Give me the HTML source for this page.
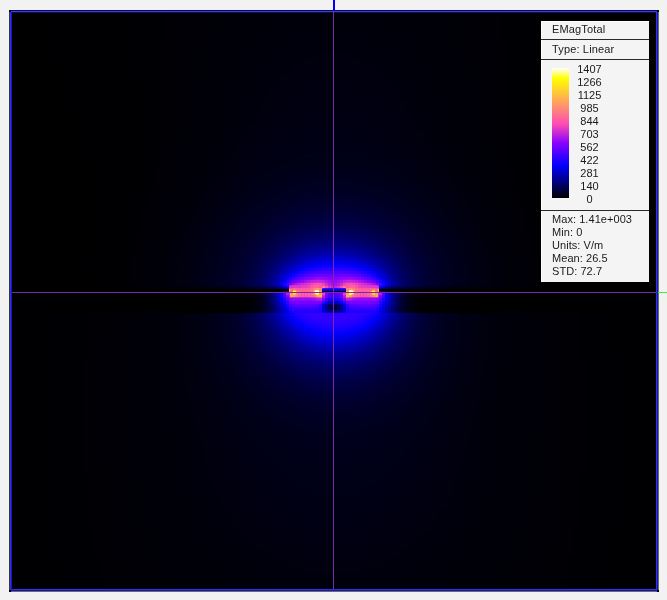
<!DOCTYPE html>
<html lang="en"><head><meta charset="utf-8"><title>EMagTotal field plot</title>
<style>
html,body{margin:0;padding:0}
body{width:667px;height:600px;background:#f2f2f2;position:relative;overflow:hidden;font-family:"Liberation Sans",sans-serif;font-size:11px;color:#1a1a1a}
.frame{position:absolute;left:9px;top:10px;width:650px;height:582px;background:#000}
.field{position:absolute;left:0;top:0}
.e{position:absolute}
.legend .t,.lb,.st{filter:grayscale(1)}
.vline{position:absolute;left:333px;top:12px;width:1px;height:577px;background:#7a28a6}
.hline{position:absolute;left:12px;top:292px;width:644px;height:1px;background:#7a28a6}
.vstub{position:absolute;left:333px;top:0;width:2px;height:10px;background:#0000ff}
.hstub{position:absolute;left:658px;top:292px;width:9px;height:1px;background:#40f040}
.legend{position:absolute;left:541px;top:21px;width:108px;height:261px;background:#f4f4f4;box-shadow:inset 1px 1px 0 #fdfdfd}
.legend .ln{position:absolute;left:0;width:108px;height:1px;background:#2a2a2a}
.legend .t{position:absolute;left:11px;white-space:nowrap;line-height:13px;letter-spacing:0.15px}
.bar{position:absolute;left:11px;top:47px;width:17px;height:130px;background:linear-gradient(to top,#000 0%,#0000ff 25%,#8700ff 42%,#ff4cb2 57%,#ffff00 92%,#ffffff 100%)}
.lb{position:absolute;left:18.5px;width:60px;text-align:center;line-height:13px;white-space:nowrap}
.st{position:absolute;left:11px;line-height:13px;white-space:nowrap;letter-spacing:0.06px}
</style></head><body>
<div class="frame"></div>
<svg class="field" width="667" height="600" viewBox="0 0 667 600">
<defs>
<clipPath id="fc"><rect x="9" y="10" width="650" height="582"/></clipPath>
<filter id="soft" color-interpolation-filters="sRGB" x="-5%" y="-5%" width="110%" height="110%"><feGaussianBlur stdDeviation="0.7"/></filter>
<filter id="soft3" color-interpolation-filters="sRGB" x="-5%" y="-5%" width="110%" height="110%"><feGaussianBlur stdDeviation="2.2"/></filter>
<filter id="soft2" color-interpolation-filters="sRGB" x="-10%" y="-30%" width="120%" height="160%"><feGaussianBlur stdDeviation="0.55"/></filter>
</defs>
<g clip-path="url(#fc)">
<g filter="url(#soft3)" stroke-width="6.5" fill="none">
<path stroke="#000001" d="M4 13h36M628 13h36M4 19h42M622 19h42M4 25h42M622 25h42M4 31h42M622 31h42M4 37h42M622 37h42M4 43h42M622 43h42M4 49h48M616 49h48M4 55h48M616 55h48M4 61h48M616 61h48M4 67h54M610 67h54M4 73h54M610 73h54M4 79h54M610 79h54M4 85h54M610 85h54M4 91h60M604 91h60M4 97h60M604 97h60M4 103h60M604 103h60M4 109h66M598 109h66M4 115h66M598 115h66M4 121h72M592 121h72M4 127h72M592 127h72M4 133h72M592 133h72M4 139h78M586 139h78M4 145h78M586 145h78M4 151h78M586 151h78M4 157h84M580 157h84M4 163h84M580 163h84M4 169h90M574 169h90M4 175h90M574 175h90M4 181h90M574 181h90M4 187h96M568 187h96M4 193h96M568 193h96M4 199h96M568 199h96M4 205h96M568 205h96M4 211h96M568 211h96M4 217h90M574 217h90M4 223h90M574 223h90M4 229h90M574 229h90M4 235h90M574 235h90M4 241h90M574 241h90M4 247h90M574 247h90M4 253h90M574 253h90M4 259h84M580 259h84M4 265h84M580 265h84M4 271h84M580 271h84M4 277h84M580 277h84M4 283h84M580 283h84M22 289h84M562 289h84"/>
<path stroke="#000002" d="M40 13h60M568 13h60M46 19h54M568 19h54M46 25h54M568 25h54M46 31h54M568 31h54M46 37h54M568 37h54M46 43h54M568 43h54M52 49h54M562 49h54M52 55h54M562 55h54M52 61h54M562 61h54M58 67h48M562 67h48M58 73h48M562 73h48M58 79h48M562 79h48M58 85h54M556 85h54M64 91h48M556 91h48M64 97h48M556 97h48M64 103h48M556 103h48M70 109h48M550 109h48M70 115h48M550 115h48M76 121h42M550 121h42M76 127h42M550 127h42M76 133h48M544 133h48M82 139h42M544 139h42M82 145h42M544 145h42M82 151h48M538 151h48M88 157h42M538 157h42M88 163h42M538 163h42M94 169h36M538 169h36M94 175h36M538 175h36M94 181h30M544 181h30M100 187h24M544 187h24M100 193h24M544 193h24M100 199h24M544 199h24M100 205h24M544 205h24M100 211h18M550 211h18M94 217h24M550 217h24M94 223h24M550 223h24M94 229h24M550 229h24M94 235h24M550 235h24M94 241h18M556 241h18M94 247h18M556 247h18M94 253h18M556 253h18M88 259h24M556 259h24M88 265h24M556 265h24M88 271h24M556 271h24M88 277h24M556 277h24M88 283h18M562 283h18M106 289h24M538 289h24M4 313h6M658 313h6M4 319h6M658 319h6M4 325h6M658 325h6M4 331h6M658 331h6M4 337h6M658 337h6M4 343h6M658 343h6M4 349h6M658 349h6M4 355h6M658 355h6M4 583h6M658 583h6M4 589h6M658 589h6"/>
<path stroke="#000003" d="M100 13h36M532 13h36M100 19h36M532 19h36M100 25h36M532 25h36M100 31h36M532 31h36M100 37h36M532 37h36M100 43h36M532 43h36M106 49h30M532 49h30M106 55h30M532 55h30M106 61h30M532 61h30M106 67h30M532 67h30M106 73h30M532 73h30M106 79h30M532 79h30M112 85h30M526 85h30M112 91h30M526 91h30M112 97h30M526 97h30M112 103h30M526 103h30M118 109h24M526 109h24M118 115h24M526 115h24M118 121h24M526 121h24M118 127h30M520 127h30M124 133h24M520 133h24M124 139h24M520 139h24M124 145h24M520 145h24M130 151h18M520 151h18M130 157h18M520 157h18M130 163h18M520 163h18M130 169h12M526 169h12M130 175h12M526 175h12M124 181h18M526 181h18M124 187h18M526 187h18M124 193h12M532 193h12M124 199h12M532 199h12M124 205h12M532 205h12M118 211h18M532 211h18M118 217h12M538 217h12M118 223h12M538 223h12M118 229h12M538 229h12M118 235h12M538 235h12M112 241h12M544 241h12M112 247h12M544 247h12M112 253h12M544 253h12M112 259h12M544 259h12M112 265h12M544 265h12M112 271h12M544 271h12M112 277h12M544 277h12M106 283h18M544 283h18M130 289h12M526 289h12M10 313h48M610 313h48M10 319h48M610 319h48M10 325h48M610 325h48M10 331h48M610 331h48M10 337h48M610 337h48M10 343h48M610 343h48M10 349h48M610 349h48M10 355h42M616 355h42M4 361h48M616 361h48M4 367h48M616 367h48M4 373h48M616 373h48M4 379h48M616 379h48M4 385h48M616 385h48M4 391h48M616 391h48M4 397h48M616 397h48M4 403h48M616 403h48M4 409h48M616 409h48M4 415h48M616 415h48M4 421h48M616 421h48M4 427h48M616 427h48M4 433h48M616 433h48M4 439h48M616 439h48M4 445h48M616 445h48M4 451h48M616 451h48M4 457h48M616 457h48M4 463h48M616 463h48M4 469h48M616 469h48M4 475h48M616 475h48M4 481h48M616 481h48M4 487h48M616 487h48M4 493h48M616 493h48M4 499h48M616 499h48M4 505h48M616 505h48M4 511h48M616 511h48M4 517h48M616 517h48M4 523h54M610 523h54M4 529h54M610 529h54M4 535h54M610 535h54M4 541h54M610 541h54M4 547h54M610 547h54M4 553h54M610 553h54M4 559h54M610 559h54M4 565h54M610 565h54M4 571h60M604 571h60M4 577h60M604 577h60M10 583h54M604 583h54M10 589h54M604 589h54"/>
<path stroke="#000004" d="M136 13h30M502 13h30M136 19h30M502 19h30M136 25h30M502 25h30M136 31h30M502 31h30M136 37h30M502 37h30M136 43h24M508 43h24M136 49h24M508 49h24M136 55h24M508 55h24M136 61h24M508 61h24M136 67h24M508 67h24M136 73h24M508 73h24M136 79h24M508 79h24M142 85h18M508 85h18M142 91h18M508 91h18M142 97h18M508 97h18M142 103h18M508 103h18M142 109h18M508 109h18M142 115h18M508 115h18M142 121h18M508 121h18M148 127h12M508 127h12M148 133h12M508 133h12M148 139h12M508 139h12M148 145h12M508 145h12M148 151h12M508 151h12M148 157h12M508 157h12M148 163h12M508 163h12M142 169h12M514 169h12M142 175h12M514 175h12M142 181h12M514 181h12M142 187h12M514 187h12M136 193h12M520 193h12M136 199h12M520 199h12M136 205h12M520 205h12M136 211h6M526 211h6M130 217h12M526 217h12M130 223h12M526 223h12M130 229h12M526 229h12M130 235h6M532 235h6M124 241h12M532 241h12M124 247h12M532 247h12M124 253h12M532 253h12M124 259h6M538 259h6M124 265h6M538 265h6M124 271h6M538 271h6M124 277h6M538 277h6M124 283h6M538 283h6M142 289h6M520 289h6M58 313h30M580 313h30M58 319h30M580 319h30M58 325h30M580 325h30M58 331h30M580 331h30M58 337h30M580 337h30M58 343h30M580 343h30M58 349h30M580 349h30M52 355h36M580 355h36M52 361h30M586 361h30M52 367h30M586 367h30M52 373h30M586 373h30M52 379h30M586 379h30M52 385h30M586 385h30M52 391h30M586 391h30M52 397h30M586 397h30M52 403h30M586 403h30M52 409h30M586 409h30M52 415h30M586 415h30M52 421h30M586 421h30M52 427h30M586 427h30M52 433h30M586 433h30M52 439h30M586 439h30M52 445h30M586 445h30M52 451h30M586 451h30M52 457h30M586 457h30M52 463h30M586 463h30M52 469h30M586 469h30M52 475h36M580 475h36M52 481h36M580 481h36M52 487h36M580 487h36M52 493h36M580 493h36M52 499h36M580 499h36M52 505h36M580 505h36M52 511h36M580 511h36M52 517h36M580 517h36M58 523h30M580 523h30M58 529h36M574 529h36M58 535h36M574 535h36M58 541h36M574 541h36M58 547h36M574 547h36M58 553h36M574 553h36M58 559h42M568 559h42M58 565h42M568 565h42M64 571h36M568 571h36M64 577h36M568 577h36M64 583h42M562 583h42M64 589h42M562 589h42"/>
<path stroke="#000005" d="M166 13h24M478 13h24M166 19h24M478 19h24M166 25h24M478 25h24M166 31h18M484 31h18M166 37h18M484 37h18M160 43h24M484 43h24M160 49h24M484 49h24M160 55h18M490 55h18M160 61h18M490 61h18M160 67h18M490 67h18M160 73h18M490 73h18M160 79h18M490 79h18M160 85h18M490 85h18M160 91h18M490 91h18M160 97h18M490 97h18M160 103h18M490 103h18M160 109h18M490 109h18M160 115h18M490 115h18M160 121h18M490 121h18M160 127h12M496 127h12M160 133h12M496 133h12M160 139h12M496 139h12M160 145h12M496 145h12M160 151h12M496 151h12M160 157h12M496 157h12M160 163h6M502 163h6M154 169h12M502 169h12M154 175h12M502 175h12M154 181h6M508 181h6M154 187h6M508 187h6M148 193h12M508 193h12M148 199h6M514 199h6M148 205h6M514 205h6M142 211h12M514 211h12M142 217h6M520 217h6M142 223h6M520 223h6M142 229h6M520 229h6M136 235h12M520 235h12M136 241h6M526 241h6M136 247h6M526 247h6M136 253h6M526 253h6M130 259h12M526 259h12M130 265h12M526 265h12M130 271h6M532 271h6M130 277h6M532 277h6M130 283h6M532 283h6M148 289h12M508 289h12M88 313h24M556 313h24M88 319h24M556 319h24M88 325h24M556 325h24M88 331h24M556 331h24M88 337h18M562 337h18M88 343h18M562 343h18M88 349h18M562 349h18M88 355h18M562 355h18M82 361h24M562 361h24M82 367h24M562 367h24M82 373h24M562 373h24M82 379h24M562 379h24M82 385h24M562 385h24M82 391h24M562 391h24M82 397h24M562 397h24M82 403h24M562 403h24M82 409h24M562 409h24M82 415h24M562 415h24M82 421h24M562 421h24M82 427h24M562 427h24M82 433h24M562 433h24M82 439h24M562 439h24M82 445h24M562 445h24M82 451h24M562 451h24M82 457h24M562 457h24M82 463h24M562 463h24M82 469h30M556 469h30M88 475h24M556 475h24M88 481h24M556 481h24M88 487h24M556 487h24M88 493h24M556 493h24M88 499h24M556 499h24M88 505h24M556 505h24M88 511h30M550 511h30M88 517h30M550 517h30M88 523h30M550 523h30M94 529h24M550 529h24M94 535h24M550 535h24M94 541h30M544 541h30M94 547h30M544 547h30M94 553h30M544 553h30M100 559h24M544 559h24M100 565h30M538 565h30M100 571h30M538 571h30M100 577h36M532 577h36M106 583h30M532 583h30M106 589h30M532 589h30"/>
<path stroke="#000006" d="M190 13h24M454 13h24M190 19h24M454 19h24M190 25h18M460 25h18M184 31h24M460 31h24M184 37h18M466 37h18M184 43h18M466 43h18M184 49h18M466 49h18M178 55h18M472 55h18M178 61h18M472 61h18M178 67h18M472 67h18M178 73h18M472 73h18M178 79h12M478 79h12M178 85h12M478 85h12M178 91h12M478 91h12M178 97h12M478 97h12M178 103h12M478 103h12M178 109h12M478 109h12M178 115h12M478 115h12M178 121h12M478 121h12M172 127h12M484 127h12M172 133h12M484 133h12M166 163h6M496 163h6M166 169h6M496 169h6M166 175h6M496 175h6M160 181h12M496 181h12M160 187h12M496 187h12M160 193h6M502 193h6M154 199h12M502 199h12M154 205h6M508 205h6M154 211h6M508 211h6M148 217h12M508 217h12M148 223h6M514 223h6M148 229h6M514 229h6M148 235h6M514 235h6M142 241h12M514 241h12M142 247h6M520 247h6M142 253h6M520 253h6M142 259h6M520 259h6M142 265h6M520 265h6M136 271h12M520 271h12M136 277h6M526 277h6M136 283h6M526 283h6M160 289h6M502 289h6M112 313h18M538 313h18M112 319h12M544 319h12M112 325h12M544 325h12M112 331h12M544 331h12M106 337h18M544 337h18M106 343h18M544 343h18M106 349h18M544 349h18M106 355h18M544 355h18M106 361h18M544 361h18M106 367h18M544 367h18M106 373h18M544 373h18M106 379h18M544 379h18M106 385h18M544 385h18M106 391h18M544 391h18M106 397h18M544 397h18M106 403h18M544 403h18M106 409h18M544 409h18M106 415h18M544 415h18M106 421h18M544 421h18M106 427h18M544 427h18M106 433h18M544 433h18M106 439h18M544 439h18M106 445h18M544 445h18M106 451h18M544 451h18M106 457h18M544 457h18M106 463h24M538 463h24M112 469h18M538 469h18M112 475h18M538 475h18M112 481h18M538 481h18M112 487h18M538 487h18M112 493h18M538 493h18M112 499h24M532 499h24M112 505h24M532 505h24M118 511h18M532 511h18M118 517h18M532 517h18M118 523h18M532 523h18M118 529h24M526 529h24M118 535h24M526 535h24M124 541h18M526 541h18M124 547h24M520 547h24M124 553h24M520 553h24M124 559h24M520 559h24M130 565h24M514 565h24M130 571h24M514 571h24M136 577h24M508 577h24M136 583h24M508 583h24M136 589h30M502 589h30"/>
<path stroke="#000007" d="M214 13h24M430 13h24M214 19h18M436 19h18M208 25h18M442 25h18M208 31h18M442 31h18M202 37h18M448 37h18M202 43h18M448 43h18M202 49h12M454 49h12M196 55h18M454 55h18M196 61h12M460 61h12M196 67h12M460 67h12M196 73h12M460 73h12M190 79h18M460 79h18M190 85h12M466 85h12M190 91h12M466 91h12M190 97h12M466 97h12M190 103h12M466 103h12M190 109h12M466 109h12M190 115h6M472 115h6M190 121h6M472 121h6M184 127h12M472 127h12M184 133h12M472 133h12M166 193h6M496 193h6M166 199h6M496 199h6M160 205h12M496 205h12M160 211h6M502 211h6M160 217h6M502 217h6M154 223h6M508 223h6M154 229h6M508 229h6M154 235h6M508 235h6M154 241h6M508 241h6M148 247h6M514 247h6M148 253h6M514 253h6M148 259h6M514 259h6M148 265h6M514 265h6M148 271h6M514 271h6M142 277h6M520 277h6M142 283h6M520 283h6M166 289h6M496 289h6M130 313h12M526 313h12M124 319h18M526 319h18M124 325h12M532 325h12M124 331h12M532 331h12M124 337h12M532 337h12M124 343h12M532 343h12M124 349h12M532 349h12M124 355h12M532 355h12M124 361h12M532 361h12M124 367h12M532 367h12M124 373h12M532 373h12M124 379h12M532 379h12M124 385h12M532 385h12M124 391h12M532 391h12M124 397h12M532 397h12M124 403h12M532 403h12M124 409h12M532 409h12M124 415h12M532 415h12M124 421h12M532 421h12M124 427h12M532 427h12M124 433h18M526 433h18M124 439h18M526 439h18M124 445h18M526 445h18M124 451h18M526 451h18M124 457h18M526 457h18M130 463h12M526 463h12M130 469h12M526 469h12M130 475h12M526 475h12M130 481h18M520 481h18M130 487h18M520 487h18M130 493h18M520 493h18M136 499h12M520 499h12M136 505h18M514 505h18M136 511h18M514 511h18M136 517h18M514 517h18M136 523h18M514 523h18M142 529h18M508 529h18M142 535h18M508 535h18M142 541h24M502 541h24M148 547h18M502 547h18M148 553h18M502 553h18M148 559h24M496 559h24M154 565h18M496 565h18M154 571h24M490 571h24M160 577h24M484 577h24M160 583h24M484 583h24M166 589h24M478 589h24"/>
<path stroke="#000008" d="M238 13h24M406 13h24M232 19h24M412 19h24M226 25h24M418 25h24M226 31h18M424 31h18M220 37h18M430 37h18M220 43h12M436 43h12M214 49h18M436 49h18M214 55h12M442 55h12M208 61h18M442 61h18M208 67h12M448 67h12M208 73h12M448 73h12M208 79h12M448 79h12M202 85h12M454 85h12M202 91h12M454 91h12M202 97h12M454 97h12M202 103h12M454 103h12M202 109h6M460 109h6M196 115h12M460 115h12M196 121h12M460 121h12M196 127h12M460 127h12M196 133h6M466 133h6M166 211h6M496 211h6M166 217h6M496 217h6M160 223h6M502 223h6M160 229h6M502 229h6M160 235h6M502 235h6M154 247h6M508 247h6M154 253h6M508 253h6M154 259h6M508 259h6M154 265h6M508 265h6M148 277h6M514 277h6M148 283h6M514 283h6M142 313h6M520 313h6M142 319h6M520 319h6M136 325h12M520 325h12M136 331h12M520 331h12M136 337h12M520 337h12M136 343h12M520 343h12M136 349h12M520 349h12M136 355h12M520 355h12M136 361h12M520 361h12M136 367h12M520 367h12M136 373h12M520 373h12M136 379h12M520 379h12M136 385h12M520 385h12M136 391h12M520 391h12M136 397h12M520 397h12M136 403h12M520 403h12M136 409h12M520 409h12M136 415h12M520 415h12M136 421h18M514 421h18M136 427h18M514 427h18M142 433h12M514 433h12M142 439h12M514 439h12M142 445h12M514 445h12M142 451h12M514 451h12M142 457h12M514 457h12M142 463h12M514 463h12M142 469h12M514 469h12M142 475h18M508 475h18M148 481h12M508 481h12M148 487h12M508 487h12M148 493h12M508 493h12M148 499h18M502 499h18M154 505h12M502 505h12M154 511h12M502 511h12M154 517h18M496 517h18M154 523h18M496 523h18M160 529h12M496 529h12M160 535h18M490 535h18M166 541h12M490 541h12M166 547h18M484 547h18M166 553h18M484 553h18M172 559h18M478 559h18M172 565h24M472 565h24M178 571h18M472 571h18M184 577h18M466 577h18M184 583h24M460 583h24M190 589h24M454 589h24"/>
<path stroke="#000009" d="M262 13h24M382 13h24M256 19h18M394 19h18M250 25h18M400 25h18M244 31h18M406 31h18M238 37h18M412 37h18M232 43h18M418 43h18M232 49h12M424 49h12M226 55h12M430 55h12M226 61h12M430 61h12M220 67h12M436 67h12M220 73h12M436 73h12M220 79h12M436 79h12M214 85h12M442 85h12M214 91h12M442 91h12M214 97h12M442 97h12M214 103h6M448 103h6M208 109h12M448 109h12M208 115h12M448 115h12M208 121h6M454 121h6M208 127h6M454 127h6M202 133h12M454 133h12M166 223h6M496 223h6M166 229h6M496 229h6M166 235h6M496 235h6M160 241h6M502 241h6M160 247h6M502 247h6M160 253h6M502 253h6M160 259h6M502 259h6M154 271h6M508 271h6M154 277h6M508 277h6M154 283h6M508 283h6M148 313h12M508 313h12M148 319h12M508 319h12M148 325h12M508 325h12M148 331h6M514 331h6M148 337h6M514 337h6M148 343h6M514 343h6M148 349h6M514 349h6M148 355h6M514 355h6M148 361h6M514 361h6M148 367h6M514 367h6M148 373h12M508 373h12M148 379h12M508 379h12M148 385h12M508 385h12M148 391h12M508 391h12M148 397h12M508 397h12M148 403h12M508 403h12M148 409h12M508 409h12M148 415h12M508 415h12M154 421h6M508 421h6M154 427h6M508 427h6M154 433h12M502 433h12M154 439h12M502 439h12M154 445h12M502 445h12M154 451h12M502 451h12M154 457h12M502 457h12M154 463h12M502 463h12M154 469h12M502 469h12M160 475h12M496 475h12M160 481h12M496 481h12M160 487h12M496 487h12M160 493h12M496 493h12M166 499h12M490 499h12M166 505h12M490 505h12M166 511h18M484 511h18M172 517h12M484 517h12M172 523h12M484 523h12M172 529h18M478 529h18M178 535h12M478 535h12M178 541h18M472 541h18M184 547h18M466 547h18M184 553h18M466 553h18M190 559h18M460 559h18M196 565h18M454 565h18M196 571h18M454 571h18M202 577h18M448 577h18M208 583h18M442 583h18M214 589h18M436 589h18"/>
<path stroke="#00000a" d="M286 13h96M274 19h36M358 19h36M268 25h24M376 25h24M262 31h18M388 31h18M256 37h18M394 37h18M250 43h18M400 43h18M244 49h18M406 49h18M238 55h18M412 55h18M238 61h12M418 61h12M232 67h12M424 67h12M232 73h12M424 73h12M232 79h6M430 79h6M226 85h12M430 85h12M226 91h12M430 91h12M226 97h6M436 97h6M220 103h12M436 103h12M220 109h12M436 109h12M220 115h6M442 115h6M214 121h12M442 121h12M214 127h12M442 127h12M214 133h6M448 133h6M166 241h6M496 241h6M166 247h6M496 247h6M160 265h6M502 265h6M160 271h6M502 271h6M160 277h6M502 277h6M160 283h6M502 283h6M160 313h6M502 313h6M160 319h6M502 319h6M160 325h6M502 325h6M154 331h12M502 331h12M154 337h12M502 337h12M154 343h12M502 343h12M154 349h12M502 349h12M154 355h12M502 355h12M154 361h12M502 361h12M154 367h12M502 367h12M160 373h6M502 373h6M160 379h6M502 379h6M160 385h6M502 385h6M160 391h6M502 391h6M160 397h6M502 397h6M160 403h6M502 403h6M160 409h12M496 409h12M160 415h12M496 415h12M160 421h12M496 421h12M160 427h12M496 427h12M166 433h6M496 433h6M166 439h6M496 439h6M166 445h6M496 445h6M166 451h6M496 451h6M166 457h6M496 457h6M166 463h12M490 463h12M166 469h12M490 469h12M172 475h12M484 475h12M172 481h12M484 481h12M172 487h12M484 487h12M172 493h12M484 493h12M178 499h12M478 499h12M178 505h12M478 505h12M184 511h12M472 511h12M184 517h12M472 517h12M184 523h18M466 523h18M190 529h12M466 529h12M190 535h18M460 535h18M196 541h12M460 541h12M202 547h12M454 547h12M202 553h18M448 553h18M208 559h18M442 559h18M214 565h18M436 565h18M214 571h24M430 571h24M220 577h24M424 577h24M226 583h24M418 583h24M232 589h24M412 589h24"/>
<path stroke="#00000b" d="M310 19h48M292 25h84M280 31h30M358 31h30M274 37h18M376 37h18M268 43h18M382 43h18M262 49h12M394 49h12M256 55h12M400 55h12M250 61h12M406 61h12M244 67h18M406 67h18M244 73h12M412 73h12M238 79h12M418 79h12M238 85h12M418 85h12M238 91h6M424 91h6M232 97h12M424 97h12M232 103h12M424 103h12M232 109h6M430 109h6M226 115h12M430 115h12M226 121h6M436 121h6M226 127h6M436 127h6M220 133h12M436 133h12M166 253h6M496 253h6M166 259h6M496 259h6M166 265h6M496 265h6M166 271h6M496 271h6M166 277h6M496 277h6M166 313h6M496 313h6M166 319h6M496 319h6M166 325h6M496 325h6M166 331h6M496 331h6M166 337h6M496 337h6M166 343h6M496 343h6M166 349h6M496 349h6M166 355h6M496 355h6M166 361h6M496 361h6M166 367h6M496 367h6M166 373h6M496 373h6M166 379h6M496 379h6M166 385h6M496 385h6M166 391h6M496 391h6M166 397h6M496 397h6M166 403h6M496 403h6M178 463h12M478 463h12M178 469h12M478 469h12M184 475h6M478 475h6M184 481h6M478 481h6M184 487h12M472 487h12M184 493h12M472 493h12M190 499h6M472 499h6M190 505h12M466 505h12M196 511h6M466 511h6M196 517h12M460 517h12M202 523h6M460 523h6M202 529h12M454 529h12M208 535h12M448 535h12M208 541h18M442 541h18M214 547h12M442 547h12M220 553h12M436 553h12M226 559h12M430 559h12M232 565h12M424 565h12M238 571h18M412 571h18M244 577h18M406 577h18M250 583h24M394 583h24M256 589h30M382 589h30"/>
<path stroke="#00000c" d="M310 31h48M292 37h84M286 43h24M358 43h24M274 49h24M370 49h24M268 55h18M382 55h18M262 61h18M388 61h18M262 67h12M394 67h12M256 73h12M400 73h12M250 79h18M400 79h18M250 85h12M406 85h12M244 91h12M412 91h12M244 97h12M412 97h12M244 103h6M418 103h6M238 109h12M418 109h12M238 115h6M424 115h6M232 121h12M424 121h12M232 127h6M430 127h6M232 133h6M430 133h6M166 283h6M496 283h6M190 463h6M472 463h6M190 469h12M466 469h12M190 475h12M466 475h12M190 481h12M466 481h12M196 487h6M466 487h6M196 493h12M460 493h12M196 499h12M460 499h12M202 505h12M454 505h12M202 511h12M454 511h12M208 517h12M448 517h12M208 523h12M448 523h12M214 529h12M442 529h12M220 535h12M436 535h12M226 541h12M430 541h12M226 547h18M424 547h18M232 553h18M418 553h18M238 559h18M412 559h18M244 565h24M400 565h24M256 571h18M394 571h18M262 577h30M376 577h30M274 583h36M358 583h36M286 589h96"/>
<path stroke="#00000d" d="M310 43h48M298 49h72M286 55h30M352 55h30M280 61h24M364 61h24M274 67h18M376 67h18M268 73h18M382 73h18M268 79h12M388 79h12M262 85h12M394 85h12M256 91h12M400 91h12M256 97h12M400 97h12M250 103h12M406 103h12M250 109h12M406 109h12M244 115h12M412 115h12M244 121h12M412 121h12M238 127h12M418 127h12M238 133h6M424 133h6M196 463h12M460 463h12M202 469h6M460 469h6M202 475h6M460 475h6M202 481h12M454 481h12M202 487h12M454 487h12M208 493h6M454 493h6M208 499h12M448 499h12M214 505h6M448 505h6M214 511h12M442 511h12M220 517h12M436 517h12M220 523h12M436 523h12M226 529h12M430 529h12M232 535h12M424 535h12M238 541h12M418 541h12M244 547h12M412 547h12M250 553h18M400 553h18M256 559h18M394 559h18M268 565h18M382 565h18M274 571h30M364 571h30M292 577h84M310 583h48"/>
<path stroke="#00000e" d="M316 55h36M304 61h60M292 67h30M346 67h30M286 73h18M364 73h18M280 79h18M370 79h18M274 85h18M376 85h18M268 91h18M382 91h18M268 97h12M388 97h12M262 103h12M394 103h12M262 109h12M394 109h12M256 115h12M400 115h12M256 121h6M406 121h6M250 127h12M406 127h12M244 133h12M412 133h12M208 463h6M454 463h6M208 469h6M454 469h6M208 475h12M448 475h12M214 481h6M448 481h6M214 487h12M442 487h12M214 493h12M442 493h12M220 499h12M436 499h12M220 505h12M436 505h12M226 511h12M430 511h12M232 517h6M430 517h6M232 523h12M424 523h12M238 529h12M418 529h12M244 535h12M412 535h12M250 541h12M406 541h12M256 547h18M394 547h18M268 553h18M382 553h18M274 559h24M370 559h24M286 565h96M304 571h60"/>
<path stroke="#00000f" d="M322 67h24M304 73h60M298 79h72M292 85h24M352 85h24M286 91h18M364 91h18M280 97h18M370 97h18M274 103h18M376 103h18M274 109h12M382 109h12M268 115h12M388 115h12M262 121h12M394 121h12M262 127h6M400 127h6M256 133h6M406 133h6M214 463h12M442 463h12M214 469h12M442 469h12M220 475h6M442 475h6M220 481h12M436 481h12M226 487h6M436 487h6M226 493h12M430 493h12M232 499h6M430 499h6M232 505h12M424 505h12M238 511h6M424 511h6M238 517h12M418 517h12M244 523h12M412 523h12M250 529h12M406 529h12M256 535h12M400 535h12M262 541h18M388 541h18M274 547h18M376 547h18M286 553h24M358 553h24M298 559h72"/>
<path stroke="#000010" d="M316 85h36M304 91h60M298 97h30M340 97h30M292 103h18M358 103h18M286 109h18M364 109h18M280 115h12M376 115h12M274 121h12M382 121h12M268 127h12M388 127h12M262 133h12M394 133h12M226 463h6M436 463h6M226 469h6M436 469h6M226 475h12M430 475h12M232 481h6M430 481h6M232 487h12M424 487h12M238 493h6M424 493h6M238 499h12M418 499h12M244 505h12M412 505h12M244 511h12M412 511h12M250 517h12M406 517h12M256 523h12M400 523h12M262 529h18M388 529h18M268 535h18M382 535h18M280 541h18M370 541h18M292 547h84M310 553h48"/>
<path stroke="#000011" d="M328 97h12M310 103h48M304 109h60M292 115h24M352 115h24M286 121h18M364 121h18M280 127h18M370 127h18M274 133h12M382 133h12M232 463h6M430 463h6M232 469h12M424 469h12M238 475h6M424 475h6M238 481h12M418 481h12M244 487h6M418 487h6M244 493h12M412 493h12M250 499h12M406 499h12M256 505h6M406 505h6M256 511h12M400 511h12M262 517h12M394 517h12M268 523h18M382 523h18M280 529h12M376 529h12M286 535h24M358 535h24M298 541h72"/>
<path stroke="#000012" d="M316 115h36M304 121h60M298 127h24M346 127h24M286 133h18M364 133h18M238 463h12M418 463h12M244 469h6M418 469h6M244 475h12M412 475h12M250 481h6M412 481h6M250 487h12M406 487h12M256 493h12M400 493h12M262 499h6M400 499h6M262 505h12M394 505h12M268 511h18M382 511h18M274 517h18M376 517h18M286 523h18M364 523h18M292 529h84M310 535h48"/>
<path stroke="#000013" d="M322 127h24M304 133h60M250 463h6M412 463h6M250 469h6M412 469h6M256 475h6M406 475h6M256 481h12M400 481h12M262 487h12M394 487h12M268 493h12M388 493h12M268 499h18M382 499h18M274 505h18M376 505h18M286 511h12M370 511h12M292 517h24M352 517h24M304 523h60"/>
<path stroke="#000014" d="M256 463h6M406 463h6M256 469h12M400 469h12M262 475h12M394 475h12M268 481h12M388 481h12M274 487h12M382 487h12M280 493h12M376 493h12M286 499h12M370 499h12M292 505h18M358 505h18M298 511h72M316 517h36"/>
<path stroke="#000015" d="M262 463h12M394 463h12M268 469h12M388 469h12M274 475h12M382 475h12M280 481h12M376 481h12M286 487h12M370 487h12M292 493h18M358 493h18M298 499h72M310 505h48"/>
<path stroke="#000016" d="M274 463h6M388 463h6M280 469h6M382 469h6M286 475h12M370 475h12M292 481h12M364 481h12M298 487h24M346 487h24M310 493h48"/>
<path stroke="#000017" d="M280 463h12M376 463h12M286 469h18M364 469h18M298 475h18M352 475h18M304 481h60M322 487h24"/>
<path stroke="#000018" d="M292 463h18M358 463h18M304 469h24M340 469h24M316 475h36"/>
<path stroke="#000019" d="M310 463h48M328 469h12"/>
</g>
<g filter="url(#soft)" stroke-width="3.4" fill="none">
<path stroke="#000005" d="M166 131.5h9M493 131.5h9M166 134.5h9M493 134.5h9M166 137.5h9M493 137.5h9M166 140.5h6M496 140.5h6M166 143.5h6M496 143.5h6M166 146.5h6M496 146.5h6M166 149.5h6M496 149.5h6M166 152.5h6M496 152.5h6M166 155.5h3M499 155.5h3M166 158.5h3M499 158.5h3M166 161.5h3M499 161.5h3M166 164.5h3M499 164.5h3"/>
<path stroke="#000006" d="M175 131.5h9M484 131.5h9M175 134.5h9M484 134.5h9M175 137.5h9M484 137.5h9M172 140.5h12M484 140.5h12M172 143.5h12M484 143.5h12M172 146.5h9M487 146.5h9M172 149.5h9M487 149.5h9M172 152.5h9M487 152.5h9M169 155.5h12M487 155.5h12M169 158.5h9M490 158.5h9M169 161.5h9M490 161.5h9M169 164.5h9M490 164.5h9M166 167.5h9M493 167.5h9M166 170.5h9M493 170.5h9M166 173.5h9M493 173.5h9M166 176.5h6M496 176.5h6M166 179.5h6M496 179.5h6M166 182.5h6M496 182.5h6M166 185.5h3M499 185.5h3M166 188.5h3M499 188.5h3M250 302.5h3M415 302.5h3M250 305.5h3M415 305.5h3M250 308.5h3M415 308.5h3M250 311.5h3M415 311.5h3"/>
<path stroke="#000007" d="M184 131.5h12M472 131.5h12M184 134.5h12M472 134.5h12M184 137.5h9M475 137.5h9M184 140.5h9M475 140.5h9M184 143.5h9M475 143.5h9M181 146.5h9M478 146.5h9M181 149.5h9M478 149.5h9M181 152.5h9M478 152.5h9M181 155.5h6M481 155.5h6M178 158.5h9M481 158.5h9M178 161.5h9M481 161.5h9M178 164.5h6M484 164.5h6M175 167.5h9M484 167.5h9M175 170.5h9M484 170.5h9M175 173.5h6M487 173.5h6M172 176.5h9M487 176.5h9M172 179.5h6M490 179.5h6M172 182.5h6M490 182.5h6M169 185.5h9M490 185.5h9M169 188.5h6M493 188.5h6M166 191.5h9M493 191.5h9M166 194.5h6M496 194.5h6M166 197.5h6M496 197.5h6M166 200.5h6M496 200.5h6M166 203.5h3M499 203.5h3M166 206.5h3M499 206.5h3M166 287.5h6M496 287.5h6M250 293.5h3M415 293.5h3M250 296.5h3M415 296.5h3M250 299.5h3M415 299.5h3"/>
<path stroke="#000008" d="M196 131.5h9M463 131.5h9M196 134.5h9M463 134.5h9M193 137.5h9M466 137.5h9M193 140.5h9M466 140.5h9M193 143.5h9M466 143.5h9M190 146.5h9M469 146.5h9M190 149.5h9M469 149.5h9M190 152.5h9M469 152.5h9M187 155.5h9M472 155.5h9M187 158.5h9M472 158.5h9M187 161.5h6M475 161.5h6M184 164.5h9M475 164.5h9M184 167.5h9M475 167.5h9M184 170.5h6M478 170.5h6M181 173.5h9M478 173.5h9M181 176.5h6M481 176.5h6M178 179.5h9M481 179.5h9M178 182.5h6M484 182.5h6M178 185.5h6M484 185.5h6M175 188.5h6M487 188.5h6M175 191.5h6M487 191.5h6M172 194.5h9M487 194.5h9M172 197.5h6M490 197.5h6M172 200.5h6M490 200.5h6M169 203.5h6M493 203.5h6M169 206.5h6M493 206.5h6M166 209.5h6M496 209.5h6M166 212.5h6M496 212.5h6M166 215.5h6M496 215.5h6M166 218.5h3M499 218.5h3M166 221.5h3M499 221.5h3M166 224.5h3M499 224.5h3M172 287.5h6M490 287.5h6"/>
<path stroke="#000009" d="M205 131.5h9M454 131.5h9M205 134.5h6M457 134.5h6M202 137.5h9M457 137.5h9M202 140.5h9M457 140.5h9M202 143.5h6M460 143.5h6M199 146.5h9M460 146.5h9M199 149.5h6M463 149.5h6M199 152.5h6M463 152.5h6M196 155.5h9M463 155.5h9M196 158.5h6M466 158.5h6M193 161.5h9M466 161.5h9M193 164.5h6M469 164.5h6M193 167.5h6M469 167.5h6M190 170.5h6M472 170.5h6M190 173.5h6M472 173.5h6M187 176.5h6M475 176.5h6M187 179.5h6M475 179.5h6M184 182.5h6M478 182.5h6M184 185.5h6M478 185.5h6M181 188.5h6M481 188.5h6M181 191.5h6M481 191.5h6M181 194.5h6M481 194.5h6M178 197.5h6M484 197.5h6M178 200.5h6M484 200.5h6M175 203.5h6M487 203.5h6M175 206.5h6M487 206.5h6M172 209.5h6M490 209.5h6M172 212.5h6M490 212.5h6M172 215.5h3M493 215.5h3M169 218.5h6M493 218.5h6M169 221.5h6M493 221.5h6M169 224.5h3M496 224.5h3M166 227.5h6M496 227.5h6M166 230.5h6M496 230.5h6M166 233.5h3M499 233.5h3M166 236.5h3M499 236.5h3M166 239.5h3M499 239.5h3M178 287.5h6M484 287.5h6M166 464.5h3M499 464.5h3"/>
<path stroke="#00000a" d="M214 131.5h9M445 131.5h9M211 134.5h9M448 134.5h9M211 137.5h9M448 137.5h9M211 140.5h6M451 140.5h6M208 143.5h9M451 143.5h9M208 146.5h6M454 146.5h6M205 149.5h9M454 149.5h9M205 152.5h9M454 152.5h9M205 155.5h6M457 155.5h6M202 158.5h9M457 158.5h9M202 161.5h6M460 161.5h6M199 164.5h9M460 164.5h9M199 167.5h6M463 167.5h6M196 170.5h9M463 170.5h9M196 173.5h6M466 173.5h6M193 176.5h6M469 176.5h6M193 179.5h6M469 179.5h6M190 182.5h6M472 182.5h6M190 185.5h6M472 185.5h6M187 188.5h6M475 188.5h6M187 191.5h6M475 191.5h6M187 194.5h3M478 194.5h3M184 197.5h6M478 197.5h6M184 200.5h3M481 200.5h3M181 203.5h6M481 203.5h6M181 206.5h3M484 206.5h3M178 209.5h6M484 209.5h6M178 212.5h6M484 212.5h6M175 215.5h6M487 215.5h6M175 218.5h6M487 218.5h6M175 221.5h3M490 221.5h3M172 224.5h6M490 224.5h6M172 227.5h6M490 227.5h6M172 230.5h3M493 230.5h3M169 233.5h6M493 233.5h6M169 236.5h3M496 236.5h3M169 239.5h3M496 239.5h3M166 242.5h6M496 242.5h6M166 245.5h6M496 245.5h6M166 248.5h3M499 248.5h3M166 251.5h3M499 251.5h3M166 254.5h3M499 254.5h3M166 257.5h3M499 257.5h3M184 287.5h3M481 287.5h3M253 305.5h3M412 305.5h3M253 308.5h3M412 308.5h3M253 311.5h3M412 311.5h3M166 392.5h3M499 392.5h3M166 395.5h3M499 395.5h3M166 398.5h3M499 398.5h3M166 401.5h3M499 401.5h3M166 404.5h3M499 404.5h3M166 407.5h3M499 407.5h3M166 410.5h3M499 410.5h3M166 413.5h3M499 413.5h3M166 416.5h6M496 416.5h6M166 419.5h6M496 419.5h6M166 422.5h6M496 422.5h6M166 425.5h6M496 425.5h6M166 428.5h6M496 428.5h6M166 431.5h6M496 431.5h6M166 434.5h9M493 434.5h9M166 437.5h9M493 437.5h9M166 440.5h9M493 440.5h9M166 443.5h9M493 443.5h9M166 446.5h9M493 446.5h9M166 449.5h9M493 449.5h9M166 452.5h12M490 452.5h12M166 455.5h12M490 455.5h12M166 458.5h12M490 458.5h12M166 461.5h12M490 461.5h12M169 464.5h9M490 464.5h9"/>
<path stroke="#00000b" d="M223 131.5h6M439 131.5h6M220 134.5h9M439 134.5h9M220 137.5h6M442 137.5h6M217 140.5h9M442 140.5h9M217 143.5h6M445 143.5h6M214 146.5h9M445 146.5h9M214 149.5h6M448 149.5h6M214 152.5h6M448 152.5h6M211 155.5h6M451 155.5h6M211 158.5h6M451 158.5h6M208 161.5h6M454 161.5h6M208 164.5h6M454 164.5h6M205 167.5h6M457 167.5h6M205 170.5h6M457 170.5h6M202 173.5h6M460 173.5h6M199 176.5h6M463 176.5h6M199 179.5h6M463 179.5h6M196 182.5h6M466 182.5h6M196 185.5h6M466 185.5h6M193 188.5h6M469 188.5h6M193 191.5h6M469 191.5h6M190 194.5h6M472 194.5h6M190 197.5h6M472 197.5h6M187 200.5h6M475 200.5h6M187 203.5h6M475 203.5h6M184 206.5h6M478 206.5h6M184 209.5h6M478 209.5h6M184 212.5h3M481 212.5h3M181 215.5h6M481 215.5h6M181 218.5h3M484 218.5h3M178 221.5h6M484 221.5h6M178 224.5h3M487 224.5h3M178 227.5h3M487 227.5h3M175 230.5h6M487 230.5h6M175 233.5h3M490 233.5h3M172 236.5h6M490 236.5h6M172 239.5h6M490 239.5h6M172 242.5h3M493 242.5h3M172 245.5h3M493 245.5h3M169 248.5h6M493 248.5h6M169 251.5h3M496 251.5h3M169 254.5h3M496 254.5h3M169 257.5h3M496 257.5h3M166 260.5h6M496 260.5h6M166 263.5h6M496 263.5h6M166 266.5h3M499 266.5h3M166 269.5h3M499 269.5h3M166 272.5h3M499 272.5h3M166 275.5h3M499 275.5h3M166 278.5h3M499 278.5h3M166 281.5h3M499 281.5h3M166 284.5h3M499 284.5h3M187 287.5h6M475 287.5h6M253 293.5h3M412 293.5h3M253 296.5h3M412 296.5h3M253 299.5h3M412 299.5h3M253 302.5h3M412 302.5h3M166 314.5h6M496 314.5h6M166 317.5h6M496 317.5h6M166 320.5h6M496 320.5h6M166 323.5h6M496 323.5h6M166 326.5h6M496 326.5h6M166 329.5h6M496 329.5h6M166 332.5h6M496 332.5h6M166 335.5h3M499 335.5h3M166 338.5h3M499 338.5h3M166 341.5h3M499 341.5h3M166 344.5h3M499 344.5h3M166 347.5h3M499 347.5h3M166 350.5h6M496 350.5h6M166 353.5h6M496 353.5h6M166 356.5h6M496 356.5h6M166 359.5h6M496 359.5h6M166 362.5h6M496 362.5h6M166 365.5h6M496 365.5h6M166 368.5h6M496 368.5h6M166 371.5h6M496 371.5h6M166 374.5h6M496 374.5h6M166 377.5h6M496 377.5h6M166 380.5h6M496 380.5h6M166 383.5h9M493 383.5h9M166 386.5h9M493 386.5h9M166 389.5h9M493 389.5h9M169 392.5h6M493 392.5h6M169 395.5h6M493 395.5h6M169 398.5h6M493 398.5h6M169 401.5h9M490 401.5h9M169 404.5h9M490 404.5h9M169 407.5h9M490 407.5h9M169 410.5h9M490 410.5h9M169 413.5h9M490 413.5h9M172 416.5h6M490 416.5h6M172 419.5h9M487 419.5h9M172 422.5h9M487 422.5h9M172 425.5h9M487 425.5h9M172 428.5h9M487 428.5h9M172 431.5h9M487 431.5h9M175 434.5h9M484 434.5h9M175 437.5h9M484 437.5h9M175 440.5h9M484 440.5h9M175 443.5h9M484 443.5h9M175 446.5h9M484 446.5h9M175 449.5h12M481 449.5h12M178 452.5h9M481 452.5h9M178 455.5h9M481 455.5h9M178 458.5h9M481 458.5h9M178 461.5h9M481 461.5h9M178 464.5h12M478 464.5h12"/>
<path stroke="#00000c" d="M229 131.5h9M430 131.5h9M229 134.5h9M430 134.5h9M226 137.5h9M433 137.5h9M226 140.5h9M433 140.5h9M223 143.5h9M436 143.5h9M223 146.5h6M439 146.5h6M220 149.5h9M439 149.5h9M220 152.5h6M442 152.5h6M217 155.5h9M442 155.5h9M217 158.5h6M445 158.5h6M214 161.5h6M448 161.5h6M214 164.5h6M448 164.5h6M211 167.5h6M451 167.5h6M211 170.5h6M451 170.5h6M208 173.5h6M454 173.5h6M205 176.5h6M457 176.5h6M205 179.5h6M457 179.5h6M202 182.5h6M460 182.5h6M202 185.5h6M460 185.5h6M199 188.5h6M463 188.5h6M199 191.5h3M466 191.5h3M196 194.5h6M466 194.5h6M196 197.5h3M469 197.5h3M193 200.5h6M469 200.5h6M193 203.5h3M472 203.5h3M190 206.5h6M472 206.5h6M190 209.5h3M475 209.5h3M187 212.5h6M475 212.5h6M187 215.5h3M478 215.5h3M184 218.5h6M478 218.5h6M184 221.5h3M481 221.5h3M181 224.5h6M481 224.5h6M181 227.5h3M484 227.5h3M181 230.5h3M484 230.5h3M178 233.5h6M484 233.5h6M178 236.5h3M487 236.5h3M178 239.5h3M487 239.5h3M175 242.5h6M487 242.5h6M175 245.5h3M490 245.5h3M175 248.5h3M490 248.5h3M172 251.5h6M490 251.5h6M172 254.5h6M490 254.5h6M172 257.5h3M493 257.5h3M172 260.5h3M493 260.5h3M172 263.5h3M493 263.5h3M169 266.5h6M493 266.5h6M169 269.5h6M493 269.5h6M169 272.5h3M496 272.5h3M169 275.5h3M496 275.5h3M169 278.5h3M496 278.5h3M169 281.5h3M496 281.5h3M169 284.5h3M496 284.5h3M193 287.5h3M472 287.5h3M172 314.5h6M490 314.5h6M172 317.5h6M490 317.5h6M172 320.5h6M490 320.5h6M172 323.5h3M493 323.5h3M172 326.5h3M493 326.5h3M172 329.5h3M493 329.5h3M172 332.5h3M493 332.5h3M169 335.5h6M493 335.5h6M169 338.5h6M493 338.5h6M169 341.5h6M493 341.5h6M169 344.5h6M493 344.5h6M169 347.5h6M493 347.5h6M172 350.5h3M493 350.5h3M172 353.5h6M490 353.5h6M172 356.5h6M490 356.5h6M172 359.5h6M490 359.5h6M172 362.5h6M490 362.5h6M172 365.5h6M490 365.5h6M172 368.5h6M490 368.5h6M172 371.5h6M490 371.5h6M172 374.5h6M490 374.5h6M172 377.5h6M490 377.5h6M172 380.5h9M487 380.5h9M175 383.5h6M487 383.5h6M175 386.5h6M487 386.5h6M175 389.5h6M487 389.5h6M175 392.5h6M487 392.5h6M175 395.5h9M484 395.5h9M175 398.5h9M484 398.5h9M178 401.5h6M484 401.5h6M178 404.5h6M484 404.5h6M178 407.5h6M484 407.5h6M178 410.5h9M481 410.5h9M178 413.5h9M481 413.5h9M178 416.5h9M481 416.5h9M181 419.5h6M481 419.5h6M181 422.5h9M478 422.5h9M181 425.5h9M478 425.5h9M181 428.5h9M478 428.5h9M181 431.5h9M478 431.5h9M184 434.5h6M478 434.5h6M184 437.5h9M475 437.5h9M184 440.5h9M475 440.5h9M184 443.5h9M475 443.5h9M184 446.5h9M475 446.5h9M187 449.5h9M472 449.5h9M187 452.5h9M472 452.5h9M187 455.5h9M472 455.5h9M187 458.5h9M472 458.5h9M187 461.5h9M472 461.5h9M190 464.5h9M469 464.5h9"/>
<path stroke="#00000d" d="M238 131.5h9M421 131.5h9M238 134.5h6M424 134.5h6M235 137.5h9M424 137.5h9M235 140.5h6M427 140.5h6M232 143.5h9M427 143.5h9M229 146.5h9M430 146.5h9M229 149.5h6M433 149.5h6M226 152.5h9M433 152.5h9M226 155.5h6M436 155.5h6M223 158.5h6M439 158.5h6M220 161.5h9M439 161.5h9M220 164.5h6M442 164.5h6M217 167.5h6M445 167.5h6M217 170.5h6M445 170.5h6M214 173.5h6M448 173.5h6M211 176.5h6M451 176.5h6M211 179.5h6M451 179.5h6M208 182.5h6M454 182.5h6M208 185.5h3M457 185.5h3M205 188.5h6M457 188.5h6M202 191.5h6M460 191.5h6M202 194.5h3M463 194.5h3M199 197.5h6M463 197.5h6M199 200.5h3M466 200.5h3M196 203.5h6M466 203.5h6M196 206.5h3M469 206.5h3M193 209.5h6M469 209.5h6M193 212.5h3M472 212.5h3M190 215.5h6M472 215.5h6M190 218.5h3M475 218.5h3M187 221.5h6M475 221.5h6M187 224.5h3M478 224.5h3M184 227.5h6M478 227.5h6M184 230.5h3M481 230.5h3M184 233.5h3M481 233.5h3M181 236.5h6M481 236.5h6M181 239.5h3M484 239.5h3M181 242.5h3M484 242.5h3M178 245.5h6M484 245.5h6M178 248.5h3M487 248.5h3M178 251.5h3M487 251.5h3M178 254.5h3M487 254.5h3M175 257.5h6M487 257.5h6M175 260.5h3M490 260.5h3M175 263.5h3M490 263.5h3M175 266.5h3M490 266.5h3M175 269.5h3M490 269.5h3M172 272.5h6M490 272.5h6M172 275.5h6M490 275.5h6M172 278.5h3M493 278.5h3M172 281.5h3M493 281.5h3M172 284.5h3M493 284.5h3M196 287.5h3M469 287.5h3M178 314.5h3M487 314.5h3M178 317.5h3M487 317.5h3M178 320.5h3M487 320.5h3M175 323.5h6M487 323.5h6M175 326.5h6M487 326.5h6M175 329.5h6M487 329.5h6M175 332.5h6M487 332.5h6M175 335.5h6M487 335.5h6M175 338.5h6M487 338.5h6M175 341.5h6M487 341.5h6M175 344.5h6M487 344.5h6M175 347.5h6M487 347.5h6M175 350.5h6M487 350.5h6M178 353.5h3M487 353.5h3M178 356.5h3M487 356.5h3M178 359.5h6M484 359.5h6M178 362.5h6M484 362.5h6M178 365.5h6M484 365.5h6M178 368.5h6M484 368.5h6M178 371.5h6M484 371.5h6M178 374.5h6M484 374.5h6M178 377.5h6M484 377.5h6M181 380.5h6M481 380.5h6M181 383.5h6M481 383.5h6M181 386.5h6M481 386.5h6M181 389.5h6M481 389.5h6M181 392.5h6M481 392.5h6M184 395.5h6M478 395.5h6M184 398.5h6M478 398.5h6M184 401.5h6M478 401.5h6M184 404.5h6M478 404.5h6M184 407.5h9M475 407.5h9M187 410.5h6M475 410.5h6M187 413.5h6M475 413.5h6M187 416.5h6M475 416.5h6M187 419.5h9M472 419.5h9M190 422.5h6M472 422.5h6M190 425.5h6M472 425.5h6M190 428.5h6M472 428.5h6M190 431.5h9M469 431.5h9M190 434.5h9M469 434.5h9M193 437.5h6M469 437.5h6M193 440.5h9M466 440.5h9M193 443.5h9M466 443.5h9M193 446.5h9M466 446.5h9M196 449.5h6M466 449.5h6M196 452.5h9M463 452.5h9M196 455.5h9M463 455.5h9M196 458.5h9M463 458.5h9M196 461.5h9M463 461.5h9M199 464.5h9M460 464.5h9"/>
<path stroke="#00000e" d="M247 131.5h9M412 131.5h9M244 134.5h9M415 134.5h9M244 137.5h9M415 137.5h9M241 140.5h9M418 140.5h9M241 143.5h6M421 143.5h6M238 146.5h9M421 146.5h9M235 149.5h9M424 149.5h9M235 152.5h6M427 152.5h6M232 155.5h6M430 155.5h6M229 158.5h9M430 158.5h9M229 161.5h6M433 161.5h6M226 164.5h6M436 164.5h6M223 167.5h6M439 167.5h6M223 170.5h6M439 170.5h6M220 173.5h6M442 173.5h6M217 176.5h6M445 176.5h6M217 179.5h3M448 179.5h3M214 182.5h6M448 182.5h6M211 185.5h6M451 185.5h6M211 188.5h3M454 188.5h3M208 191.5h6M454 191.5h6M205 194.5h6M457 194.5h6M205 197.5h3M460 197.5h3M202 200.5h6M460 200.5h6M202 203.5h3M463 203.5h3M199 206.5h3M466 206.5h3M199 209.5h3M466 209.5h3M196 212.5h3M469 212.5h3M196 215.5h3M469 215.5h3M193 218.5h3M472 218.5h3M193 221.5h3M472 221.5h3M190 224.5h3M475 224.5h3M190 227.5h3M475 227.5h3M187 230.5h6M475 230.5h6M187 233.5h3M478 233.5h3M187 236.5h3M478 236.5h3M184 239.5h3M481 239.5h3M184 242.5h3M481 242.5h3M184 245.5h3M481 245.5h3M181 248.5h3M484 248.5h3M181 251.5h3M484 251.5h3M181 254.5h3M484 254.5h3M181 257.5h3M484 257.5h3M178 260.5h3M487 260.5h3M178 263.5h3M487 263.5h3M178 266.5h3M487 266.5h3M178 269.5h3M487 269.5h3M178 272.5h3M487 272.5h3M178 275.5h3M487 275.5h3M175 278.5h6M487 278.5h6M175 281.5h3M490 281.5h3M175 284.5h3M490 284.5h3M199 287.5h6M463 287.5h6M181 314.5h6M481 314.5h6M181 317.5h6M481 317.5h6M181 320.5h6M481 320.5h6M181 323.5h6M481 323.5h6M181 326.5h3M484 326.5h3M181 329.5h3M484 329.5h3M181 332.5h3M484 332.5h3M181 335.5h3M484 335.5h3M181 338.5h3M484 338.5h3M181 341.5h6M481 341.5h6M181 344.5h6M481 344.5h6M181 347.5h6M481 347.5h6M181 350.5h6M481 350.5h6M181 353.5h6M481 353.5h6M181 356.5h6M481 356.5h6M184 359.5h3M481 359.5h3M184 362.5h3M481 362.5h3M184 365.5h3M481 365.5h3M184 368.5h6M478 368.5h6M184 371.5h6M478 371.5h6M184 374.5h6M478 374.5h6M184 377.5h6M478 377.5h6M187 380.5h3M478 380.5h3M187 383.5h6M475 383.5h6M187 386.5h6M475 386.5h6M187 389.5h6M475 389.5h6M187 392.5h6M475 392.5h6M190 395.5h6M472 395.5h6M190 398.5h6M472 398.5h6M190 401.5h6M472 401.5h6M190 404.5h6M472 404.5h6M193 407.5h6M469 407.5h6M193 410.5h6M469 410.5h6M193 413.5h6M469 413.5h6M193 416.5h9M466 416.5h9M196 419.5h6M466 419.5h6M196 422.5h6M466 422.5h6M196 425.5h9M463 425.5h9M196 428.5h9M463 428.5h9M199 431.5h6M463 431.5h6M199 434.5h6M463 434.5h6M199 437.5h9M460 437.5h9M202 440.5h6M460 440.5h6M202 443.5h6M460 443.5h6M202 446.5h9M457 446.5h9M202 449.5h9M457 449.5h9M205 452.5h6M457 452.5h6M205 455.5h9M454 455.5h9M205 458.5h9M454 458.5h9M205 461.5h9M454 461.5h9M208 464.5h6M454 464.5h6"/>
<path stroke="#00000f" d="M256 131.5h9M403 131.5h9M253 134.5h9M406 134.5h9M253 137.5h9M406 137.5h9M250 140.5h9M409 140.5h9M247 143.5h9M412 143.5h9M247 146.5h6M415 146.5h6M244 149.5h6M418 149.5h6M241 152.5h6M421 152.5h6M238 155.5h9M421 155.5h9M238 158.5h6M424 158.5h6M235 161.5h6M427 161.5h6M232 164.5h6M430 164.5h6M229 167.5h6M433 167.5h6M229 170.5h3M436 170.5h3M226 173.5h6M436 173.5h6M223 176.5h6M439 176.5h6M220 179.5h6M442 179.5h6M220 182.5h3M445 182.5h3M217 185.5h6M445 185.5h6M214 188.5h6M448 188.5h6M214 191.5h3M451 191.5h3M211 194.5h3M454 194.5h3M208 197.5h6M454 197.5h6M208 200.5h3M457 200.5h3M205 203.5h3M460 203.5h3M202 206.5h6M460 206.5h6M202 209.5h3M463 209.5h3M199 212.5h6M463 212.5h6M199 215.5h3M466 215.5h3M196 218.5h6M466 218.5h6M196 221.5h3M469 221.5h3M193 224.5h6M469 224.5h6M193 227.5h3M472 227.5h3M193 230.5h3M472 230.5h3M190 233.5h3M475 233.5h3M190 236.5h3M475 236.5h3M187 239.5h3M478 239.5h3M187 242.5h3M478 242.5h3M187 245.5h3M478 245.5h3M184 248.5h6M478 248.5h6M184 251.5h3M481 251.5h3M184 254.5h3M481 254.5h3M184 257.5h3M481 257.5h3M181 260.5h3M484 260.5h3M181 263.5h3M484 263.5h3M181 266.5h3M484 266.5h3M181 269.5h3M484 269.5h3M181 272.5h3M484 272.5h3M181 275.5h3M484 275.5h3M181 278.5h3M484 278.5h3M178 281.5h3M487 281.5h3M178 284.5h3M487 284.5h3M205 287.5h3M460 287.5h3M187 314.5h3M478 314.5h3M187 317.5h3M478 317.5h3M187 320.5h3M478 320.5h3M187 323.5h3M478 323.5h3M184 326.5h6M478 326.5h6M184 329.5h6M478 329.5h6M184 332.5h6M478 332.5h6M184 335.5h6M478 335.5h6M184 338.5h6M478 338.5h6M187 341.5h3M478 341.5h3M187 344.5h3M478 344.5h3M187 347.5h3M478 347.5h3M187 350.5h3M478 350.5h3M187 353.5h3M478 353.5h3M187 356.5h3M478 356.5h3M187 359.5h6M475 359.5h6M187 362.5h6M475 362.5h6M187 365.5h6M475 365.5h6M190 368.5h3M475 368.5h3M190 371.5h3M475 371.5h3M190 374.5h6M472 374.5h6M190 377.5h6M472 377.5h6M190 380.5h6M472 380.5h6M193 383.5h3M472 383.5h3M193 386.5h6M469 386.5h6M193 389.5h6M469 389.5h6M193 392.5h6M469 392.5h6M196 395.5h3M469 395.5h3M196 398.5h6M466 398.5h6M196 401.5h6M466 401.5h6M196 404.5h6M466 404.5h6M199 407.5h6M463 407.5h6M199 410.5h6M463 410.5h6M199 413.5h6M463 413.5h6M202 416.5h6M460 416.5h6M202 419.5h6M460 419.5h6M202 422.5h6M460 422.5h6M205 425.5h6M457 425.5h6M205 428.5h6M457 428.5h6M205 431.5h6M457 431.5h6M205 434.5h9M454 434.5h9M208 437.5h6M454 437.5h6M208 440.5h6M454 440.5h6M208 443.5h9M451 443.5h9M211 446.5h6M451 446.5h6M211 449.5h6M451 449.5h6M211 452.5h9M448 452.5h9M214 455.5h6M448 455.5h6M214 458.5h9M445 458.5h9M214 461.5h9M445 461.5h9M214 464.5h9M445 464.5h9"/>
<path stroke="#000010" d="M265 131.5h12M391 131.5h12M262 134.5h12M394 134.5h12M262 137.5h9M397 137.5h9M259 140.5h9M400 140.5h9M256 143.5h9M403 143.5h9M253 146.5h9M406 146.5h9M250 149.5h9M409 149.5h9M247 152.5h9M412 152.5h9M247 155.5h6M415 155.5h6M244 158.5h6M418 158.5h6M241 161.5h6M421 161.5h6M238 164.5h6M424 164.5h6M235 167.5h6M427 167.5h6M232 170.5h6M430 170.5h6M232 173.5h3M433 173.5h3M229 176.5h6M433 176.5h6M226 179.5h6M436 179.5h6M223 182.5h6M439 182.5h6M223 185.5h3M442 185.5h3M220 188.5h3M445 188.5h3M217 191.5h6M445 191.5h6M214 194.5h6M448 194.5h6M214 197.5h3M451 197.5h3M211 200.5h3M454 200.5h3M208 203.5h6M454 203.5h6M208 206.5h3M457 206.5h3M205 209.5h3M460 209.5h3M205 212.5h3M460 212.5h3M202 215.5h3M463 215.5h3M202 218.5h3M463 218.5h3M199 221.5h3M466 221.5h3M199 224.5h3M466 224.5h3M196 227.5h3M469 227.5h3M196 230.5h3M469 230.5h3M193 233.5h3M472 233.5h3M193 236.5h3M472 236.5h3M190 239.5h6M472 239.5h6M190 242.5h3M475 242.5h3M190 245.5h3M475 245.5h3M190 248.5h3M475 248.5h3M187 251.5h3M478 251.5h3M187 254.5h3M478 254.5h3M187 257.5h3M478 257.5h3M184 260.5h3M481 260.5h3M184 263.5h3M481 263.5h3M184 266.5h3M481 266.5h3M184 269.5h3M481 269.5h3M184 272.5h3M481 272.5h3M184 275.5h3M481 275.5h3M184 278.5h3M481 278.5h3M181 281.5h3M484 281.5h3M181 284.5h3M484 284.5h3M208 287.5h3M457 287.5h3M256 305.5h3M409 305.5h3M256 308.5h3M409 308.5h3M256 311.5h3M409 311.5h3M190 314.5h3M475 314.5h3M190 317.5h3M475 317.5h3M190 320.5h3M475 320.5h3M190 323.5h3M475 323.5h3M190 326.5h3M475 326.5h3M190 329.5h3M475 329.5h3M190 332.5h3M475 332.5h3M190 335.5h3M475 335.5h3M190 338.5h3M475 338.5h3M190 341.5h3M475 341.5h3M190 344.5h3M475 344.5h3M190 347.5h3M475 347.5h3M190 350.5h3M475 350.5h3M190 353.5h6M472 353.5h6M190 356.5h6M472 356.5h6M193 359.5h3M472 359.5h3M193 362.5h3M472 362.5h3M193 365.5h3M472 365.5h3M193 368.5h6M469 368.5h6M193 371.5h6M469 371.5h6M196 374.5h3M469 374.5h3M196 377.5h3M469 377.5h3M196 380.5h6M466 380.5h6M196 383.5h6M466 383.5h6M199 386.5h3M466 386.5h3M199 389.5h3M466 389.5h3M199 392.5h6M463 392.5h6M199 395.5h6M463 395.5h6M202 398.5h3M463 398.5h3M202 401.5h6M460 401.5h6M202 404.5h6M460 404.5h6M205 407.5h6M457 407.5h6M205 410.5h6M457 410.5h6M205 413.5h6M457 413.5h6M208 416.5h6M454 416.5h6M208 419.5h6M454 419.5h6M208 422.5h6M454 422.5h6M211 425.5h6M451 425.5h6M211 428.5h6M451 428.5h6M211 431.5h9M448 431.5h9M214 434.5h6M448 434.5h6M214 437.5h6M448 437.5h6M214 440.5h9M445 440.5h9M217 443.5h6M445 443.5h6M217 446.5h9M442 446.5h9M217 449.5h9M442 449.5h9M220 452.5h6M442 452.5h6M220 455.5h9M439 455.5h9M223 458.5h6M439 458.5h6M223 461.5h9M436 461.5h9M223 464.5h9M436 464.5h9"/>
<path stroke="#000011" d="M277 131.5h12M379 131.5h12M274 134.5h12M382 134.5h12M271 137.5h12M385 137.5h12M268 140.5h9M391 140.5h9M265 143.5h9M394 143.5h9M262 146.5h9M397 146.5h9M259 149.5h9M400 149.5h9M256 152.5h9M403 152.5h9M253 155.5h9M406 155.5h9M250 158.5h6M412 158.5h6M247 161.5h6M415 161.5h6M244 164.5h6M418 164.5h6M241 167.5h6M421 167.5h6M238 170.5h6M424 170.5h6M235 173.5h6M427 173.5h6M235 176.5h3M430 176.5h3M232 179.5h3M433 179.5h3M229 182.5h6M433 182.5h6M226 185.5h6M436 185.5h6M223 188.5h6M439 188.5h6M223 191.5h3M442 191.5h3M220 194.5h3M445 194.5h3M217 197.5h3M448 197.5h3M214 200.5h6M448 200.5h6M214 203.5h3M451 203.5h3M211 206.5h3M454 206.5h3M208 209.5h6M454 209.5h6M208 212.5h3M457 212.5h3M205 215.5h3M460 215.5h3M205 218.5h3M460 218.5h3M202 221.5h3M463 221.5h3M202 224.5h3M463 224.5h3M199 227.5h3M466 227.5h3M199 230.5h3M466 230.5h3M196 233.5h3M469 233.5h3M196 236.5h3M469 236.5h3M196 239.5h3M469 239.5h3M193 242.5h3M472 242.5h3M193 245.5h3M472 245.5h3M193 248.5h3M472 248.5h3M190 251.5h3M475 251.5h3M190 254.5h3M475 254.5h3M190 257.5h3M475 257.5h3M187 260.5h3M478 260.5h3M187 263.5h3M478 263.5h3M187 266.5h3M478 266.5h3M187 269.5h3M478 269.5h3M187 272.5h3M478 272.5h3M187 275.5h3M478 275.5h3M184 281.5h3M481 281.5h3M184 284.5h3M481 284.5h3M211 287.5h3M454 287.5h3M256 296.5h3M409 296.5h3M256 299.5h3M409 299.5h3M256 302.5h3M409 302.5h3M193 314.5h3M472 314.5h3M193 317.5h3M472 317.5h3M193 320.5h3M472 320.5h3M193 323.5h3M472 323.5h3M193 326.5h3M472 326.5h3M193 329.5h3M472 329.5h3M193 332.5h3M472 332.5h3M193 335.5h3M472 335.5h3M193 338.5h3M472 338.5h3M193 341.5h3M472 341.5h3M193 344.5h3M472 344.5h3M193 347.5h3M472 347.5h3M193 350.5h6M469 350.5h6M196 353.5h3M469 353.5h3M196 356.5h3M469 356.5h3M196 359.5h3M469 359.5h3M196 362.5h3M469 362.5h3M196 365.5h6M466 365.5h6M199 368.5h3M466 368.5h3M199 371.5h3M466 371.5h3M199 374.5h3M466 374.5h3M199 377.5h6M463 377.5h6M202 380.5h3M463 380.5h3M202 383.5h3M463 383.5h3M202 386.5h6M460 386.5h6M202 389.5h6M460 389.5h6M205 392.5h3M460 392.5h3M205 395.5h6M457 395.5h6M205 398.5h6M457 398.5h6M208 401.5h3M457 401.5h3M208 404.5h6M454 404.5h6M211 407.5h3M454 407.5h3M211 410.5h6M451 410.5h6M211 413.5h6M451 413.5h6M214 416.5h3M451 416.5h3M214 419.5h6M448 419.5h6M214 422.5h6M448 422.5h6M217 425.5h6M445 425.5h6M217 428.5h6M445 428.5h6M220 431.5h6M442 431.5h6M220 434.5h6M442 434.5h6M220 437.5h9M439 437.5h9M223 440.5h6M439 440.5h6M223 443.5h6M439 443.5h6M226 446.5h6M436 446.5h6M226 449.5h6M436 449.5h6M226 452.5h9M433 452.5h9M229 455.5h6M433 455.5h6M229 458.5h9M430 458.5h9M232 461.5h6M430 461.5h6M232 464.5h9M427 464.5h9"/>
<path stroke="#000012" d="M289 131.5h18M361 131.5h18M286 134.5h15M367 134.5h15M283 137.5h12M373 137.5h12M277 140.5h15M376 140.5h15M274 143.5h12M382 143.5h12M271 146.5h12M385 146.5h12M268 149.5h9M391 149.5h9M265 152.5h9M394 152.5h9M262 155.5h6M400 155.5h6M256 158.5h9M403 158.5h9M253 161.5h9M406 161.5h9M250 164.5h9M409 164.5h9M247 167.5h6M415 167.5h6M244 170.5h6M418 170.5h6M241 173.5h6M421 173.5h6M238 176.5h6M424 176.5h6M235 179.5h6M427 179.5h6M235 182.5h3M430 182.5h3M232 185.5h3M433 185.5h3M229 188.5h3M436 188.5h3M226 191.5h3M439 191.5h3M223 194.5h6M439 194.5h6M220 197.5h6M442 197.5h6M220 200.5h3M445 200.5h3M217 203.5h3M448 203.5h3M214 206.5h6M448 206.5h6M214 209.5h3M451 209.5h3M211 212.5h3M454 212.5h3M208 215.5h6M454 215.5h6M208 218.5h3M457 218.5h3M205 221.5h3M460 221.5h3M205 224.5h3M460 224.5h3M202 227.5h3M463 227.5h3M202 230.5h3M463 230.5h3M199 233.5h3M466 233.5h3M199 236.5h3M466 236.5h3M199 239.5h3M466 239.5h3M196 242.5h3M469 242.5h3M196 245.5h3M469 245.5h3M193 251.5h3M472 251.5h3M193 254.5h3M472 254.5h3M193 257.5h3M472 257.5h3M190 260.5h3M475 260.5h3M190 263.5h3M475 263.5h3M190 266.5h3M475 266.5h3M190 269.5h3M475 269.5h3M190 272.5h3M475 272.5h3M187 278.5h3M478 278.5h3M187 281.5h3M478 281.5h3M187 284.5h3M478 284.5h3M214 287.5h3M451 287.5h3M256 293.5h3M409 293.5h3M196 314.5h3M469 314.5h3M196 317.5h3M469 317.5h3M196 320.5h3M469 320.5h3M196 323.5h3M469 323.5h3M196 326.5h3M469 326.5h3M196 329.5h3M469 329.5h3M196 332.5h3M469 332.5h3M196 335.5h3M469 335.5h3M196 338.5h3M469 338.5h3M196 341.5h3M469 341.5h3M196 344.5h3M469 344.5h3M196 347.5h6M466 347.5h6M199 350.5h3M466 350.5h3M199 353.5h3M466 353.5h3M199 356.5h3M466 356.5h3M199 359.5h3M466 359.5h3M199 362.5h6M463 362.5h6M202 365.5h3M463 365.5h3M202 368.5h3M463 368.5h3M202 371.5h3M463 371.5h3M202 374.5h6M460 374.5h6M205 377.5h3M460 377.5h3M205 380.5h3M460 380.5h3M205 383.5h6M457 383.5h6M208 386.5h3M457 386.5h3M208 389.5h3M457 389.5h3M208 392.5h6M454 392.5h6M211 395.5h3M454 395.5h3M211 398.5h6M451 398.5h6M211 401.5h6M451 401.5h6M214 404.5h3M451 404.5h3M214 407.5h6M448 407.5h6M217 410.5h3M448 410.5h3M217 413.5h6M445 413.5h6M217 416.5h6M445 416.5h6M220 419.5h6M442 419.5h6M220 422.5h6M442 422.5h6M223 425.5h6M439 425.5h6M223 428.5h6M439 428.5h6M226 431.5h6M436 431.5h6M226 434.5h6M436 434.5h6M229 437.5h6M433 437.5h6M229 440.5h6M433 440.5h6M229 443.5h9M430 443.5h9M232 446.5h6M430 446.5h6M232 449.5h9M427 449.5h9M235 452.5h6M427 452.5h6M235 455.5h9M424 455.5h9M238 458.5h6M424 458.5h6M238 461.5h9M421 461.5h9M241 464.5h6M421 464.5h6"/>
<path stroke="#000013" d="M307 131.5h54M301 134.5h66M295 137.5h24M349 137.5h24M292 140.5h18M358 140.5h18M286 143.5h15M367 143.5h15M283 146.5h12M373 146.5h12M277 149.5h12M379 149.5h12M274 152.5h9M385 152.5h9M268 155.5h9M391 155.5h9M265 158.5h9M394 158.5h9M262 161.5h6M400 161.5h6M259 164.5h6M403 164.5h6M253 167.5h9M406 167.5h9M250 170.5h6M412 170.5h6M247 173.5h6M415 173.5h6M244 176.5h6M418 176.5h6M241 179.5h6M421 179.5h6M238 182.5h6M424 182.5h6M235 185.5h6M427 185.5h6M232 188.5h6M430 188.5h6M229 191.5h6M433 191.5h6M229 194.5h3M436 194.5h3M226 197.5h3M439 197.5h3M223 200.5h3M442 200.5h3M220 203.5h3M445 203.5h3M220 206.5h3M445 206.5h3M217 209.5h3M448 209.5h3M214 212.5h3M451 212.5h3M214 215.5h3M451 215.5h3M211 218.5h3M454 218.5h3M208 221.5h3M457 221.5h3M208 224.5h3M457 224.5h3M205 227.5h3M460 227.5h3M205 230.5h3M460 230.5h3M202 233.5h3M463 233.5h3M202 236.5h3M463 236.5h3M199 242.5h3M466 242.5h3M199 245.5h3M466 245.5h3M196 248.5h3M469 248.5h3M196 251.5h3M469 251.5h3M196 254.5h3M469 254.5h3M193 260.5h3M472 260.5h3M193 263.5h3M472 263.5h3M193 266.5h3M472 266.5h3M193 269.5h3M472 269.5h3M190 275.5h3M475 275.5h3M190 278.5h3M475 278.5h3M190 281.5h3M475 281.5h3M190 284.5h3M475 284.5h3M199 314.5h3M466 314.5h3M199 317.5h3M466 317.5h3M199 320.5h3M466 320.5h3M199 323.5h3M466 323.5h3M199 326.5h3M466 326.5h3M199 329.5h3M466 329.5h3M199 332.5h3M466 332.5h3M199 335.5h3M466 335.5h3M199 338.5h3M466 338.5h3M199 341.5h3M466 341.5h3M199 344.5h3M466 344.5h3M202 347.5h3M463 347.5h3M202 350.5h3M463 350.5h3M202 353.5h3M463 353.5h3M202 356.5h3M463 356.5h3M202 359.5h3M463 359.5h3M205 362.5h3M460 362.5h3M205 365.5h3M460 365.5h3M205 368.5h3M460 368.5h3M205 371.5h3M460 371.5h3M208 374.5h3M457 374.5h3M208 377.5h3M457 377.5h3M208 380.5h3M457 380.5h3M211 383.5h3M454 383.5h3M211 386.5h3M454 386.5h3M211 389.5h6M451 389.5h6M214 392.5h3M451 392.5h3M214 395.5h6M448 395.5h6M217 398.5h3M448 398.5h3M217 401.5h3M448 401.5h3M217 404.5h6M445 404.5h6M220 407.5h3M445 407.5h3M220 410.5h6M442 410.5h6M223 413.5h3M442 413.5h3M223 416.5h6M439 416.5h6M226 419.5h3M439 419.5h3M226 422.5h6M436 422.5h6M229 425.5h6M433 425.5h6M229 428.5h6M433 428.5h6M232 431.5h6M430 431.5h6M232 434.5h6M430 434.5h6M235 437.5h6M427 437.5h6M235 440.5h6M427 440.5h6M238 443.5h6M424 443.5h6M238 446.5h6M424 446.5h6M241 449.5h6M421 449.5h6M241 452.5h9M418 452.5h9M244 455.5h6M418 455.5h6M244 458.5h9M415 458.5h9M247 461.5h6M415 461.5h6M247 464.5h9M412 464.5h9"/>
<path stroke="#000014" d="M319 137.5h30M310 140.5h48M301 143.5h66M295 146.5h18M355 146.5h18M289 149.5h15M364 149.5h15M283 152.5h12M373 152.5h12M277 155.5h12M379 155.5h12M274 158.5h9M385 158.5h9M268 161.5h9M391 161.5h9M265 164.5h9M394 164.5h9M262 167.5h6M400 167.5h6M256 170.5h9M403 170.5h9M253 173.5h6M409 173.5h6M250 176.5h6M412 176.5h6M247 179.5h6M415 179.5h6M244 182.5h3M421 182.5h3M241 185.5h3M424 185.5h3M238 188.5h3M427 188.5h3M235 191.5h3M430 191.5h3M232 194.5h3M433 194.5h3M229 197.5h3M436 197.5h3M226 200.5h3M439 200.5h3M223 203.5h6M439 203.5h6M223 206.5h3M442 206.5h3M220 209.5h3M445 209.5h3M217 212.5h3M448 212.5h3M217 215.5h3M448 215.5h3M214 218.5h3M451 218.5h3M211 221.5h3M454 221.5h3M211 224.5h3M454 224.5h3M208 227.5h3M457 227.5h3M208 230.5h3M457 230.5h3M205 233.5h3M460 233.5h3M205 236.5h3M460 236.5h3M202 239.5h3M463 239.5h3M202 242.5h3M463 242.5h3M202 245.5h3M463 245.5h3M199 248.5h3M466 248.5h3M199 251.5h3M466 251.5h3M199 254.5h3M466 254.5h3M196 257.5h3M469 257.5h3M196 260.5h3M469 260.5h3M196 263.5h3M469 263.5h3M196 266.5h3M469 266.5h3M193 272.5h3M472 272.5h3M193 275.5h3M472 275.5h3M193 278.5h3M472 278.5h3M193 281.5h3M472 281.5h3M193 284.5h3M472 284.5h3M217 287.5h3M448 287.5h3M202 314.5h3M463 314.5h3M202 317.5h3M463 317.5h3M202 320.5h3M463 320.5h3M202 323.5h3M463 323.5h3M202 326.5h3M463 326.5h3M202 329.5h3M463 329.5h3M202 332.5h3M463 332.5h3M202 335.5h3M463 335.5h3M202 338.5h3M463 338.5h3M202 341.5h3M463 341.5h3M202 344.5h3M463 344.5h3M205 350.5h3M460 350.5h3M205 353.5h3M460 353.5h3M205 356.5h3M460 356.5h3M205 359.5h3M460 359.5h3M208 362.5h3M457 362.5h3M208 365.5h3M457 365.5h3M208 368.5h3M457 368.5h3M208 371.5h6M454 371.5h6M211 374.5h3M454 374.5h3M211 377.5h3M454 377.5h3M211 380.5h6M451 380.5h6M214 383.5h3M451 383.5h3M214 386.5h3M451 386.5h3M217 389.5h3M448 389.5h3M217 392.5h3M448 392.5h3M220 395.5h3M445 395.5h3M220 398.5h3M445 398.5h3M220 401.5h6M442 401.5h6M223 404.5h3M442 404.5h3M223 407.5h6M439 407.5h6M226 410.5h3M439 410.5h3M226 413.5h6M436 413.5h6M229 416.5h6M433 416.5h6M229 419.5h6M433 419.5h6M232 422.5h6M430 422.5h6M235 425.5h3M430 425.5h3M235 428.5h6M427 428.5h6M238 431.5h6M424 431.5h6M238 434.5h6M424 434.5h6M241 437.5h6M421 437.5h6M241 440.5h6M421 440.5h6M244 443.5h6M418 443.5h6M244 446.5h9M415 446.5h9M247 449.5h6M415 449.5h6M250 452.5h6M412 452.5h6M250 455.5h9M409 455.5h9M253 458.5h6M409 458.5h6M253 461.5h9M406 461.5h9M256 464.5h9M403 464.5h9"/>
<path stroke="#000015" d="M313 146.5h42M304 149.5h60M295 152.5h21M352 152.5h21M289 155.5h15M364 155.5h15M283 158.5h12M373 158.5h12M277 161.5h12M379 161.5h12M274 164.5h6M388 164.5h6M268 167.5h9M391 167.5h9M265 170.5h6M397 170.5h6M259 173.5h6M403 173.5h6M256 176.5h6M406 176.5h6M253 179.5h3M412 179.5h3M247 182.5h6M415 182.5h6M244 185.5h6M418 185.5h6M241 188.5h6M421 188.5h6M238 191.5h6M424 191.5h6M235 194.5h6M427 194.5h6M232 197.5h6M430 197.5h6M229 200.5h6M433 200.5h6M229 203.5h3M436 203.5h3M226 206.5h3M439 206.5h3M223 209.5h3M442 209.5h3M220 212.5h3M445 212.5h3M220 215.5h3M445 215.5h3M217 218.5h3M448 218.5h3M214 221.5h3M451 221.5h3M214 224.5h3M451 224.5h3M211 227.5h3M454 227.5h3M211 230.5h3M454 230.5h3M208 233.5h3M457 233.5h3M208 236.5h3M457 236.5h3M205 239.5h3M460 239.5h3M205 242.5h3M460 242.5h3M202 248.5h3M463 248.5h3M202 251.5h3M463 251.5h3M199 257.5h3M466 257.5h3M199 260.5h3M466 260.5h3M199 263.5h3M466 263.5h3M196 269.5h3M469 269.5h3M196 272.5h3M469 272.5h3M196 275.5h3M469 275.5h3M196 278.5h3M469 278.5h3M196 281.5h3M469 281.5h3M196 284.5h3M469 284.5h3M220 287.5h3M445 287.5h3M205 314.5h3M460 314.5h3M205 317.5h3M460 317.5h3M205 320.5h3M460 320.5h3M205 323.5h3M460 323.5h3M205 326.5h3M460 326.5h3M205 329.5h3M460 329.5h3M205 332.5h3M460 332.5h3M205 335.5h3M460 335.5h3M205 338.5h3M460 338.5h3M205 341.5h3M460 341.5h3M205 344.5h3M460 344.5h3M205 347.5h3M460 347.5h3M208 350.5h3M457 350.5h3M208 353.5h3M457 353.5h3M208 356.5h3M457 356.5h3M208 359.5h3M457 359.5h3M211 362.5h3M454 362.5h3M211 365.5h3M454 365.5h3M211 368.5h3M454 368.5h3M214 371.5h3M451 371.5h3M214 374.5h3M451 374.5h3M214 377.5h3M451 377.5h3M217 380.5h3M448 380.5h3M217 383.5h3M448 383.5h3M217 386.5h6M445 386.5h6M220 389.5h3M445 389.5h3M220 392.5h6M442 392.5h6M223 395.5h3M442 395.5h3M223 398.5h6M439 398.5h6M226 401.5h3M439 401.5h3M226 404.5h6M436 404.5h6M229 407.5h3M436 407.5h3M229 410.5h6M433 410.5h6M232 413.5h6M430 413.5h6M235 416.5h3M430 416.5h3M235 419.5h6M427 419.5h6M238 422.5h3M427 422.5h3M238 425.5h6M424 425.5h6M241 428.5h6M421 428.5h6M244 431.5h6M418 431.5h6M244 434.5h6M418 434.5h6M247 437.5h6M415 437.5h6M247 440.5h9M412 440.5h9M250 443.5h6M412 443.5h6M253 446.5h6M409 446.5h6M253 449.5h9M406 449.5h9M256 452.5h9M403 452.5h9M259 455.5h6M403 455.5h6M259 458.5h9M400 458.5h9M262 461.5h9M397 461.5h9M265 464.5h9M394 464.5h9"/>
<path stroke="#000016" d="M316 152.5h36M304 155.5h60M295 158.5h18M355 158.5h18M289 161.5h12M367 161.5h12M280 164.5h12M376 164.5h12M277 167.5h6M385 167.5h6M271 170.5h6M391 170.5h6M265 173.5h6M397 173.5h6M262 176.5h6M400 176.5h6M256 179.5h6M406 179.5h6M253 182.5h6M409 182.5h6M250 185.5h3M415 185.5h3M247 188.5h3M418 188.5h3M244 191.5h3M421 191.5h3M241 194.5h3M424 194.5h3M238 197.5h3M427 197.5h3M235 200.5h3M430 200.5h3M232 203.5h3M433 203.5h3M229 206.5h3M436 206.5h3M226 209.5h3M439 209.5h3M223 212.5h3M442 212.5h3M223 215.5h3M442 215.5h3M220 218.5h3M445 218.5h3M217 221.5h3M448 221.5h3M217 224.5h3M448 224.5h3M214 227.5h3M451 227.5h3M214 230.5h3M451 230.5h3M211 233.5h3M454 233.5h3M211 236.5h3M454 236.5h3M208 239.5h3M457 239.5h3M208 242.5h3M457 242.5h3M205 245.5h3M460 245.5h3M205 248.5h3M460 248.5h3M205 251.5h3M460 251.5h3M202 254.5h3M463 254.5h3M202 257.5h3M463 257.5h3M202 260.5h3M463 260.5h3M199 266.5h3M466 266.5h3M199 269.5h3M466 269.5h3M199 272.5h3M466 272.5h3M199 275.5h3M466 275.5h3M199 278.5h3M466 278.5h3M223 287.5h3M442 287.5h3M208 335.5h3M457 335.5h3M208 338.5h3M457 338.5h3M208 341.5h3M457 341.5h3M208 344.5h3M457 344.5h3M208 347.5h3M457 347.5h3M211 353.5h3M454 353.5h3M211 356.5h3M454 356.5h3M211 359.5h3M454 359.5h3M214 365.5h3M451 365.5h3M214 368.5h3M451 368.5h3M217 374.5h3M448 374.5h3M217 377.5h3M448 377.5h3M220 380.5h3M445 380.5h3M220 383.5h3M445 383.5h3M223 386.5h3M442 386.5h3M223 389.5h3M442 389.5h3M226 392.5h3M439 392.5h3M226 395.5h3M439 395.5h3M229 398.5h3M436 398.5h3M229 401.5h3M436 401.5h3M232 404.5h3M433 404.5h3M232 407.5h6M430 407.5h6M235 410.5h3M430 410.5h3M238 413.5h3M427 413.5h3M238 416.5h6M424 416.5h6M241 419.5h3M424 419.5h3M241 422.5h6M421 422.5h6M244 425.5h6M418 425.5h6M247 428.5h6M415 428.5h6M250 431.5h3M415 431.5h3M250 434.5h6M412 434.5h6M253 437.5h6M409 437.5h6M256 440.5h6M406 440.5h6M256 443.5h9M403 443.5h9M259 446.5h9M400 446.5h9M262 449.5h6M400 449.5h6M265 452.5h6M397 452.5h6M265 455.5h9M394 455.5h9M268 458.5h9M391 458.5h9M271 461.5h9M388 461.5h9M274 464.5h9M385 464.5h9"/>
<path stroke="#000017" d="M313 158.5h42M301 161.5h21M346 161.5h21M292 164.5h12M364 164.5h12M283 167.5h12M373 167.5h12M277 170.5h9M382 170.5h9M271 173.5h9M388 173.5h9M268 176.5h6M394 176.5h6M262 179.5h6M400 179.5h6M259 182.5h6M403 182.5h6M253 185.5h6M409 185.5h6M250 188.5h6M412 188.5h6M247 191.5h3M418 191.5h3M244 194.5h3M421 194.5h3M241 197.5h3M424 197.5h3M238 200.5h3M427 200.5h3M235 203.5h3M430 203.5h3M232 206.5h3M433 206.5h3M229 209.5h3M436 209.5h3M226 212.5h3M439 212.5h3M226 215.5h3M439 215.5h3M223 218.5h3M442 218.5h3M220 221.5h3M445 221.5h3M220 224.5h3M445 224.5h3M217 227.5h3M448 227.5h3M214 233.5h3M451 233.5h3M211 239.5h3M454 239.5h3M208 245.5h3M457 245.5h3M208 248.5h3M457 248.5h3M205 254.5h3M460 254.5h3M205 257.5h3M460 257.5h3M202 263.5h3M463 263.5h3M202 266.5h3M463 266.5h3M202 269.5h3M463 269.5h3M202 272.5h3M463 272.5h3M199 281.5h3M466 281.5h3M199 284.5h3M466 284.5h3M226 287.5h3M439 287.5h3M208 314.5h3M457 314.5h3M208 317.5h3M457 317.5h3M208 320.5h3M457 320.5h3M208 323.5h3M457 323.5h3M208 326.5h3M457 326.5h3M208 329.5h3M457 329.5h3M208 332.5h3M457 332.5h3M211 341.5h3M454 341.5h3M211 344.5h3M454 344.5h3M211 347.5h3M454 347.5h3M211 350.5h3M454 350.5h3M214 356.5h3M451 356.5h3M214 359.5h3M451 359.5h3M214 362.5h3M451 362.5h3M217 365.5h3M448 365.5h3M217 368.5h3M448 368.5h3M217 371.5h3M448 371.5h3M220 374.5h3M445 374.5h3M220 377.5h3M445 377.5h3M223 380.5h3M442 380.5h3M223 383.5h3M442 383.5h3M226 386.5h3M439 386.5h3M226 389.5h3M439 389.5h3M229 392.5h3M436 392.5h3M229 395.5h3M436 395.5h3M232 398.5h3M433 398.5h3M232 401.5h6M430 401.5h6M235 404.5h3M430 404.5h3M238 407.5h3M427 407.5h3M238 410.5h6M424 410.5h6M241 413.5h3M424 413.5h3M244 416.5h3M421 416.5h3M244 419.5h6M418 419.5h6M247 422.5h6M415 422.5h6M250 425.5h6M412 425.5h6M253 428.5h3M412 428.5h3M253 431.5h6M409 431.5h6M256 434.5h6M406 434.5h6M259 437.5h6M403 437.5h6M262 440.5h6M400 440.5h6M265 443.5h6M397 443.5h6M268 446.5h6M394 446.5h6M268 449.5h9M391 449.5h9M271 452.5h9M388 452.5h9M274 455.5h9M385 455.5h9M277 458.5h9M382 458.5h9M280 461.5h12M376 461.5h12M283 464.5h12M373 464.5h12"/>
<path stroke="#000018" d="M322 161.5h24M304 164.5h60M295 167.5h12M361 167.5h12M286 170.5h12M370 170.5h12M280 173.5h9M379 173.5h9M274 176.5h6M388 176.5h6M268 179.5h6M394 179.5h6M265 182.5h3M400 182.5h3M259 185.5h6M403 185.5h6M256 188.5h3M409 188.5h3M250 191.5h6M412 191.5h6M247 194.5h6M415 194.5h6M244 197.5h3M421 197.5h3M241 200.5h3M424 200.5h3M238 203.5h3M427 203.5h3M235 206.5h3M430 206.5h3M232 209.5h3M433 209.5h3M229 212.5h3M436 212.5h3M229 215.5h3M436 215.5h3M226 218.5h3M439 218.5h3M223 221.5h3M442 221.5h3M220 227.5h3M445 227.5h3M217 230.5h3M448 230.5h3M217 233.5h3M448 233.5h3M214 236.5h3M451 236.5h3M214 239.5h3M451 239.5h3M211 242.5h3M454 242.5h3M211 245.5h3M454 245.5h3M208 251.5h3M457 251.5h3M208 254.5h3M457 254.5h3M205 260.5h3M460 260.5h3M205 263.5h3M460 263.5h3M205 266.5h3M460 266.5h3M202 275.5h3M463 275.5h3M202 278.5h3M463 278.5h3M202 281.5h3M463 281.5h3M202 284.5h3M463 284.5h3M259 308.5h3M406 308.5h3M259 311.5h3M406 311.5h3M211 314.5h3M454 314.5h3M211 317.5h3M454 317.5h3M211 320.5h3M454 320.5h3M211 323.5h3M454 323.5h3M211 326.5h3M454 326.5h3M211 329.5h3M454 329.5h3M211 332.5h3M454 332.5h3M211 335.5h3M454 335.5h3M211 338.5h3M454 338.5h3M214 347.5h3M451 347.5h3M214 350.5h3M451 350.5h3M214 353.5h3M451 353.5h3M217 359.5h3M448 359.5h3M217 362.5h3M448 362.5h3M220 368.5h3M445 368.5h3M220 371.5h3M445 371.5h3M223 374.5h3M442 374.5h3M223 377.5h3M442 377.5h3M226 380.5h3M439 380.5h3M226 383.5h3M439 383.5h3M229 386.5h3M436 386.5h3M229 389.5h3M436 389.5h3M232 392.5h3M433 392.5h3M232 395.5h6M430 395.5h6M235 398.5h3M430 398.5h3M238 401.5h3M427 401.5h3M238 404.5h6M424 404.5h6M241 407.5h3M424 407.5h3M244 410.5h3M421 410.5h3M244 413.5h6M418 413.5h6M247 416.5h6M415 416.5h6M250 419.5h6M412 419.5h6M253 422.5h3M412 422.5h3M256 425.5h3M409 425.5h3M256 428.5h6M406 428.5h6M259 431.5h6M403 431.5h6M262 434.5h6M400 434.5h6M265 437.5h6M397 437.5h6M268 440.5h6M394 440.5h6M271 443.5h9M388 443.5h9M274 446.5h9M385 446.5h9M277 449.5h9M382 449.5h9M280 452.5h9M379 452.5h9M283 455.5h12M373 455.5h12M286 458.5h12M370 458.5h12M292 461.5h12M364 461.5h12M295 464.5h15M358 464.5h15"/>
<path stroke="#000019" d="M307 167.5h54M298 170.5h12M358 170.5h12M289 173.5h9M370 173.5h9M280 176.5h9M379 176.5h9M274 179.5h6M388 179.5h6M268 182.5h6M394 182.5h6M265 185.5h3M400 185.5h3M259 188.5h6M403 188.5h6M256 191.5h3M409 191.5h3M253 194.5h3M412 194.5h3M247 197.5h6M415 197.5h6M244 200.5h3M421 200.5h3M241 203.5h3M424 203.5h3M238 206.5h3M427 206.5h3M235 209.5h3M430 209.5h3M232 212.5h3M433 212.5h3M232 215.5h3M433 215.5h3M229 218.5h3M436 218.5h3M226 221.5h3M439 221.5h3M223 224.5h3M442 224.5h3M223 227.5h3M442 227.5h3M220 230.5h3M445 230.5h3M217 236.5h3M448 236.5h3M214 242.5h3M451 242.5h3M214 245.5h3M451 245.5h3M211 248.5h3M454 248.5h3M211 251.5h3M454 251.5h3M208 257.5h3M457 257.5h3M208 260.5h3M457 260.5h3M208 263.5h3M457 263.5h3M205 269.5h3M460 269.5h3M205 272.5h3M460 272.5h3M205 275.5h3M460 275.5h3M205 278.5h3M460 278.5h3M205 281.5h3M460 281.5h3M229 287.5h3M436 287.5h3M259 305.5h3M406 305.5h3M214 335.5h3M451 335.5h3M214 338.5h3M451 338.5h3M214 341.5h3M451 341.5h3M214 344.5h3M451 344.5h3M217 350.5h3M448 350.5h3M217 353.5h3M448 353.5h3M217 356.5h3M448 356.5h3M220 359.5h3M445 359.5h3M220 362.5h3M445 362.5h3M220 365.5h3M445 365.5h3M223 368.5h3M442 368.5h3M223 371.5h3M442 371.5h3M226 374.5h3M439 374.5h3M226 377.5h3M439 377.5h3M229 380.5h3M436 380.5h3M229 383.5h3M436 383.5h3M232 386.5h3M433 386.5h3M232 389.5h3M433 389.5h3M235 392.5h3M430 392.5h3M238 395.5h3M427 395.5h3M238 398.5h3M427 398.5h3M241 401.5h3M424 401.5h3M244 404.5h3M421 404.5h3M244 407.5h6M418 407.5h6M247 410.5h3M418 410.5h3M250 413.5h3M415 413.5h3M253 416.5h3M412 416.5h3M256 419.5h3M409 419.5h3M256 422.5h6M406 422.5h6M259 425.5h6M403 425.5h6M262 428.5h6M400 428.5h6M265 431.5h6M397 431.5h6M268 434.5h6M394 434.5h6M271 437.5h9M388 437.5h9M274 440.5h9M385 440.5h9M280 443.5h6M382 443.5h6M283 446.5h9M376 446.5h9M286 449.5h9M373 449.5h9M289 452.5h12M367 452.5h12M295 455.5h12M361 455.5h12M298 458.5h18M352 458.5h18M304 461.5h60M310 464.5h48"/>
<path stroke="#00001a" d="M310 170.5h48M298 173.5h12M358 173.5h12M289 176.5h9M370 176.5h9M280 179.5h9M379 179.5h9M274 182.5h6M388 182.5h6M268 185.5h6M394 185.5h6M265 188.5h3M400 188.5h3M259 191.5h6M403 191.5h6M256 194.5h3M409 194.5h3M253 197.5h3M412 197.5h3M247 200.5h6M415 200.5h6M244 203.5h3M421 203.5h3M241 206.5h3M424 206.5h3M238 209.5h3M427 209.5h3M235 212.5h3M430 212.5h3M235 215.5h3M430 215.5h3M232 218.5h3M433 218.5h3M229 221.5h3M436 221.5h3M226 224.5h3M439 224.5h3M223 230.5h3M442 230.5h3M220 233.5h3M445 233.5h3M220 236.5h3M445 236.5h3M217 239.5h3M448 239.5h3M217 242.5h3M448 242.5h3M214 248.5h3M451 248.5h3M211 254.5h3M454 254.5h3M211 257.5h3M454 257.5h3M208 266.5h3M457 266.5h3M208 269.5h3M457 269.5h3M208 272.5h3M457 272.5h3M205 284.5h3M460 284.5h3M259 299.5h3M406 299.5h3M259 302.5h3M406 302.5h3M214 314.5h3M451 314.5h3M214 317.5h3M451 317.5h3M214 320.5h3M451 320.5h3M214 323.5h3M451 323.5h3M214 326.5h3M451 326.5h3M214 329.5h3M451 329.5h3M214 332.5h3M451 332.5h3M217 341.5h3M448 341.5h3M217 344.5h3M448 344.5h3M217 347.5h3M448 347.5h3M220 353.5h3M445 353.5h3M220 356.5h3M445 356.5h3M223 362.5h3M442 362.5h3M223 365.5h3M442 365.5h3M226 371.5h3M439 371.5h3M229 377.5h3M436 377.5h3M232 383.5h3M433 383.5h3M235 386.5h3M430 386.5h3M235 389.5h3M430 389.5h3M238 392.5h3M427 392.5h3M241 395.5h3M424 395.5h3M241 398.5h3M424 398.5h3M244 401.5h3M421 401.5h3M247 404.5h3M418 404.5h3M250 407.5h3M415 407.5h3M250 410.5h6M412 410.5h6M253 413.5h6M409 413.5h6M256 416.5h6M406 416.5h6M259 419.5h6M403 419.5h6M262 422.5h6M400 422.5h6M265 425.5h6M397 425.5h6M268 428.5h6M394 428.5h6M271 431.5h6M391 431.5h6M274 434.5h9M385 434.5h9M280 437.5h6M382 437.5h6M283 440.5h9M376 440.5h9M286 443.5h9M373 443.5h9M292 446.5h9M367 446.5h9M295 449.5h15M358 449.5h15M301 452.5h18M349 452.5h18M307 455.5h54M316 458.5h36"/>
<path stroke="#00001b" d="M310 173.5h48M298 176.5h9M361 176.5h9M289 179.5h6M373 179.5h6M280 182.5h6M382 182.5h6M274 185.5h6M388 185.5h6M268 188.5h6M394 188.5h6M265 191.5h3M400 191.5h3M259 194.5h6M403 194.5h6M256 197.5h3M409 197.5h3M253 200.5h3M412 200.5h3M247 203.5h6M415 203.5h6M244 206.5h3M421 206.5h3M241 209.5h3M424 209.5h3M238 212.5h3M427 212.5h3M235 218.5h3M430 218.5h3M232 221.5h3M433 221.5h3M229 224.5h3M436 224.5h3M226 227.5h3M439 227.5h3M226 230.5h3M439 230.5h3M223 233.5h3M442 233.5h3M220 239.5h3M445 239.5h3M217 245.5h3M448 245.5h3M214 251.5h3M451 251.5h3M214 254.5h3M451 254.5h3M211 260.5h3M454 260.5h3M211 263.5h3M454 263.5h3M211 266.5h3M454 266.5h3M208 275.5h3M457 275.5h3M208 278.5h3M457 278.5h3M208 281.5h3M457 281.5h3M208 284.5h3M457 284.5h3M232 287.5h3M433 287.5h3M259 293.5h3M406 293.5h3M259 296.5h3M406 296.5h3M217 329.5h3M448 329.5h3M217 332.5h3M448 332.5h3M217 335.5h3M448 335.5h3M217 338.5h3M448 338.5h3M220 347.5h3M445 347.5h3M220 350.5h3M445 350.5h3M223 356.5h3M442 356.5h3M223 359.5h3M442 359.5h3M226 365.5h3M439 365.5h3M226 368.5h3M439 368.5h3M229 371.5h3M436 371.5h3M229 374.5h3M436 374.5h3M232 377.5h3M433 377.5h3M232 380.5h3M433 380.5h3M235 383.5h3M430 383.5h3M238 386.5h3M427 386.5h3M238 389.5h3M427 389.5h3M241 392.5h3M424 392.5h3M244 395.5h3M421 395.5h3M244 398.5h3M421 398.5h3M247 401.5h3M418 401.5h3M250 404.5h3M415 404.5h3M253 407.5h3M412 407.5h3M256 410.5h3M409 410.5h3M259 413.5h3M406 413.5h3M262 416.5h3M403 416.5h3M265 419.5h3M400 419.5h3M268 422.5h3M397 422.5h3M271 425.5h6M391 425.5h6M274 428.5h6M388 428.5h6M277 431.5h9M382 431.5h9M283 434.5h6M379 434.5h6M286 437.5h9M373 437.5h9M292 440.5h9M367 440.5h9M295 443.5h12M361 443.5h12M301 446.5h18M349 446.5h18M310 449.5h48M319 452.5h30"/>
<path stroke="#00001c" d="M307 176.5h24M337 176.5h24M295 179.5h12M361 179.5h12M286 182.5h9M373 182.5h9M280 185.5h6M382 185.5h6M274 188.5h6M388 188.5h6M268 191.5h6M394 191.5h6M265 194.5h3M400 194.5h3M259 197.5h3M406 197.5h3M256 200.5h3M409 200.5h3M253 203.5h3M412 203.5h3M247 206.5h3M418 206.5h3M244 209.5h3M421 209.5h3M241 212.5h3M424 212.5h3M238 215.5h3M427 215.5h3M235 221.5h3M430 221.5h3M232 224.5h3M433 224.5h3M229 227.5h3M436 227.5h3M226 233.5h3M439 233.5h3M223 236.5h3M442 236.5h3M223 239.5h3M442 239.5h3M220 242.5h3M445 242.5h3M220 245.5h3M445 245.5h3M217 248.5h3M448 248.5h3M217 251.5h3M448 251.5h3M214 257.5h3M451 257.5h3M214 260.5h3M451 260.5h3M211 269.5h3M454 269.5h3M211 272.5h3M454 272.5h3M211 275.5h3M454 275.5h3M217 314.5h3M448 314.5h3M217 317.5h3M448 317.5h3M217 320.5h3M448 320.5h3M217 323.5h3M448 323.5h3M217 326.5h3M448 326.5h3M220 338.5h3M445 338.5h3M220 341.5h3M445 341.5h3M220 344.5h3M445 344.5h3M223 350.5h3M442 350.5h3M223 353.5h3M442 353.5h3M226 359.5h3M439 359.5h3M226 362.5h3M439 362.5h3M229 368.5h3M436 368.5h3M232 374.5h3M433 374.5h3M235 380.5h3M430 380.5h3M238 383.5h3M427 383.5h3M241 389.5h3M424 389.5h3M244 392.5h3M421 392.5h3M247 395.5h3M418 395.5h3M247 398.5h3M418 398.5h3M250 401.5h3M415 401.5h3M253 404.5h3M412 404.5h3M256 407.5h3M409 407.5h3M259 410.5h3M406 410.5h3M262 413.5h3M403 413.5h3M265 416.5h6M397 416.5h6M268 419.5h6M394 419.5h6M271 422.5h6M391 422.5h6M277 425.5h6M385 425.5h6M280 428.5h6M382 428.5h6M286 431.5h6M376 431.5h6M289 434.5h9M370 434.5h9M295 437.5h9M364 437.5h9M301 440.5h15M352 440.5h15M307 443.5h54M319 446.5h30"/>
<path stroke="#00001d" d="M331 176.5h6M307 179.5h12M349 179.5h12M295 182.5h9M364 182.5h9M286 185.5h6M376 185.5h6M280 188.5h3M385 188.5h3M274 191.5h3M391 191.5h3M268 194.5h3M397 194.5h3M262 197.5h6M400 197.5h6M259 200.5h3M406 200.5h3M256 203.5h3M409 203.5h3M250 206.5h3M415 206.5h3M247 209.5h3M418 209.5h3M244 212.5h3M421 212.5h3M241 215.5h3M424 215.5h3M238 218.5h3M427 218.5h3M235 224.5h3M430 224.5h3M232 227.5h3M433 227.5h3M229 230.5h3M436 230.5h3M226 236.5h3M439 236.5h3M223 242.5h3M442 242.5h3M220 248.5h3M445 248.5h3M217 254.5h3M448 254.5h3M217 257.5h3M448 257.5h3M214 263.5h3M451 263.5h3M214 266.5h3M451 266.5h3M214 269.5h3M451 269.5h3M211 278.5h3M454 278.5h3M211 281.5h3M454 281.5h3M211 284.5h3M454 284.5h3M235 287.5h3M430 287.5h3M220 326.5h3M445 326.5h3M220 329.5h3M445 329.5h3M220 332.5h3M445 332.5h3M220 335.5h3M445 335.5h3M223 344.5h3M442 344.5h3M223 347.5h3M442 347.5h3M226 356.5h3M439 356.5h3M229 362.5h3M436 362.5h3M229 365.5h3M436 365.5h3M232 368.5h3M433 368.5h3M232 371.5h3M433 371.5h3M235 374.5h3M430 374.5h3M235 377.5h3M430 377.5h3M238 380.5h3M427 380.5h3M241 386.5h3M424 386.5h3M244 389.5h3M421 389.5h3M247 392.5h3M418 392.5h3M250 395.5h3M415 395.5h3M250 398.5h3M415 398.5h3M253 401.5h3M412 401.5h3M256 404.5h3M409 404.5h3M259 407.5h3M406 407.5h3M262 410.5h6M400 410.5h6M265 413.5h6M397 413.5h6M271 416.5h3M394 416.5h3M274 419.5h6M388 419.5h6M277 422.5h6M385 422.5h6M283 425.5h6M379 425.5h6M286 428.5h9M373 428.5h9M292 431.5h9M367 431.5h9M298 434.5h12M358 434.5h12M304 437.5h18M346 437.5h18M316 440.5h36"/>
<path stroke="#00001e" d="M319 179.5h30M304 182.5h9M355 182.5h9M292 185.5h6M370 185.5h6M283 188.5h6M379 188.5h6M277 191.5h6M385 191.5h6M271 194.5h6M391 194.5h6M268 197.5h3M397 197.5h3M262 200.5h3M403 200.5h3M259 203.5h3M406 203.5h3M253 206.5h3M412 206.5h3M250 209.5h3M415 209.5h3M247 212.5h3M418 212.5h3M244 215.5h3M421 215.5h3M241 218.5h3M424 218.5h3M238 221.5h3M427 221.5h3M235 227.5h3M430 227.5h3M232 230.5h3M433 230.5h3M229 233.5h3M436 233.5h3M229 236.5h3M436 236.5h3M226 239.5h3M439 239.5h3M223 245.5h3M442 245.5h3M220 251.5h3M445 251.5h3M220 254.5h3M445 254.5h3M217 260.5h3M448 260.5h3M217 263.5h3M448 263.5h3M214 272.5h3M451 272.5h3M214 275.5h3M451 275.5h3M214 278.5h3M451 278.5h3M214 281.5h3M451 281.5h3M220 314.5h3M445 314.5h3M220 317.5h3M445 317.5h3M220 320.5h3M445 320.5h3M220 323.5h3M445 323.5h3M223 338.5h3M442 338.5h3M223 341.5h3M442 341.5h3M226 350.5h3M439 350.5h3M226 353.5h3M439 353.5h3M229 359.5h3M436 359.5h3M232 365.5h3M433 365.5h3M235 371.5h3M430 371.5h3M238 377.5h3M427 377.5h3M241 380.5h3M424 380.5h3M241 383.5h3M424 383.5h3M244 386.5h3M421 386.5h3M247 389.5h3M418 389.5h3M250 392.5h3M415 392.5h3M253 395.5h3M412 395.5h3M253 398.5h3M412 398.5h3M256 401.5h3M409 401.5h3M259 404.5h6M403 404.5h6M262 407.5h6M400 407.5h6M268 410.5h3M397 410.5h3M271 413.5h3M394 413.5h3M274 416.5h6M388 416.5h6M280 419.5h3M385 419.5h3M283 422.5h6M379 422.5h6M289 425.5h6M373 425.5h6M295 428.5h6M367 428.5h6M301 431.5h9M358 431.5h9M310 434.5h18M340 434.5h18M322 437.5h24"/>
<path stroke="#00001f" d="M313 182.5h42M298 185.5h9M361 185.5h9M289 188.5h6M373 188.5h6M283 191.5h3M382 191.5h3M277 194.5h3M388 194.5h3M271 197.5h3M394 197.5h3M265 200.5h3M400 200.5h3M262 203.5h3M403 203.5h3M256 206.5h3M409 206.5h3M253 209.5h3M412 209.5h3M250 212.5h3M415 212.5h3M247 215.5h3M418 215.5h3M244 218.5h3M421 218.5h3M241 221.5h3M424 221.5h3M238 224.5h3M427 224.5h3M235 230.5h3M430 230.5h3M232 233.5h3M433 233.5h3M229 239.5h3M436 239.5h3M226 242.5h3M439 242.5h3M223 248.5h3M442 248.5h3M223 251.5h3M442 251.5h3M220 257.5h3M445 257.5h3M217 266.5h3M448 266.5h3M217 269.5h3M448 269.5h3M214 284.5h3M451 284.5h3M238 287.5h3M427 287.5h3M223 329.5h3M442 329.5h3M223 332.5h3M442 332.5h3M223 335.5h3M442 335.5h3M226 344.5h3M439 344.5h3M226 347.5h3M439 347.5h3M229 353.5h3M436 353.5h3M229 356.5h3M436 356.5h3M232 362.5h3M433 362.5h3M235 368.5h3M430 368.5h3M238 374.5h3M427 374.5h3M241 377.5h3M424 377.5h3M244 383.5h3M421 383.5h3M247 386.5h3M418 386.5h3M250 389.5h3M415 389.5h3M256 398.5h3M409 398.5h3M259 401.5h6M403 401.5h6M265 404.5h3M400 404.5h3M268 407.5h3M397 407.5h3M271 410.5h3M394 410.5h3M274 413.5h6M388 413.5h6M280 416.5h3M385 416.5h3M283 419.5h6M379 419.5h6M289 422.5h6M373 422.5h6M295 425.5h9M364 425.5h9M301 428.5h12M355 428.5h12M310 431.5h48M328 434.5h12"/>
<path stroke="#000020" d="M307 185.5h12M349 185.5h12M295 188.5h6M367 188.5h6M286 191.5h6M376 191.5h6M280 194.5h6M382 194.5h6M274 197.5h3M391 197.5h3M268 200.5h6M394 200.5h6M265 203.5h3M400 203.5h3M259 206.5h3M406 206.5h3M256 209.5h3M409 209.5h3M253 212.5h3M412 212.5h3M250 215.5h3M415 215.5h3M247 218.5h3M418 218.5h3M244 221.5h3M421 221.5h3M241 224.5h3M424 224.5h3M238 227.5h3M427 227.5h3M232 236.5h3M433 236.5h3M229 242.5h3M436 242.5h3M226 245.5h3M439 245.5h3M226 248.5h3M439 248.5h3M223 254.5h3M442 254.5h3M220 260.5h3M445 260.5h3M220 263.5h3M445 263.5h3M217 272.5h3M448 272.5h3M217 275.5h3M448 275.5h3M217 278.5h3M448 278.5h3M217 281.5h3M448 281.5h3M223 314.5h3M442 314.5h3M223 317.5h3M442 317.5h3M223 320.5h3M442 320.5h3M223 323.5h3M442 323.5h3M223 326.5h3M442 326.5h3M226 338.5h3M439 338.5h3M226 341.5h3M439 341.5h3M229 350.5h3M436 350.5h3M232 359.5h3M433 359.5h3M235 365.5h3M430 365.5h3M238 371.5h3M427 371.5h3M241 374.5h3M424 374.5h3M244 380.5h3M421 380.5h3M247 383.5h3M418 383.5h3M250 386.5h3M415 386.5h3M253 392.5h3M412 392.5h3M256 395.5h3M409 395.5h3M259 398.5h3M406 398.5h3M265 401.5h3M400 401.5h3M268 404.5h3M397 404.5h3M271 407.5h3M394 407.5h3M274 410.5h6M388 410.5h6M280 413.5h3M385 413.5h3M283 416.5h6M379 416.5h6M289 419.5h6M373 419.5h6M295 422.5h9M364 422.5h9M304 425.5h9M355 425.5h9M313 428.5h42"/>
<path stroke="#000021" d="M319 185.5h30M301 188.5h9M358 188.5h9M292 191.5h6M370 191.5h6M286 194.5h3M379 194.5h3M277 197.5h6M385 197.5h6M274 200.5h3M391 200.5h3M268 203.5h3M397 203.5h3M262 206.5h3M403 206.5h3M259 209.5h3M406 209.5h3M256 212.5h3M409 212.5h3M253 215.5h3M412 215.5h3M244 224.5h3M421 224.5h3M241 227.5h3M424 227.5h3M238 230.5h3M427 230.5h3M235 233.5h3M430 233.5h3M232 239.5h3M433 239.5h3M229 245.5h3M436 245.5h3M226 251.5h3M439 251.5h3M223 257.5h3M442 257.5h3M223 260.5h3M442 260.5h3M220 266.5h3M445 266.5h3M220 269.5h3M445 269.5h3M220 272.5h3M445 272.5h3M217 284.5h3M448 284.5h3M241 287.5h3M424 287.5h3M226 332.5h3M439 332.5h3M226 335.5h3M439 335.5h3M229 344.5h3M436 344.5h3M229 347.5h3M436 347.5h3M232 353.5h3M433 353.5h3M232 356.5h3M433 356.5h3M235 362.5h3M430 362.5h3M238 368.5h3M427 368.5h3M241 371.5h3M424 371.5h3M244 377.5h3M421 377.5h3M247 380.5h3M418 380.5h3M253 389.5h3M412 389.5h3M256 392.5h3M409 392.5h3M259 395.5h3M406 395.5h3M262 398.5h3M403 398.5h3M268 401.5h3M397 401.5h3M271 404.5h3M394 404.5h3M274 407.5h3M391 407.5h3M280 410.5h3M385 410.5h3M283 413.5h6M379 413.5h6M289 416.5h6M373 416.5h6M295 419.5h6M367 419.5h6M304 422.5h9M355 422.5h9M313 425.5h42"/>
<path stroke="#000022" d="M310 188.5h12M346 188.5h12M298 191.5h6M364 191.5h6M289 194.5h6M373 194.5h6M283 197.5h3M382 197.5h3M277 200.5h3M388 200.5h3M271 203.5h3M394 203.5h3M265 206.5h3M400 206.5h3M262 209.5h3M403 209.5h3M259 212.5h3M406 212.5h3M250 218.5h3M415 218.5h3M247 221.5h3M418 221.5h3M241 230.5h3M424 230.5h3M238 233.5h3M427 233.5h3M235 236.5h3M430 236.5h3M232 242.5h3M433 242.5h3M229 248.5h3M436 248.5h3M226 254.5h3M439 254.5h3M223 263.5h3M442 263.5h3M220 275.5h3M445 275.5h3M220 278.5h3M445 278.5h3M220 281.5h3M445 281.5h3M226 320.5h3M439 320.5h3M226 323.5h3M439 323.5h3M226 326.5h3M439 326.5h3M226 329.5h3M439 329.5h3M229 341.5h3M436 341.5h3M232 350.5h3M433 350.5h3M235 359.5h3M430 359.5h3M238 365.5h3M427 365.5h3M241 368.5h3M424 368.5h3M244 374.5h3M421 374.5h3M247 377.5h3M418 377.5h3M250 383.5h3M415 383.5h3M253 386.5h3M412 386.5h3M256 389.5h3M409 389.5h3M259 392.5h3M406 392.5h3M262 395.5h3M403 395.5h3M265 398.5h3M400 398.5h3M271 401.5h3M394 401.5h3M274 404.5h3M391 404.5h3M277 407.5h6M385 407.5h6M283 410.5h3M382 410.5h3M289 413.5h3M376 413.5h3M295 416.5h6M367 416.5h6M301 419.5h9M358 419.5h9M313 422.5h15M340 422.5h15"/>
<path stroke="#000023" d="M322 188.5h24M304 191.5h9M355 191.5h9M295 194.5h3M370 194.5h3M286 197.5h6M376 197.5h6M280 200.5h3M385 200.5h3M274 203.5h3M391 203.5h3M268 206.5h3M397 206.5h3M265 209.5h3M400 209.5h3M256 215.5h3M409 215.5h3M253 218.5h3M412 218.5h3M250 221.5h3M415 221.5h3M247 224.5h3M418 224.5h3M244 227.5h3M421 227.5h3M238 236.5h3M427 236.5h3M235 239.5h3M430 239.5h3M232 245.5h3M433 245.5h3M229 251.5h3M436 251.5h3M226 257.5h3M439 257.5h3M226 260.5h3M439 260.5h3M223 266.5h3M442 266.5h3M223 269.5h3M442 269.5h3M223 272.5h3M442 272.5h3M220 284.5h3M445 284.5h3M262 311.5h3M403 311.5h3M226 314.5h3M439 314.5h3M226 317.5h3M439 317.5h3M229 335.5h3M436 335.5h3M229 338.5h3M436 338.5h3M232 347.5h3M433 347.5h3M235 353.5h3M430 353.5h3M235 356.5h3M430 356.5h3M238 362.5h3M427 362.5h3M241 365.5h3M424 365.5h3M244 371.5h3M421 371.5h3M250 380.5h3M415 380.5h3M253 383.5h3M412 383.5h3M256 386.5h3M409 386.5h3M259 389.5h3M406 389.5h3M262 392.5h3M403 392.5h3M265 395.5h3M400 395.5h3M268 398.5h3M397 398.5h3M274 401.5h3M391 401.5h3M277 404.5h3M388 404.5h3M283 407.5h3M382 407.5h3M286 410.5h6M376 410.5h6M292 413.5h6M370 413.5h6M301 416.5h6M361 416.5h6M310 419.5h12M346 419.5h12M328 422.5h12"/>
<path stroke="#000024" d="M313 191.5h9M346 191.5h9M298 194.5h6M364 194.5h6M292 197.5h3M373 197.5h3M283 200.5h3M382 200.5h3M277 203.5h3M388 203.5h3M271 206.5h3M394 206.5h3M268 209.5h3M397 209.5h3M262 212.5h3M403 212.5h3M259 215.5h3M406 215.5h3M256 218.5h3M409 218.5h3M253 221.5h3M412 221.5h3M250 224.5h3M415 224.5h3M247 227.5h3M418 227.5h3M244 230.5h3M421 230.5h3M241 233.5h3M424 233.5h3M238 239.5h3M427 239.5h3M235 242.5h3M430 242.5h3M232 248.5h3M433 248.5h3M229 254.5h3M436 254.5h3M226 263.5h3M439 263.5h3M223 275.5h3M442 275.5h3M223 278.5h3M442 278.5h3M223 281.5h3M442 281.5h3M244 287.5h3M421 287.5h3M262 308.5h3M403 308.5h3M229 329.5h3M436 329.5h3M229 332.5h3M436 332.5h3M232 341.5h3M433 341.5h3M232 344.5h3M433 344.5h3M235 350.5h3M430 350.5h3M238 359.5h3M427 359.5h3M244 368.5h3M421 368.5h3M247 374.5h3M418 374.5h3M250 377.5h3M415 377.5h3M253 380.5h3M412 380.5h3M265 392.5h3M400 392.5h3M268 395.5h3M397 395.5h3M271 398.5h3M394 398.5h3M277 401.5h3M388 401.5h3M280 404.5h3M385 404.5h3M286 407.5h3M379 407.5h3M292 410.5h3M373 410.5h3M298 413.5h6M364 413.5h6M307 416.5h9M352 416.5h9M322 419.5h24"/>
<path stroke="#000025" d="M322 191.5h24M304 194.5h9M355 194.5h9M295 197.5h6M367 197.5h6M286 200.5h6M376 200.5h6M280 203.5h3M385 203.5h3M274 206.5h3M391 206.5h3M271 209.5h3M394 209.5h3M265 212.5h3M400 212.5h3M262 215.5h3M403 215.5h3M244 233.5h3M421 233.5h3M241 236.5h3M424 236.5h3M235 245.5h3M430 245.5h3M232 251.5h3M433 251.5h3M229 257.5h3M436 257.5h3M229 260.5h3M436 260.5h3M226 266.5h3M439 266.5h3M226 269.5h3M439 269.5h3M223 284.5h3M442 284.5h3M262 305.5h3M403 305.5h3M229 314.5h3M436 314.5h3M229 317.5h3M436 317.5h3M229 320.5h3M436 320.5h3M229 323.5h3M436 323.5h3M229 326.5h3M436 326.5h3M232 338.5h3M433 338.5h3M235 347.5h3M430 347.5h3M238 356.5h3M427 356.5h3M241 362.5h3M424 362.5h3M244 365.5h3M421 365.5h3M247 371.5h3M418 371.5h3M250 374.5h3M415 374.5h3M256 383.5h3M409 383.5h3M259 386.5h3M406 386.5h3M262 389.5h3M403 389.5h3M271 395.5h3M394 395.5h3M274 398.5h3M391 398.5h3M280 401.5h3M385 401.5h3M283 404.5h3M382 404.5h3M289 407.5h3M376 407.5h3M295 410.5h6M367 410.5h6M304 413.5h6M358 413.5h6M316 416.5h36"/>
<path stroke="#000026" d="M313 194.5h9M346 194.5h9M301 197.5h3M364 197.5h3M292 200.5h3M373 200.5h3M283 203.5h3M382 203.5h3M277 206.5h3M388 206.5h3M274 209.5h3M391 209.5h3M268 212.5h3M397 212.5h3M265 215.5h3M400 215.5h3M259 218.5h3M406 218.5h3M256 221.5h3M409 221.5h3M253 224.5h3M412 224.5h3M250 227.5h3M415 227.5h3M247 230.5h3M418 230.5h3M241 239.5h3M424 239.5h3M238 242.5h3M427 242.5h3M235 248.5h3M430 248.5h3M232 254.5h3M433 254.5h3M229 263.5h3M436 263.5h3M226 272.5h3M439 272.5h3M226 275.5h3M439 275.5h3M226 278.5h3M439 278.5h3M232 332.5h3M433 332.5h3M232 335.5h3M433 335.5h3M235 344.5h3M430 344.5h3M238 353.5h3M427 353.5h3M241 359.5h3M424 359.5h3M247 368.5h3M418 368.5h3M253 377.5h3M412 377.5h3M256 380.5h3M409 380.5h3M259 383.5h3M406 383.5h3M262 386.5h3M403 386.5h3M265 389.5h3M400 389.5h3M268 392.5h3M397 392.5h3M274 395.5h3M391 395.5h3M277 398.5h3M388 398.5h3M283 401.5h3M382 401.5h3M286 404.5h6M376 404.5h6M292 407.5h6M370 407.5h6M301 410.5h6M361 410.5h6M310 413.5h12M346 413.5h12"/>
<path stroke="#000027" d="M322 194.5h24M304 197.5h6M358 197.5h6M295 200.5h3M370 200.5h3M286 203.5h6M376 203.5h6M280 206.5h3M385 206.5h3M271 212.5h3M394 212.5h3M262 218.5h3M403 218.5h3M259 221.5h3M406 221.5h3M256 224.5h3M409 224.5h3M253 227.5h3M412 227.5h3M250 230.5h3M415 230.5h3M247 233.5h3M418 233.5h3M244 236.5h3M421 236.5h3M241 242.5h3M424 242.5h3M238 245.5h3M427 245.5h3M235 251.5h3M430 251.5h3M232 257.5h3M433 257.5h3M229 266.5h3M436 266.5h3M229 269.5h3M436 269.5h3M226 281.5h3M439 281.5h3M226 284.5h3M439 284.5h3M247 287.5h3M418 287.5h3M262 299.5h3M403 299.5h3M262 302.5h3M403 302.5h3M232 326.5h3M433 326.5h3M232 329.5h3M433 329.5h3M235 341.5h3M430 341.5h3M238 350.5h3M427 350.5h3M241 356.5h3M424 356.5h3M244 362.5h3M421 362.5h3M250 371.5h3M415 371.5h3M253 374.5h3M412 374.5h3M256 377.5h3M409 377.5h3M268 389.5h3M397 389.5h3M271 392.5h3M394 392.5h3M280 398.5h3M385 398.5h3M286 401.5h3M379 401.5h3M292 404.5h3M373 404.5h3M298 407.5h3M367 407.5h3M307 410.5h6M355 410.5h6M322 413.5h24"/>
<path stroke="#000028" d="M310 197.5h9M349 197.5h9M298 200.5h6M364 200.5h6M292 203.5h3M373 203.5h3M283 206.5h3M382 206.5h3M277 209.5h3M388 209.5h3M274 212.5h3M391 212.5h3M268 215.5h3M397 215.5h3M265 218.5h3M400 218.5h3M244 239.5h3M421 239.5h3M238 248.5h3M427 248.5h3M235 254.5h3M430 254.5h3M232 260.5h3M433 260.5h3M232 263.5h3M433 263.5h3M229 272.5h3M436 272.5h3M229 275.5h3M436 275.5h3M262 296.5h3M403 296.5h3M232 317.5h3M433 317.5h3M232 320.5h3M433 320.5h3M232 323.5h3M433 323.5h3M235 338.5h3M430 338.5h3M238 347.5h3M427 347.5h3M241 353.5h3M424 353.5h3M244 359.5h3M421 359.5h3M247 365.5h3M418 365.5h3M250 368.5h3M415 368.5h3M259 380.5h3M406 380.5h3M262 383.5h3M403 383.5h3M265 386.5h3M400 386.5h3M274 392.5h3M391 392.5h3M277 395.5h3M388 395.5h3M283 398.5h3M382 398.5h3M289 401.5h3M376 401.5h3M295 404.5h3M370 404.5h3M301 407.5h6M361 407.5h6M313 410.5h9M346 410.5h9"/>
<path stroke="#000029" d="M319 197.5h30M304 200.5h6M358 200.5h6M295 203.5h3M370 203.5h3M286 206.5h3M379 206.5h3M280 209.5h3M385 209.5h3M271 215.5h3M394 215.5h3M262 221.5h3M403 221.5h3M259 224.5h3M406 224.5h3M256 227.5h3M409 227.5h3M253 230.5h3M412 230.5h3M250 233.5h3M415 233.5h3M247 236.5h3M418 236.5h3M241 245.5h3M424 245.5h3M238 251.5h3M427 251.5h3M235 257.5h3M430 257.5h3M232 266.5h3M433 266.5h3M229 278.5h3M436 278.5h3M229 281.5h3M436 281.5h3M229 284.5h3M436 284.5h3M262 293.5h3M403 293.5h3M232 314.5h3M433 314.5h3M235 332.5h3M430 332.5h3M235 335.5h3M430 335.5h3M238 344.5h3M427 344.5h3M241 350.5h3M424 350.5h3M244 356.5h3M421 356.5h3M247 362.5h3M418 362.5h3M253 371.5h3M412 371.5h3M256 374.5h3M409 374.5h3M259 377.5h3M406 377.5h3M262 380.5h3M403 380.5h3M265 383.5h3M400 383.5h3M268 386.5h3M397 386.5h3M271 389.5h3M394 389.5h3M280 395.5h3M385 395.5h3M286 398.5h3M379 398.5h3M292 401.5h3M373 401.5h3M298 404.5h6M364 404.5h6M307 407.5h6M355 407.5h6M322 410.5h24"/>
<path stroke="#00002a" d="M310 200.5h6M352 200.5h6M298 203.5h6M364 203.5h6M289 206.5h6M373 206.5h6M283 209.5h3M382 209.5h3M277 212.5h3M388 212.5h3M268 218.5h3M397 218.5h3M265 221.5h3M400 221.5h3M247 239.5h3M418 239.5h3M244 242.5h3M421 242.5h3M241 248.5h3M424 248.5h3M238 254.5h3M427 254.5h3M235 260.5h3M430 260.5h3M232 269.5h3M433 269.5h3M250 287.5h3M415 287.5h3M235 329.5h3M430 329.5h3M238 341.5h3M427 341.5h3M241 347.5h3M424 347.5h3M247 359.5h3M418 359.5h3M250 365.5h3M415 365.5h3M253 368.5h3M412 368.5h3M274 389.5h3M391 389.5h3M277 392.5h3M388 392.5h3M283 395.5h3M382 395.5h3M289 398.5h3M376 398.5h3M295 401.5h3M370 401.5h3M304 404.5h3M361 404.5h3M313 407.5h9M346 407.5h9"/>
<path stroke="#00002b" d="M316 200.5h12M340 200.5h12M304 203.5h3M361 203.5h3M295 206.5h3M370 206.5h3M286 209.5h3M379 209.5h3M280 212.5h3M385 212.5h3M274 215.5h3M391 215.5h3M271 218.5h3M394 218.5h3M262 224.5h3M403 224.5h3M259 227.5h3M406 227.5h3M256 230.5h3M409 230.5h3M253 233.5h3M412 233.5h3M250 236.5h3M415 236.5h3M244 245.5h3M421 245.5h3M241 251.5h3M424 251.5h3M238 257.5h3M427 257.5h3M235 263.5h3M430 263.5h3M232 272.5h3M433 272.5h3M232 275.5h3M433 275.5h3M235 323.5h3M430 323.5h3M235 326.5h3M430 326.5h3M238 338.5h3M427 338.5h3M244 353.5h3M421 353.5h3M250 362.5h3M415 362.5h3M256 371.5h3M409 371.5h3M259 374.5h3M406 374.5h3M262 377.5h3M403 377.5h3M265 380.5h3M400 380.5h3M268 383.5h3M397 383.5h3M271 386.5h3M394 386.5h3M280 392.5h3M385 392.5h3M286 395.5h3M379 395.5h3M292 398.5h3M373 398.5h3M298 401.5h3M367 401.5h3M307 404.5h6M355 404.5h6M322 407.5h24"/>
<path stroke="#00002c" d="M328 200.5h12M307 203.5h6M355 203.5h6M298 206.5h3M367 206.5h3M289 209.5h3M376 209.5h3M283 212.5h3M382 212.5h3M277 215.5h3M388 215.5h3M268 221.5h3M397 221.5h3M265 224.5h3M400 224.5h3M250 239.5h3M415 239.5h3M247 242.5h3M418 242.5h3M235 266.5h3M430 266.5h3M232 278.5h3M433 278.5h3M232 281.5h3M433 281.5h3M232 284.5h3M433 284.5h3M235 314.5h3M430 314.5h3M235 317.5h3M430 317.5h3M235 320.5h3M430 320.5h3M238 335.5h3M427 335.5h3M241 344.5h3M424 344.5h3M244 350.5h3M421 350.5h3M247 356.5h3M418 356.5h3M253 365.5h3M412 365.5h3M274 386.5h3M391 386.5h3M277 389.5h3M388 389.5h3M283 392.5h3M382 392.5h3M289 395.5h3M376 395.5h3M295 398.5h3M370 398.5h3M301 401.5h6M361 401.5h6M313 404.5h6M349 404.5h6"/>
<path stroke="#00002d" d="M313 203.5h6M349 203.5h6M301 206.5h3M364 206.5h3M292 209.5h3M373 209.5h3M286 212.5h3M379 212.5h3M280 215.5h3M385 215.5h3M274 218.5h3M391 218.5h3M262 227.5h3M403 227.5h3M259 230.5h3M406 230.5h3M256 233.5h3M409 233.5h3M253 236.5h3M412 236.5h3M247 245.5h3M418 245.5h3M244 248.5h3M421 248.5h3M241 254.5h3M424 254.5h3M238 260.5h3M427 260.5h3M235 269.5h3M430 269.5h3M235 272.5h3M430 272.5h3M238 329.5h3M427 329.5h3M238 332.5h3M427 332.5h3M241 341.5h3M424 341.5h3M244 347.5h3M421 347.5h3M247 353.5h3M418 353.5h3M250 359.5h3M415 359.5h3M256 368.5h3M409 368.5h3M259 371.5h3M406 371.5h3M262 374.5h3M403 374.5h3M265 377.5h3M400 377.5h3M268 380.5h3M397 380.5h3M271 383.5h3M394 383.5h3M280 389.5h3M385 389.5h3M286 392.5h3M379 392.5h3M292 395.5h3M373 395.5h3M298 398.5h3M367 398.5h3M307 401.5h3M358 401.5h3M319 404.5h30"/>
<path stroke="#00002e" d="M319 203.5h30M304 206.5h6M358 206.5h6M295 209.5h3M370 209.5h3M289 212.5h3M376 212.5h3M277 218.5h3M388 218.5h3M271 221.5h3M394 221.5h3M268 224.5h3M397 224.5h3M250 242.5h3M415 242.5h3M244 251.5h3M421 251.5h3M241 257.5h3M424 257.5h3M238 263.5h3M427 263.5h3M235 275.5h3M430 275.5h3M253 287.5h3M412 287.5h3M238 326.5h3M427 326.5h3M241 338.5h3M424 338.5h3M253 362.5h3M412 362.5h3M274 383.5h3M391 383.5h3M277 386.5h3M388 386.5h3M301 398.5h3M364 398.5h3M310 401.5h6M352 401.5h6"/>
<path stroke="#00002f" d="M310 206.5h3M355 206.5h3M298 209.5h3M367 209.5h3M283 215.5h3M382 215.5h3M274 221.5h3M391 221.5h3M265 227.5h3M400 227.5h3M262 230.5h3M403 230.5h3M259 233.5h3M406 233.5h3M256 236.5h3M409 236.5h3M253 239.5h3M412 239.5h3M247 248.5h3M418 248.5h3M241 260.5h3M424 260.5h3M238 266.5h3M427 266.5h3M235 278.5h3M430 278.5h3M235 281.5h3M430 281.5h3M235 284.5h3M430 284.5h3M238 320.5h3M427 320.5h3M238 323.5h3M427 323.5h3M241 335.5h3M424 335.5h3M244 344.5h3M421 344.5h3M247 350.5h3M418 350.5h3M250 356.5h3M415 356.5h3M256 365.5h3M409 365.5h3M259 368.5h3M406 368.5h3M262 371.5h3M403 371.5h3M265 374.5h3M400 374.5h3M268 377.5h3M397 377.5h3M271 380.5h3M394 380.5h3M280 386.5h3M385 386.5h3M283 389.5h3M382 389.5h3M289 392.5h3M376 392.5h3M295 395.5h3M370 395.5h3M304 398.5h3M361 398.5h3M316 401.5h9M343 401.5h9"/>
<path stroke="#000030" d="M313 206.5h6M349 206.5h6M301 209.5h3M364 209.5h3M292 212.5h3M373 212.5h3M286 215.5h3M379 215.5h3M280 218.5h3M385 218.5h3M271 224.5h3M394 224.5h3M250 245.5h3M415 245.5h3M244 254.5h3M421 254.5h3M238 269.5h3M427 269.5h3M238 272.5h3M427 272.5h3M238 314.5h3M427 314.5h3M238 317.5h3M427 317.5h3M241 332.5h3M424 332.5h3M244 341.5h3M421 341.5h3M250 353.5h3M415 353.5h3M253 359.5h3M412 359.5h3M277 383.5h3M388 383.5h3M286 389.5h3M379 389.5h3M292 392.5h3M373 392.5h3M298 395.5h3M367 395.5h3M307 398.5h6M355 398.5h6M325 401.5h18"/>
<path stroke="#000031" d="M319 206.5h30M304 209.5h6M358 209.5h6M295 212.5h3M370 212.5h3M289 215.5h3M376 215.5h3M283 218.5h3M382 218.5h3M277 221.5h3M388 221.5h3M268 227.5h3M397 227.5h3M265 230.5h3M400 230.5h3M262 233.5h3M403 233.5h3M259 236.5h3M406 236.5h3M256 239.5h3M409 239.5h3M253 242.5h3M412 242.5h3M247 251.5h3M418 251.5h3M244 257.5h3M421 257.5h3M241 263.5h3M424 263.5h3M238 275.5h3M427 275.5h3M265 311.5h3M400 311.5h3M241 329.5h3M424 329.5h3M244 338.5h3M421 338.5h3M247 347.5h3M418 347.5h3M256 362.5h3M409 362.5h3M259 365.5h3M406 365.5h3M271 377.5h3M394 377.5h3M274 380.5h3M391 380.5h3M283 386.5h3M382 386.5h3M289 389.5h3M376 389.5h3M295 392.5h3M370 392.5h3M301 395.5h3M364 395.5h3M313 398.5h6M349 398.5h6"/>
<path stroke="#000032" d="M310 209.5h3M355 209.5h3M298 212.5h3M367 212.5h3M292 215.5h3M373 215.5h3M274 224.5h3M391 224.5h3M250 248.5h3M415 248.5h3M247 254.5h3M418 254.5h3M244 260.5h3M421 260.5h3M241 266.5h3M424 266.5h3M238 278.5h3M427 278.5h3M238 281.5h3M427 281.5h3M241 326.5h3M424 326.5h3M247 344.5h3M418 344.5h3M250 350.5h3M415 350.5h3M253 356.5h3M412 356.5h3M262 368.5h3M403 368.5h3M265 371.5h3M400 371.5h3M268 374.5h3M397 374.5h3M280 383.5h3M385 383.5h3M298 392.5h3M367 392.5h3M304 395.5h6M358 395.5h6M319 398.5h6M343 398.5h6"/>
<path stroke="#000033" d="M313 209.5h6M349 209.5h6M301 212.5h3M364 212.5h3M286 218.5h3M379 218.5h3M280 221.5h3M385 221.5h3M271 227.5h3M394 227.5h3M268 230.5h3M397 230.5h3M256 242.5h3M409 242.5h3M253 245.5h3M412 245.5h3M241 269.5h3M424 269.5h3M238 284.5h3M427 284.5h3M256 287.5h3M409 287.5h3M265 308.5h3M400 308.5h3M241 320.5h3M424 320.5h3M241 323.5h3M424 323.5h3M244 335.5h3M421 335.5h3M256 359.5h3M409 359.5h3M259 362.5h3M406 362.5h3M274 377.5h3M391 377.5h3M277 380.5h3M388 380.5h3M286 386.5h3M379 386.5h3M292 389.5h3M373 389.5h3M310 395.5h3M355 395.5h3M325 398.5h18"/>
<path stroke="#000034" d="M319 209.5h12M337 209.5h12M304 212.5h6M358 212.5h6M295 215.5h3M370 215.5h3M289 218.5h3M376 218.5h3M283 221.5h3M382 221.5h3M277 224.5h3M388 224.5h3M265 233.5h3M400 233.5h3M262 236.5h3M403 236.5h3M259 239.5h3M406 239.5h3M250 251.5h3M415 251.5h3M247 257.5h3M418 257.5h3M244 263.5h3M421 263.5h3M241 272.5h3M424 272.5h3M241 314.5h3M424 314.5h3M241 317.5h3M424 317.5h3M244 332.5h3M421 332.5h3M247 341.5h3M418 341.5h3M250 347.5h3M415 347.5h3M253 353.5h3M412 353.5h3M262 365.5h3M403 365.5h3M265 368.5h3M400 368.5h3M268 371.5h3M397 371.5h3M271 374.5h3M394 374.5h3M283 383.5h3M382 383.5h3M289 386.5h3M376 386.5h3M295 389.5h3M370 389.5h3M301 392.5h3M364 392.5h3M313 395.5h3M352 395.5h3"/>
<path stroke="#000035" d="M331 209.5h6M310 212.5h3M355 212.5h3M298 215.5h3M367 215.5h3M274 227.5h3M391 227.5h3M271 230.5h3M394 230.5h3M253 248.5h3M412 248.5h3M244 266.5h3M421 266.5h3M241 275.5h3M424 275.5h3M244 329.5h3M421 329.5h3M247 338.5h3M418 338.5h3M256 356.5h3M409 356.5h3M280 380.5h3M385 380.5h3M298 389.5h3M367 389.5h3M304 392.5h3M361 392.5h3M316 395.5h9M343 395.5h9"/>
<path stroke="#000036" d="M313 212.5h3M352 212.5h3M301 215.5h3M364 215.5h3M292 218.5h3M373 218.5h3M286 221.5h3M379 221.5h3M280 224.5h3M385 224.5h3M268 233.5h3M397 233.5h3M265 236.5h3M400 236.5h3M262 239.5h3M403 239.5h3M259 242.5h3M406 242.5h3M256 245.5h3M409 245.5h3M250 254.5h3M415 254.5h3M247 260.5h3M418 260.5h3M241 278.5h3M424 278.5h3M241 281.5h3M424 281.5h3M265 305.5h3M400 305.5h3M244 326.5h3M421 326.5h3M250 344.5h3M415 344.5h3M253 350.5h3M412 350.5h3M259 359.5h3M406 359.5h3M262 362.5h3M403 362.5h3M274 374.5h3M391 374.5h3M277 377.5h3M388 377.5h3M286 383.5h3M379 383.5h3M292 386.5h3M373 386.5h3M307 392.5h6M355 392.5h6M325 395.5h18"/>
<path stroke="#000037" d="M316 212.5h9M343 212.5h9M304 215.5h3M361 215.5h3M295 218.5h3M370 218.5h3M289 221.5h3M376 221.5h3M283 224.5h3M382 224.5h3M277 227.5h3M388 227.5h3M253 251.5h3M412 251.5h3M244 269.5h3M421 269.5h3M241 284.5h3M424 284.5h3M244 323.5h3M421 323.5h3M247 335.5h3M418 335.5h3M256 353.5h3M409 353.5h3M265 365.5h3M400 365.5h3M268 368.5h3M397 368.5h3M271 371.5h3M394 371.5h3M283 380.5h3M382 380.5h3M289 383.5h3M376 383.5h3M295 386.5h3M370 386.5h3M301 389.5h3M364 389.5h3M313 392.5h3M352 392.5h3"/>
<path stroke="#000038" d="M325 212.5h18M307 215.5h3M358 215.5h3M298 218.5h3M367 218.5h3M274 230.5h3M391 230.5h3M271 233.5h3M394 233.5h3M256 248.5h3M409 248.5h3M250 257.5h3M415 257.5h3M247 263.5h3M418 263.5h3M244 272.5h3M421 272.5h3M259 287.5h3M406 287.5h3M265 302.5h3M400 302.5h3M244 320.5h3M421 320.5h3M247 332.5h3M418 332.5h3M250 341.5h3M415 341.5h3M253 347.5h3M412 347.5h3M259 356.5h3M406 356.5h3M280 377.5h3M385 377.5h3M304 389.5h3M361 389.5h3M316 392.5h6M346 392.5h6"/>
<path stroke="#000039" d="M310 215.5h3M355 215.5h3M301 218.5h3M364 218.5h3M292 221.5h3M373 221.5h3M286 224.5h3M379 224.5h3M280 227.5h3M385 227.5h3M268 236.5h3M397 236.5h3M265 239.5h3M400 239.5h3M262 242.5h3M403 242.5h3M259 245.5h3M406 245.5h3M253 254.5h3M412 254.5h3M247 266.5h3M418 266.5h3M244 275.5h3M421 275.5h3M265 299.5h3M400 299.5h3M244 314.5h3M421 314.5h3M244 317.5h3M421 317.5h3M250 338.5h3M415 338.5h3M256 350.5h3M409 350.5h3M262 359.5h3M403 359.5h3M265 362.5h3M400 362.5h3M271 368.5h3M394 368.5h3M274 371.5h3M391 371.5h3M277 374.5h3M388 374.5h3M286 380.5h3M379 380.5h3M292 383.5h3M373 383.5h3M298 386.5h3M367 386.5h3M307 389.5h3M358 389.5h3M322 392.5h6M340 392.5h6"/>
<path stroke="#00003a" d="M313 215.5h6M349 215.5h6M277 230.5h3M388 230.5h3M256 251.5h3M409 251.5h3M250 260.5h3M415 260.5h3M244 278.5h3M421 278.5h3M244 281.5h3M421 281.5h3M265 296.5h3M400 296.5h3M247 329.5h3M418 329.5h3M253 344.5h3M412 344.5h3M259 353.5h3M406 353.5h3M268 365.5h3M397 365.5h3M283 377.5h3M382 377.5h3M301 386.5h3M364 386.5h3M310 389.5h3M355 389.5h3M328 392.5h12"/>
<path stroke="#00003b" d="M319 215.5h6M343 215.5h6M304 218.5h3M361 218.5h3M295 221.5h3M370 221.5h3M289 224.5h3M376 224.5h3M283 227.5h3M382 227.5h3M274 233.5h3M391 233.5h3M259 248.5h3M406 248.5h3M253 257.5h3M412 257.5h3M247 269.5h3M418 269.5h3M244 284.5h3M421 284.5h3M265 293.5h3M400 293.5h3M247 326.5h3M418 326.5h3M250 335.5h3M415 335.5h3M262 356.5h3M403 356.5h3M280 374.5h3M385 374.5h3M289 380.5h3M376 380.5h3M295 383.5h3M370 383.5h3M304 386.5h3M361 386.5h3M313 389.5h6M349 389.5h6"/>
<path stroke="#00003c" d="M325 215.5h18M307 218.5h3M358 218.5h3M298 221.5h3M367 221.5h3M280 230.5h3M385 230.5h3M271 236.5h3M394 236.5h3M268 239.5h3M397 239.5h3M265 242.5h3M400 242.5h3M262 245.5h3M403 245.5h3M250 263.5h3M415 263.5h3M247 272.5h3M418 272.5h3M247 323.5h3M418 323.5h3M253 341.5h3M412 341.5h3M256 347.5h3M409 347.5h3M265 359.5h3M400 359.5h3M268 362.5h3M397 362.5h3M274 368.5h3M391 368.5h3M277 371.5h3M388 371.5h3M286 377.5h3M379 377.5h3M298 383.5h3M367 383.5h3M319 389.5h3M346 389.5h3"/>
<path stroke="#00003d" d="M310 218.5h3M313 218.5h6M349 218.5h6M355 218.5h3M301 221.5h3M364 221.5h3M292 224.5h3M295 224.5h3M370 224.5h3M373 224.5h3M286 227.5h3M379 227.5h3M277 233.5h3M388 233.5h3M274 236.5h3M391 236.5h3M259 251.5h3M406 251.5h3M256 254.5h3M409 254.5h3M253 260.5h3M412 260.5h3M250 266.5h3M415 266.5h3M247 275.5h3M418 275.5h3M247 278.5h3M418 278.5h3M262 287.5h3M403 287.5h3M247 317.5h3M418 317.5h3M247 320.5h3M418 320.5h3M250 332.5h3M415 332.5h3M253 338.5h3M412 338.5h3M256 344.5h3M409 344.5h3M259 350.5h3M406 350.5h3M262 353.5h3M403 353.5h3M271 365.5h3M394 365.5h3M280 371.5h3M385 371.5h3M283 374.5h3M382 374.5h3M289 377.5h3M376 377.5h3M292 380.5h3M295 380.5h3M370 380.5h3M373 380.5h3M301 383.5h3M364 383.5h3M307 386.5h3M310 386.5h3M355 386.5h3M358 386.5h3M322 389.5h6M328 389.5h12M340 389.5h6"/>
<path stroke="#000040" d="M319 218.5h30M304 221.5h9M355 221.5h9M298 224.5h3M367 224.5h3M289 227.5h6M373 227.5h6M283 230.5h6M379 230.5h6M280 233.5h3M385 233.5h3M271 239.5h3M394 239.5h3M268 242.5h3M397 242.5h3M265 245.5h3M400 245.5h3M262 248.5h3M403 248.5h3M259 254.5h3M406 254.5h3M256 257.5h3M409 257.5h3M253 263.5h3M412 263.5h3M250 269.5h3M415 269.5h3M250 272.5h3M415 272.5h3M247 281.5h3M418 281.5h3M247 284.5h3M418 284.5h3M331 308.5h6M247 314.5h3M418 314.5h3M250 326.5h3M415 326.5h3M250 329.5h3M415 329.5h3M253 335.5h3M412 335.5h3M256 341.5h3M409 341.5h3M259 347.5h3M406 347.5h3M265 356.5h3M400 356.5h3M268 359.5h3M397 359.5h3M271 362.5h3M394 362.5h3M274 365.5h3M391 365.5h3M277 368.5h3M388 368.5h3M283 371.5h3M382 371.5h3M286 374.5h3M379 374.5h3M292 377.5h3M373 377.5h3M298 380.5h3M367 380.5h3M304 383.5h6M358 383.5h6M313 386.5h12M343 386.5h12"/>
<path stroke="#000042" d="M313 221.5h9M346 221.5h9M301 224.5h6M361 224.5h6M295 227.5h3M370 227.5h3M289 230.5h3M376 230.5h3M283 233.5h3M382 233.5h3M277 236.5h3M388 236.5h3M274 239.5h3M391 239.5h3M271 242.5h3M394 242.5h3M268 245.5h3M397 245.5h3M265 248.5h3M400 248.5h3M262 251.5h3M403 251.5h3M256 260.5h3M409 260.5h3M253 266.5h3M412 266.5h3M250 275.5h3M415 275.5h3M268 311.5h3M397 311.5h3M250 320.5h3M415 320.5h3M250 323.5h3M415 323.5h3M253 332.5h3M412 332.5h3M256 338.5h3M409 338.5h3M259 344.5h3M406 344.5h3M262 350.5h3M403 350.5h3M265 353.5h3M400 353.5h3M268 356.5h3M397 356.5h3M271 359.5h3M394 359.5h3M274 362.5h3M391 362.5h3M277 365.5h3M388 365.5h3M280 368.5h3M385 368.5h3M289 374.5h3M376 374.5h3M295 377.5h3M370 377.5h3M301 380.5h6M361 380.5h6M310 383.5h6M352 383.5h6M325 386.5h18"/>
<path stroke="#000045" d="M322 221.5h24M307 224.5h6M355 224.5h6M298 227.5h3M367 227.5h3M292 230.5h3M373 230.5h3M286 233.5h3M379 233.5h3M280 236.5h3M385 236.5h3M277 239.5h3M388 239.5h3M262 254.5h3M403 254.5h3M259 257.5h3M406 257.5h3M256 263.5h3M409 263.5h3M253 269.5h3M412 269.5h3M250 278.5h3M415 278.5h3M250 281.5h3M415 281.5h3M250 284.5h3M415 284.5h3M265 287.5h3M400 287.5h3M250 314.5h3M415 314.5h3M250 317.5h3M415 317.5h3M253 329.5h3M412 329.5h3M256 335.5h3M409 335.5h3M259 341.5h3M406 341.5h3M262 347.5h3M403 347.5h3M265 350.5h3M400 350.5h3M280 365.5h3M385 365.5h3M283 368.5h3M382 368.5h3M286 371.5h3M379 371.5h3M292 374.5h3M373 374.5h3M298 377.5h3M367 377.5h3M307 380.5h3M358 380.5h3M316 383.5h15M337 383.5h15"/>
<path stroke="#000047" d="M313 224.5h9M346 224.5h9M301 227.5h6M361 227.5h6M295 230.5h3M370 230.5h3M289 233.5h3M376 233.5h3M283 236.5h3M382 236.5h3M280 239.5h3M385 239.5h3M274 242.5h3M391 242.5h3M271 245.5h3M394 245.5h3M268 248.5h3M397 248.5h3M265 251.5h3M400 251.5h3M259 260.5h3M406 260.5h3M256 266.5h3M409 266.5h3M253 272.5h3M412 272.5h3M253 275.5h3M412 275.5h3M331 305.5h6M268 308.5h3M397 308.5h3M253 323.5h3M412 323.5h3M253 326.5h3M412 326.5h3M256 332.5h3M409 332.5h3M259 338.5h3M406 338.5h3M262 344.5h3M403 344.5h3M268 353.5h3M397 353.5h3M271 356.5h3M394 356.5h3M274 359.5h3M391 359.5h3M277 362.5h3M388 362.5h3M286 368.5h3M379 368.5h3M289 371.5h3M376 371.5h3M295 374.5h3M370 374.5h3M301 377.5h6M361 377.5h6M310 380.5h9M349 380.5h9M331 383.5h6"/>
<path stroke="#00004a" d="M322 224.5h24M307 227.5h6M355 227.5h6M298 230.5h3M367 230.5h3M292 233.5h3M373 233.5h3M286 236.5h3M379 236.5h3M277 242.5h3M388 242.5h3M274 245.5h3M391 245.5h3M271 248.5h3M394 248.5h3M268 251.5h3M397 251.5h3M265 254.5h3M400 254.5h3M262 257.5h3M403 257.5h3M259 263.5h3M406 263.5h3M256 269.5h3M409 269.5h3M253 278.5h3M412 278.5h3M253 281.5h3M412 281.5h3M268 305.5h3M397 305.5h3M253 320.5h3M412 320.5h3M256 329.5h3M409 329.5h3M259 335.5h3M406 335.5h3M262 341.5h3M403 341.5h3M265 347.5h3M400 347.5h3M268 350.5h3M397 350.5h3M271 353.5h3M394 353.5h3M274 356.5h3M391 356.5h3M277 359.5h3M388 359.5h3M280 362.5h3M385 362.5h3M283 365.5h3M382 365.5h3M289 368.5h3M376 368.5h3M292 371.5h3M373 371.5h3M298 374.5h6M364 374.5h6M307 377.5h6M355 377.5h6M319 380.5h12M337 380.5h12"/>
<path stroke="#00004c" d="M313 227.5h6M349 227.5h6M301 230.5h6M361 230.5h6M295 233.5h3M370 233.5h3M289 236.5h3M376 236.5h3M283 239.5h3M382 239.5h3M280 242.5h3M385 242.5h3M262 260.5h3M403 260.5h3M259 266.5h3M406 266.5h3M256 272.5h3M409 272.5h3M253 284.5h3M412 284.5h3M268 302.5h3M397 302.5h3M253 314.5h3M412 314.5h3M253 317.5h3M412 317.5h3M256 326.5h3M409 326.5h3M265 344.5h3M400 344.5h3M286 365.5h3M379 365.5h3M292 368.5h3M373 368.5h3M295 371.5h3M370 371.5h3M304 374.5h3M361 374.5h3M313 377.5h6M349 377.5h6M331 380.5h6"/>
<path stroke="#00004f" d="M319 227.5h30M307 230.5h3M358 230.5h3M298 233.5h3M367 233.5h3M292 236.5h3M373 236.5h3M286 239.5h3M379 239.5h3M277 245.5h3M388 245.5h3M274 248.5h3M391 248.5h3M271 251.5h3M394 251.5h3M268 254.5h3M397 254.5h3M265 257.5h3M400 257.5h3M262 263.5h3M403 263.5h3M259 269.5h3M406 269.5h3M256 275.5h3M409 275.5h3M268 287.5h3M397 287.5h3M256 323.5h3M409 323.5h3M259 332.5h3M406 332.5h3M262 338.5h3M403 338.5h3M265 341.5h3M400 341.5h3M268 347.5h3M397 347.5h3M271 350.5h3M394 350.5h3M274 353.5h3M391 353.5h3M277 356.5h3M388 356.5h3M280 359.5h3M385 359.5h3M283 362.5h3M382 362.5h3M289 365.5h3M376 365.5h3M298 371.5h6M364 371.5h6M307 374.5h3M358 374.5h3M319 377.5h9M340 377.5h9"/>
<path stroke="#000052" d="M310 230.5h6M352 230.5h6M301 233.5h3M364 233.5h3M295 236.5h3M370 236.5h3M289 239.5h3M376 239.5h3M283 242.5h3M382 242.5h3M265 260.5h3M400 260.5h3M256 278.5h3M409 278.5h3M256 281.5h3M409 281.5h3M268 296.5h3M397 296.5h3M268 299.5h3M397 299.5h3M256 320.5h3M409 320.5h3M259 329.5h3M406 329.5h3M262 335.5h3M403 335.5h3M268 344.5h3M397 344.5h3M283 359.5h3M382 359.5h3M286 362.5h3M379 362.5h3M295 368.5h3M370 368.5h3M304 371.5h3M361 371.5h3M310 374.5h6M352 374.5h6M328 377.5h12"/>
<path stroke="#000054" d="M316 230.5h9M343 230.5h9M304 233.5h3M361 233.5h3M298 236.5h3M367 236.5h3M286 242.5h3M379 242.5h3M280 245.5h3M385 245.5h3M277 248.5h3M388 248.5h3M274 251.5h3M391 251.5h3M271 254.5h3M394 254.5h3M268 257.5h3M397 257.5h3M262 266.5h3M403 266.5h3M259 272.5h3M406 272.5h3M256 284.5h3M409 284.5h3M268 293.5h3M397 293.5h3M256 314.5h3M409 314.5h3M256 317.5h3M409 317.5h3M259 326.5h3M406 326.5h3M262 332.5h3M403 332.5h3M265 338.5h3M400 338.5h3M271 347.5h3M394 347.5h3M274 350.5h3M391 350.5h3M277 353.5h3M388 353.5h3M280 356.5h3M385 356.5h3M289 362.5h3M376 362.5h3M292 365.5h3M373 365.5h3M298 368.5h3M367 368.5h3M307 371.5h3M358 371.5h3M316 374.5h6M346 374.5h6"/>
<path stroke="#000057" d="M325 230.5h18M307 233.5h6M355 233.5h6M301 236.5h3M364 236.5h3M292 239.5h3M373 239.5h3M283 245.5h3M382 245.5h3M265 263.5h3M400 263.5h3M262 269.5h3M403 269.5h3M259 275.5h3M406 275.5h3M328 308.5h3M337 308.5h3M259 323.5h3M406 323.5h3M268 341.5h3M397 341.5h3M271 344.5h3M394 344.5h3M286 359.5h3M379 359.5h3M295 365.5h3M370 365.5h3M301 368.5h3M364 368.5h3M310 371.5h3M355 371.5h3M322 374.5h24"/>
<path stroke="#000059" d="M313 233.5h6M349 233.5h6M304 236.5h3M361 236.5h3M295 239.5h3M370 239.5h3M289 242.5h3M376 242.5h3M280 248.5h3M385 248.5h3M277 251.5h3M388 251.5h3M274 254.5h3M391 254.5h3M271 257.5h3M394 257.5h3M268 260.5h3M397 260.5h3M259 278.5h3M406 278.5h3M259 281.5h3M406 281.5h3M271 287.5h3M394 287.5h3M271 311.5h3M394 311.5h3M259 320.5h3M406 320.5h3M262 329.5h3M403 329.5h3M265 335.5h3M400 335.5h3M274 347.5h3M391 347.5h3M277 350.5h3M388 350.5h3M280 353.5h3M385 353.5h3M283 356.5h3M382 356.5h3M292 362.5h3M373 362.5h3M298 365.5h3M367 365.5h3M304 368.5h3M361 368.5h3M313 371.5h6M349 371.5h6"/>
<path stroke="#00005c" d="M319 233.5h6M343 233.5h6M307 236.5h3M358 236.5h3M298 239.5h3M367 239.5h3M292 242.5h3M373 242.5h3M286 245.5h3M379 245.5h3M265 266.5h3M400 266.5h3M262 272.5h3M403 272.5h3M259 284.5h3M406 284.5h3M259 317.5h3M406 317.5h3M262 326.5h3M403 326.5h3M265 332.5h3M400 332.5h3M268 338.5h3M397 338.5h3M271 341.5h3M394 341.5h3M286 356.5h3M379 356.5h3M289 359.5h3M376 359.5h3M295 362.5h3M370 362.5h3M301 365.5h3M364 365.5h3M307 368.5h6M355 368.5h6M319 371.5h9M340 371.5h9"/>
<path stroke="#00005e" d="M325 233.5h18M310 236.5h3M355 236.5h3M301 239.5h3M364 239.5h3M283 248.5h3M382 248.5h3M280 251.5h3M385 251.5h3M271 260.5h3M394 260.5h3M268 263.5h3M397 263.5h3M265 269.5h3M400 269.5h3M262 275.5h3M403 275.5h3M271 308.5h3M394 308.5h3M259 314.5h3M406 314.5h3M262 323.5h3M403 323.5h3M268 335.5h3M397 335.5h3M274 344.5h3M391 344.5h3M277 347.5h3M388 347.5h3M280 350.5h3M385 350.5h3M283 353.5h3M382 353.5h3M292 359.5h3M373 359.5h3M304 365.5h3M361 365.5h3M313 368.5h3M352 368.5h3M328 371.5h12"/>
<path stroke="#000061" d="M313 236.5h6M349 236.5h6M304 239.5h3M361 239.5h3M295 242.5h3M370 242.5h3M289 245.5h3M376 245.5h3M277 254.5h3M388 254.5h3M274 257.5h3M391 257.5h3M262 278.5h3M403 278.5h3M328 305.5h3M337 305.5h3M265 329.5h3M400 329.5h3M271 338.5h3M394 338.5h3M289 356.5h3M376 356.5h3M298 362.5h3M367 362.5h3M307 365.5h3M358 365.5h3M316 368.5h6M346 368.5h6"/>
<path stroke="#000063" d="M319 236.5h6M343 236.5h6M307 239.5h3M358 239.5h3M298 242.5h3M367 242.5h3M292 245.5h3M373 245.5h3M286 248.5h3M379 248.5h3M268 266.5h3M397 266.5h3M265 272.5h3M400 272.5h3M262 281.5h3M403 281.5h3M271 305.5h3M394 305.5h3M262 320.5h3M403 320.5h3M268 332.5h3M397 332.5h3M274 341.5h3M391 341.5h3M277 344.5h3M388 344.5h3M280 347.5h3M385 347.5h3M283 350.5h3M382 350.5h3M286 353.5h3M379 353.5h3M295 359.5h3M370 359.5h3M301 362.5h3M364 362.5h3M310 365.5h3M355 365.5h3M322 368.5h9M337 368.5h9"/>
<path stroke="#000066" d="M325 236.5h18M310 239.5h3M355 239.5h3M301 242.5h3M364 242.5h3M283 251.5h3M382 251.5h3M280 254.5h3M385 254.5h3M274 260.5h3M391 260.5h3M271 263.5h3M394 263.5h3M262 284.5h3M403 284.5h3M262 317.5h3M403 317.5h3M265 326.5h3M400 326.5h3M292 356.5h3M373 356.5h3M298 359.5h3M367 359.5h3M304 362.5h3M361 362.5h3M313 365.5h3M352 365.5h3M331 368.5h6"/>
<path stroke="#000069" d="M313 239.5h3M352 239.5h3M295 245.5h3M370 245.5h3M289 248.5h3M376 248.5h3M277 257.5h3M388 257.5h3M268 269.5h3M397 269.5h3M265 275.5h3M400 275.5h3M274 287.5h3M391 287.5h3M271 302.5h3M394 302.5h3M262 314.5h3M403 314.5h3M265 323.5h3M400 323.5h3M268 329.5h3M397 329.5h3M271 335.5h3M394 335.5h3M274 338.5h3M391 338.5h3M286 350.5h3M379 350.5h3M289 353.5h3M376 353.5h3M307 362.5h3M358 362.5h3M316 365.5h6M346 365.5h6"/>
<path stroke="#00006b" d="M316 239.5h6M346 239.5h6M304 242.5h3M361 242.5h3M298 245.5h3M367 245.5h3M286 251.5h3M379 251.5h3M271 266.5h3M394 266.5h3M265 278.5h3M400 278.5h3M277 341.5h3M388 341.5h3M280 344.5h3M385 344.5h3M283 347.5h3M382 347.5h3M295 356.5h3M370 356.5h3M301 359.5h3M364 359.5h3M310 362.5h3M355 362.5h3M322 365.5h6M340 365.5h6"/>
<path stroke="#00006e" d="M322 239.5h9M337 239.5h9M307 242.5h3M358 242.5h3M292 248.5h3M373 248.5h3M283 254.5h3M382 254.5h3M280 257.5h3M385 257.5h3M274 263.5h3M391 263.5h3M268 272.5h3M397 272.5h3M271 299.5h3M394 299.5h3M265 320.5h3M400 320.5h3M268 326.5h3M397 326.5h3M271 332.5h3M394 332.5h3M292 353.5h3M373 353.5h3M298 356.5h3M367 356.5h3M304 359.5h3M361 359.5h3M313 362.5h3M352 362.5h3M328 365.5h12"/>
<path stroke="#000070" d="M331 239.5h6M310 242.5h3M355 242.5h3M301 245.5h3M364 245.5h3M295 248.5h3M370 248.5h3M289 251.5h3M376 251.5h3M277 260.5h3M388 260.5h3M265 281.5h3M400 281.5h3M271 296.5h3M394 296.5h3M274 335.5h3M391 335.5h3M277 338.5h3M388 338.5h3M286 347.5h3M379 347.5h3M289 350.5h3M376 350.5h3M307 359.5h3M358 359.5h3M316 362.5h3M349 362.5h3"/>
<path stroke="#000073" d="M313 242.5h3M352 242.5h3M304 245.5h3M361 245.5h3M286 254.5h3M379 254.5h3M271 269.5h3M394 269.5h3M268 275.5h3M397 275.5h3M265 284.5h3M400 284.5h3M271 293.5h3M394 293.5h3M274 311.5h3M391 311.5h3M265 317.5h3M400 317.5h3M268 323.5h3M397 323.5h3M271 329.5h3M394 329.5h3M280 341.5h3M385 341.5h3M283 344.5h3M382 344.5h3M295 353.5h3M370 353.5h3M301 356.5h3M364 356.5h3M319 362.5h6M343 362.5h6"/>
<path stroke="#000075" d="M316 242.5h6M346 242.5h6M298 248.5h3M367 248.5h3M292 251.5h3M373 251.5h3M283 257.5h3M382 257.5h3M274 266.5h3M391 266.5h3M265 314.5h3M400 314.5h3M274 332.5h3M391 332.5h3M292 350.5h3M373 350.5h3M310 359.5h3M355 359.5h3M325 362.5h18"/>
<path stroke="#000078" d="M322 242.5h9M337 242.5h9M307 245.5h3M358 245.5h3M280 260.5h3M385 260.5h3M277 263.5h3M388 263.5h3M268 278.5h3M397 278.5h3M268 320.5h3M397 320.5h3M271 326.5h3M394 326.5h3M277 335.5h3M388 335.5h3M289 347.5h3M376 347.5h3M298 353.5h3M367 353.5h3M304 356.5h3M361 356.5h3M313 359.5h3M352 359.5h3"/>
<path stroke="#00007a" d="M331 242.5h6M310 245.5h3M355 245.5h3M301 248.5h3M364 248.5h3M295 251.5h3M370 251.5h3M289 254.5h3M376 254.5h3M271 272.5h3M394 272.5h3M274 308.5h3M391 308.5h3M280 338.5h3M385 338.5h3M283 341.5h3M382 341.5h3M286 344.5h3M379 344.5h3M295 350.5h3M370 350.5h3M301 353.5h3M364 353.5h3M307 356.5h3M358 356.5h3M316 359.5h6M346 359.5h6"/>
<path stroke="#00007d" d="M313 245.5h3M352 245.5h3M286 257.5h3M379 257.5h3M274 269.5h3M391 269.5h3M268 281.5h3M397 281.5h3M277 287.5h3M388 287.5h3M274 329.5h3M391 329.5h3M292 347.5h3M373 347.5h3M310 356.5h3M355 356.5h3M322 359.5h3M343 359.5h3"/>
<path stroke="#000080" d="M316 245.5h3M349 245.5h3M304 248.5h3M361 248.5h3M283 260.5h3M382 260.5h3M277 266.5h3M388 266.5h3M271 275.5h3M394 275.5h3M268 317.5h3M397 317.5h3M271 323.5h3M394 323.5h3M277 332.5h3M388 332.5h3M289 344.5h3M376 344.5h3M298 350.5h3M367 350.5h3M304 353.5h3M361 353.5h3M325 359.5h18"/>
<path stroke="#000082" d="M319 245.5h6M343 245.5h6M307 248.5h3M358 248.5h3M298 251.5h3M367 251.5h3M292 254.5h3M373 254.5h3M280 263.5h3M385 263.5h3M268 284.5h3M397 284.5h3M274 305.5h3M391 305.5h3M280 335.5h3M385 335.5h3M283 338.5h3M382 338.5h3M286 341.5h3M379 341.5h3M313 356.5h3M352 356.5h3"/>
<path stroke="#000085" d="M325 245.5h18M310 248.5h3M355 248.5h3M289 257.5h3M376 257.5h3M325 308.5h3M340 308.5h3M331 311.5h6M268 314.5h3M397 314.5h3M271 320.5h3M394 320.5h3M274 326.5h3M391 326.5h3M295 347.5h3M370 347.5h3M301 350.5h3M364 350.5h3M307 353.5h3M358 353.5h3M316 356.5h3M349 356.5h3"/>
<path stroke="#00008a" d="M313 248.5h3M352 248.5h3M304 251.5h3M361 251.5h3M286 260.5h3M379 260.5h3M277 269.5h3M388 269.5h3M274 302.5h3M391 302.5h3M280 332.5h3M385 332.5h3M289 341.5h3M376 341.5h3M298 347.5h3M367 347.5h3M304 350.5h3M361 350.5h3M325 356.5h18"/>
<path stroke="#00008c" d="M316 248.5h3M349 248.5h3M298 254.5h3M367 254.5h3M292 257.5h3M373 257.5h3M283 263.5h3M382 263.5h3M280 266.5h3M385 266.5h3M277 311.5h3M388 311.5h3M271 317.5h3M394 317.5h3M274 323.5h3M391 323.5h3M283 335.5h3M382 335.5h3M286 338.5h3M379 338.5h3M313 353.5h3M352 353.5h3"/>
<path stroke="#00008f" d="M319 248.5h6M343 248.5h6M307 251.5h3M358 251.5h3M274 275.5h3M391 275.5h3M271 281.5h3M394 281.5h3M295 344.5h3M370 344.5h3M307 350.5h3M358 350.5h3M316 353.5h3M349 353.5h3"/>
<path stroke="#000091" d="M325 248.5h18M289 260.5h3M376 260.5h3M274 299.5h3M391 299.5h3M328 311.5h3M337 311.5h3M277 326.5h3M388 326.5h3M292 341.5h3M373 341.5h3M301 347.5h3M364 347.5h3M319 353.5h3M346 353.5h3"/>
<path stroke="#000087" d="M301 251.5h3M364 251.5h3M295 254.5h3M370 254.5h3M274 272.5h3M391 272.5h3M271 278.5h3M394 278.5h3M277 329.5h3M388 329.5h3M292 344.5h3M373 344.5h3M310 353.5h3M355 353.5h3M319 356.5h6M343 356.5h6"/>
<path stroke="#000094" d="M310 251.5h3M355 251.5h3M301 254.5h3M364 254.5h3M295 257.5h3M370 257.5h3M271 284.5h3M394 284.5h3M325 305.5h3M340 305.5h3M271 314.5h3M394 314.5h3M274 320.5h3M391 320.5h3M280 329.5h3M385 329.5h3M289 338.5h3M376 338.5h3M310 350.5h3M355 350.5h3M322 353.5h3M343 353.5h3"/>
<path stroke="#000096" d="M313 251.5h3M352 251.5h3M286 263.5h3M379 263.5h3M277 272.5h3M388 272.5h3M280 287.5h3M385 287.5h3M283 332.5h3M382 332.5h3M286 335.5h3M379 335.5h3M298 344.5h3M367 344.5h3M304 347.5h3M361 347.5h3M313 350.5h3M352 350.5h3M325 353.5h18"/>
<path stroke="#000099" d="M316 251.5h3M349 251.5h3M304 254.5h3M361 254.5h3M283 266.5h3M382 266.5h3M280 269.5h3M385 269.5h3M274 278.5h3M391 278.5h3M274 296.5h3M391 296.5h3M277 308.5h3M388 308.5h3M277 323.5h3M388 323.5h3M295 341.5h3M370 341.5h3"/>
<path stroke="#00009c" d="M319 251.5h3M346 251.5h3M298 257.5h3M367 257.5h3M292 260.5h3M373 260.5h3M274 293.5h3M391 293.5h3M274 317.5h3M391 317.5h3M301 344.5h3M364 344.5h3M307 347.5h3M358 347.5h3M316 350.5h3M349 350.5h3"/>
<path stroke="#00009e" d="M322 251.5h3M343 251.5h3M307 254.5h3M358 254.5h3M280 326.5h3M385 326.5h3M292 338.5h3M373 338.5h3M319 350.5h3M346 350.5h3"/>
<path stroke="#0000a1" d="M325 251.5h18M289 263.5h3M376 263.5h3M277 275.5h3M388 275.5h3M274 281.5h3M391 281.5h3M283 329.5h3M382 329.5h3M286 332.5h3M379 332.5h3M289 335.5h3M376 335.5h3M298 341.5h3M367 341.5h3M310 347.5h3M355 347.5h3M322 350.5h3M343 350.5h3"/>
<path stroke="#0000a3" d="M310 254.5h3M355 254.5h3M301 257.5h3M364 257.5h3M295 260.5h3M370 260.5h3M277 305.5h3M388 305.5h3M277 320.5h3M388 320.5h3M304 344.5h3M361 344.5h3M325 350.5h18"/>
<path stroke="#0000a6" d="M313 254.5h3M352 254.5h3M286 266.5h3M379 266.5h3M283 269.5h3M382 269.5h3M280 272.5h3M385 272.5h3M274 314.5h3M391 314.5h3M295 338.5h3M370 338.5h3M313 347.5h3M352 347.5h3"/>
<path stroke="#0000ab" d="M316 254.5h3M349 254.5h3M292 263.5h3M373 263.5h3M325 311.5h3M340 311.5h3M283 326.5h3M382 326.5h3M289 332.5h3M376 332.5h3M292 335.5h3M373 335.5h3M319 347.5h3M346 347.5h3"/>
<path stroke="#0000ad" d="M319 254.5h3M346 254.5h3M307 257.5h3M358 257.5h3M298 260.5h3M367 260.5h3M277 278.5h3M388 278.5h3M277 317.5h3M388 317.5h3M286 329.5h3M379 329.5h3M310 344.5h3M355 344.5h3M322 347.5h3M343 347.5h3"/>
<path stroke="#0000b0" d="M322 254.5h6M340 254.5h6M277 302.5h3M388 302.5h3M298 338.5h3M367 338.5h3M304 341.5h3M361 341.5h3M325 347.5h3M340 347.5h3"/>
<path stroke="#0000b2" d="M328 254.5h12M289 266.5h3M376 266.5h3M280 320.5h3M385 320.5h3M295 335.5h3M370 335.5h3M313 344.5h3M352 344.5h3M328 347.5h12"/>
<path stroke="#0000a8" d="M304 257.5h3M361 257.5h3M274 284.5h3M391 284.5h3M280 311.5h3M385 311.5h3M280 323.5h3M385 323.5h3M301 341.5h3M364 341.5h3M307 344.5h3M358 344.5h3M316 347.5h3M349 347.5h3"/>
<path stroke="#0000b5" d="M310 257.5h3M355 257.5h3M301 260.5h3M364 260.5h3M295 263.5h3M370 263.5h3M286 269.5h3M379 269.5h3M280 275.5h3M385 275.5h3"/>
<path stroke="#0000b8" d="M313 257.5h3M352 257.5h3M283 272.5h3M382 272.5h3M280 308.5h3M385 308.5h3M277 314.5h3M388 314.5h3M283 323.5h3M382 323.5h3M292 332.5h3M373 332.5h3M301 338.5h3M364 338.5h3M307 341.5h3M358 341.5h3M316 344.5h3M349 344.5h3"/>
<path stroke="#0000bd" d="M316 257.5h3M349 257.5h3M304 260.5h3M361 260.5h3M277 299.5h3M388 299.5h3M331 302.5h6M298 335.5h3M367 335.5h3M310 341.5h3M355 341.5h3M322 344.5h3M343 344.5h3"/>
<path stroke="#0000bf" d="M319 257.5h3M346 257.5h3M298 263.5h3M367 263.5h3M292 266.5h3M373 266.5h3M283 287.5h3M382 287.5h3M280 317.5h3M385 317.5h3M304 338.5h3M361 338.5h3M325 344.5h3M340 344.5h3"/>
<path stroke="#0000c2" d="M322 257.5h3M343 257.5h3M307 260.5h3M358 260.5h3M283 311.5h3M382 311.5h3M295 332.5h3M370 332.5h3M313 341.5h3M352 341.5h3M328 344.5h12"/>
<path stroke="#0000c4" d="M325 257.5h6M337 257.5h6M283 320.5h3M382 320.5h3M292 329.5h3M373 329.5h3"/>
<path stroke="#0000c7" d="M331 257.5h6M310 260.5h3M355 260.5h3M289 269.5h3M376 269.5h3M280 278.5h3M385 278.5h3M277 284.5h3M388 284.5h3M277 296.5h3M388 296.5h3M280 305.5h3M385 305.5h3M286 323.5h3M379 323.5h3M289 326.5h3M376 326.5h3M301 335.5h3M364 335.5h3M307 338.5h3M358 338.5h3M316 341.5h3M349 341.5h3"/>
<path stroke="#0000cf" d="M313 260.5h3M352 260.5h3M277 293.5h3M388 293.5h3M304 335.5h3M361 335.5h3M322 341.5h3M343 341.5h3"/>
<path stroke="#0000d1" d="M316 260.5h3M349 260.5h3M304 263.5h3M361 263.5h3M283 317.5h3M382 317.5h3M295 329.5h3M370 329.5h3M325 341.5h3M340 341.5h3"/>
<path stroke="#0000d6" d="M319 260.5h3M346 260.5h3M298 266.5h3M367 266.5h3M283 308.5h3M382 308.5h3M286 320.5h3M379 320.5h3M289 323.5h3M376 323.5h3M301 332.5h3M364 332.5h3M307 335.5h3M358 335.5h3"/>
<path stroke="#0000d9" d="M322 260.5h3M343 260.5h3M307 263.5h3M358 263.5h3M280 281.5h3M385 281.5h3M316 338.5h3M349 338.5h3"/>
<path stroke="#0000db" d="M325 260.5h18M280 302.5h3M385 302.5h3M319 338.5h3M346 338.5h3"/>
<path stroke="#0000c9" d="M301 263.5h3M364 263.5h3M295 266.5h3M370 266.5h3M286 272.5h3M379 272.5h3"/>
<path stroke="#0000e0" d="M310 263.5h3M355 263.5h3M301 266.5h3M364 266.5h3M283 314.5h3M382 314.5h3M295 326.5h3M370 326.5h3M304 332.5h3M361 332.5h3M322 338.5h3M343 338.5h3"/>
<path stroke="#0000e6" d="M313 263.5h3M352 263.5h3M289 320.5h3M376 320.5h3M292 323.5h3M373 323.5h3M313 335.5h3M352 335.5h3M331 338.5h6"/>
<path stroke="#0000eb" d="M316 263.5h3M349 263.5h3M304 266.5h3M361 266.5h3M280 284.5h3M385 284.5h3M316 335.5h3M349 335.5h3"/>
<path stroke="#0000f0" d="M319 263.5h3M346 263.5h3M292 272.5h3M373 272.5h3M280 299.5h3M385 299.5h3M310 332.5h3M355 332.5h3"/>
<path stroke="#0000f2" d="M322 263.5h3M343 263.5h3M298 269.5h3M367 269.5h3M295 323.5h3M370 323.5h3M304 329.5h3M361 329.5h3M322 335.5h3M343 335.5h3"/>
<path stroke="#0000f5" d="M325 263.5h18M307 266.5h3M358 266.5h3M325 302.5h3M340 302.5h3M286 314.5h3M379 314.5h3M289 317.5h3M376 317.5h3M292 320.5h3M373 320.5h3M313 332.5h3M352 332.5h3M325 335.5h6M337 335.5h6"/>
<path stroke="#0000fc" d="M310 266.5h3M355 266.5h3M301 269.5h3M364 269.5h3M283 281.5h3M382 281.5h3M286 308.5h3M379 308.5h3M316 332.5h3M349 332.5h3"/>
<path stroke="#0200ff" d="M313 266.5h3M352 266.5h3M295 272.5h3M370 272.5h3M286 278.5h3M379 278.5h3M280 296.5h3M385 296.5h3M304 326.5h3M361 326.5h3M310 329.5h3M355 329.5h3"/>
<path stroke="#0600ff" d="M316 266.5h3M349 266.5h3M289 314.5h3M376 314.5h3M292 317.5h3M373 317.5h3M313 329.5h3M352 329.5h3M325 332.5h6M337 332.5h6"/>
<path stroke="#0a00ff" d="M319 266.5h3M346 266.5h3M307 326.5h3M358 326.5h3M316 329.5h3M349 329.5h3"/>
<path stroke="#0c00ff" d="M322 266.5h3M343 266.5h3M298 320.5h3M367 320.5h3"/>
<path stroke="#0e00ff" d="M325 266.5h3M340 266.5h3M298 272.5h3M367 272.5h3M292 275.5h3M373 275.5h3M280 293.5h3M385 293.5h3M289 311.5h3M376 311.5h3M310 326.5h3M355 326.5h3M319 329.5h3M346 329.5h3"/>
<path stroke="#1000ff" d="M328 266.5h12M307 269.5h3M358 269.5h3M322 290.5h24M295 317.5h3M370 317.5h3M304 323.5h3M361 323.5h3M322 329.5h3M343 329.5h3"/>
<path stroke="#0000d4" d="M292 269.5h3M373 269.5h3M292 326.5h3M373 326.5h3M313 338.5h3M352 338.5h3M328 341.5h12"/>
<path stroke="#0000e3" d="M295 269.5h3M370 269.5h3M286 275.5h3M379 275.5h3M283 278.5h3M382 278.5h3M286 311.5h3M379 311.5h3M286 317.5h3M379 317.5h3M325 338.5h6M337 338.5h6"/>
<path stroke="#0800ff" d="M304 269.5h3M361 269.5h3M283 302.5h3M382 302.5h3M301 323.5h3M364 323.5h3M331 332.5h6"/>
<path stroke="#1600ff" d="M310 269.5h3M355 269.5h3M286 305.5h3M379 305.5h3M319 311.5h3M346 311.5h3M307 323.5h3M358 323.5h3"/>
<path stroke="#1c00ff" d="M313 269.5h3M352 269.5h3M295 314.5h3M370 314.5h3M304 320.5h3M361 320.5h3M322 326.5h3M343 326.5h3"/>
<path stroke="#2200ff" d="M316 269.5h3M349 269.5h3M328 299.5h3M337 299.5h3M316 323.5h3M349 323.5h3"/>
<path stroke="#2400ff" d="M319 269.5h3M346 269.5h3M304 272.5h3M361 272.5h3M298 314.5h3M367 314.5h3M319 323.5h3M346 323.5h3"/>
<path stroke="#2800ff" d="M322 269.5h6M340 269.5h6M289 308.5h3M376 308.5h3M331 314.5h6M313 320.5h3M352 320.5h3M325 323.5h6M337 323.5h6"/>
<path stroke="#2a00ff" d="M328 269.5h12M301 314.5h3M328 314.5h3M337 314.5h3M364 314.5h3M307 317.5h3M358 317.5h3M316 320.5h3M349 320.5h3M331 323.5h6"/>
<path stroke="#0000de" d="M289 272.5h3M376 272.5h3M322 311.5h3M343 311.5h3M298 329.5h3M367 329.5h3M310 335.5h3M355 335.5h3"/>
<path stroke="#1a00ff" d="M301 272.5h3M364 272.5h3M289 278.5h3M376 278.5h3M331 299.5h6M319 308.5h3M346 308.5h3M310 323.5h3M355 323.5h3M319 326.5h3M346 326.5h3"/>
<path stroke="#2e00ff" d="M307 272.5h3M358 272.5h3M298 275.5h3M367 275.5h3M304 314.5h3M325 314.5h3M340 314.5h3M361 314.5h3M310 317.5h3M355 317.5h3M322 320.5h3M343 320.5h3"/>
<path stroke="#3400ff" d="M310 272.5h3M355 272.5h3M322 302.5h3M343 302.5h3M313 308.5h3M352 308.5h3M310 314.5h12M346 314.5h12M322 317.5h24"/>
<path stroke="#3c00ff" d="M313 272.5h3M352 272.5h3M283 296.5h3M382 296.5h3M325 299.5h3M340 299.5h3"/>
<path stroke="#4000ff" d="M316 272.5h3M349 272.5h3M289 281.5h3M376 281.5h3"/>
<path stroke="#4400ff" d="M319 272.5h3M346 272.5h3M289 305.5h3M376 305.5h3"/>
<path stroke="#4600ff" d="M322 272.5h3M343 272.5h3M304 275.5h3M361 275.5h3M286 284.5h3M379 284.5h3"/>
<path stroke="#4800ff" d="M325 272.5h18"/>
<path stroke="#0000cc" d="M283 275.5h3M382 275.5h3M328 302.5h3M337 302.5h3M322 308.5h3M343 308.5h3M280 314.5h3M385 314.5h3M298 332.5h3M367 332.5h3M310 338.5h3M355 338.5h3M319 341.5h3M346 341.5h3"/>
<path stroke="#0000fa" d="M289 275.5h3M376 275.5h3M286 287.5h3M379 287.5h3M307 329.5h3M358 329.5h3"/>
<path stroke="#1e00ff" d="M295 275.5h3M370 275.5h3M292 311.5h3M373 311.5h3M313 323.5h3M352 323.5h3M325 326.5h3M340 326.5h3"/>
<path stroke="#3a00ff" d="M301 275.5h3M364 275.5h3M295 308.5h15M358 308.5h15"/>
<path stroke="#5000ff" d="M307 275.5h3M358 275.5h3"/>
<path stroke="#5800ff" d="M310 275.5h3M355 275.5h3M295 305.5h15M358 305.5h15"/>
<path stroke="#6000ff" d="M313 275.5h3M352 275.5h3"/>
<path stroke="#6600ff" d="M316 275.5h3M349 275.5h3M289 302.5h3M376 302.5h3"/>
<path stroke="#6a00ff" d="M319 275.5h9M340 275.5h9M325 296.5h3M340 296.5h3"/>
<path stroke="#6800ff" d="M328 275.5h12"/>
<path stroke="#3000ff" d="M292 278.5h3M373 278.5h3M316 308.5h3M349 308.5h3M307 314.5h3M358 314.5h3M313 317.5h3M352 317.5h3M325 320.5h18"/>
<path stroke="#4200ff" d="M295 278.5h3M370 278.5h3"/>
<path stroke="#5400ff" d="M298 278.5h3M367 278.5h3M313 305.5h3M352 305.5h3"/>
<path stroke="#6200ff" d="M301 278.5h3M364 278.5h3"/>
<path stroke="#6e00ff" d="M304 278.5h3M361 278.5h3"/>
<path stroke="#7a00ff" d="M307 278.5h3M358 278.5h3M322 299.5h3M343 299.5h3"/>
<path stroke="#8300ff" d="M310 278.5h3M331 278.5h6M355 278.5h3"/>
<path stroke="#8b03fc" d="M313 278.5h3M325 278.5h3M340 278.5h3M352 278.5h3"/>
<path stroke="#9106f9" d="M316 278.5h6M346 278.5h6"/>
<path stroke="#8f05fa" d="M322 278.5h3M343 278.5h3M301 281.5h3M364 281.5h3"/>
<path stroke="#8700ff" d="M328 278.5h3M337 278.5h3M325 293.5h3M340 293.5h3"/>
<path stroke="#0000ba" d="M277 281.5h3M388 281.5h3M286 326.5h3M379 326.5h3M289 329.5h3M376 329.5h3M319 344.5h3M346 344.5h3"/>
<path stroke="#2000ff" d="M286 281.5h3M379 281.5h3M283 299.5h3M382 299.5h3M295 311.5h24M349 311.5h24M301 317.5h3M364 317.5h3M307 320.5h3M358 320.5h3M328 326.5h12"/>
<path stroke="#5c00ff" d="M292 281.5h3M373 281.5h3"/>
<path stroke="#7200ff" d="M295 281.5h3M370 281.5h3"/>
<path stroke="#8100ff" d="M298 281.5h3M367 281.5h3M286 296.5h3M379 296.5h3"/>
<path stroke="#9d0ef1" d="M304 281.5h3M361 281.5h3M313 299.5h3M352 299.5h3"/>
<path stroke="#a916e9" d="M307 281.5h3M358 281.5h3"/>
<path stroke="#b51de2" d="M310 281.5h3M355 281.5h3M310 293.5h3M355 293.5h3"/>
<path stroke="#bd22dd" d="M313 281.5h3M352 281.5h3M298 284.5h3M367 284.5h3"/>
<path stroke="#c326d9" d="M316 281.5h3M349 281.5h3M313 293.5h3M352 293.5h3"/>
<path stroke="#c125da" d="M319 281.5h3M346 281.5h3"/>
<path stroke="#b920df" d="M322 281.5h3M343 281.5h3M292 293.5h3M373 293.5h3"/>
<path stroke="#ab17e8" d="M325 281.5h3M340 281.5h3"/>
<path stroke="#9f0ff0" d="M328 281.5h3M337 281.5h3"/>
<path stroke="#970af5" d="M331 281.5h6M310 299.5h3M355 299.5h3"/>
<path stroke="#1800ff" d="M283 284.5h3M382 284.5h3M298 317.5h3M367 317.5h3M316 326.5h3M349 326.5h3"/>
<path stroke="#7600ff" d="M289 284.5h3M376 284.5h3M292 302.5h3M373 302.5h3"/>
<path stroke="#990bf4" d="M292 284.5h3M373 284.5h3"/>
<path stroke="#ad18e7" d="M295 284.5h3M370 284.5h3M316 299.5h3M349 299.5h3"/>
<path stroke="#c92ad5" d="M301 284.5h3M364 284.5h3"/>
<path stroke="#d532cd" d="M304 284.5h3M361 284.5h3M289 287.5h3M376 287.5h3M316 296.5h3M349 296.5h3"/>
<path stroke="#e139c6" d="M307 284.5h3M358 284.5h3"/>
<path stroke="#ef42bd" d="M310 284.5h3M355 284.5h3M316 293.5h3M349 293.5h3"/>
<path stroke="#fb4ab5" d="M313 284.5h3M352 284.5h3"/>
<path stroke="#ff4fb0" d="M316 284.5h3M349 284.5h3M298 287.5h3M367 287.5h3"/>
<path stroke="#ff4cb3" d="M319 284.5h3M346 284.5h3M295 287.5h3M370 287.5h3"/>
<path stroke="#eb40bf" d="M322 284.5h3M343 284.5h3"/>
<path stroke="#cb2bd4" d="M325 284.5h3M340 284.5h3"/>
<path stroke="#b31ce3" d="M328 284.5h3M337 284.5h3M310 296.5h3M355 296.5h3M319 299.5h3M346 299.5h3"/>
<path stroke="#a513ec" d="M331 284.5h6"/>
<path stroke="#f949b6" d="M292 287.5h3M373 287.5h3"/>
<path stroke="#ff54ab" d="M301 287.5h3M364 287.5h3"/>
<path stroke="#ff5ba4" d="M304 287.5h3M361 287.5h3"/>
<path stroke="#ff639c" d="M307 287.5h3M358 287.5h3"/>
<path stroke="#ff6e91" d="M310 287.5h3M355 287.5h3"/>
<path stroke="#ff7c83" d="M313 287.5h3M352 287.5h3"/>
<path stroke="#ff8b74" d="M316 287.5h3M349 287.5h3"/>
<path stroke="#ff936c" d="M319 287.5h3M346 287.5h3"/>
<path stroke="#ff7788" d="M322 287.5h3M343 287.5h3"/>
<path stroke="#fd4bb4" d="M325 287.5h3M340 287.5h3"/>
<path stroke="#d330cf" d="M328 287.5h3M337 287.5h3"/>
<path stroke="#bf24db" d="M331 287.5h6"/>
<path stroke="#000000" d="M166 290.5h123M379 290.5h123M166 293.5h72M430 293.5h72M166 296.5h72M430 296.5h72M166 299.5h72M430 299.5h72M166 302.5h72M430 302.5h72M166 305.5h72M430 305.5h72M166 308.5h72M430 308.5h72M166 311.5h72M430 311.5h72"/>
<path stroke="#ffc936" d="M289 290.5h3M376 290.5h3"/>
<path stroke="#ff9c63" d="M292 290.5h3M373 290.5h3"/>
<path stroke="#ff8679" d="M295 290.5h3M370 290.5h3"/>
<path stroke="#ff7e81" d="M298 290.5h3M367 290.5h3"/>
<path stroke="#ff7d82" d="M301 290.5h3M364 290.5h3"/>
<path stroke="#ff827d" d="M304 290.5h3M361 290.5h3"/>
<path stroke="#ff8c73" d="M307 290.5h3M358 290.5h3"/>
<path stroke="#ff9a65" d="M310 290.5h3M355 290.5h3"/>
<path stroke="#ffb14e" d="M313 290.5h3M352 290.5h3"/>
<path stroke="#ffd42b" d="M316 290.5h3M349 290.5h3"/>
<path stroke="#ffff87" d="M319 290.5h3M346 290.5h3"/>
<path stroke="#000001" d="M238 293.5h6M424 293.5h6M238 296.5h6M424 296.5h6M238 299.5h6M424 299.5h6M238 302.5h6M424 302.5h6M238 305.5h6M424 305.5h6M238 308.5h6M424 308.5h6M238 311.5h6M424 311.5h6"/>
<path stroke="#000002" d="M244 293.5h3M421 293.5h3M244 296.5h3M421 296.5h3M244 299.5h3M421 299.5h3M244 302.5h3M421 302.5h3M244 305.5h3M421 305.5h3M244 308.5h3M421 308.5h3M244 311.5h3M421 311.5h3"/>
<path stroke="#000004" d="M247 293.5h3M418 293.5h3M247 296.5h3M418 296.5h3M247 299.5h3M418 299.5h3M247 302.5h3M418 302.5h3M247 305.5h3M418 305.5h3M247 308.5h3M418 308.5h3M247 311.5h3M418 311.5h3"/>
<path stroke="#5600ff" d="M283 293.5h3M382 293.5h3M286 299.5h3M379 299.5h3M292 305.5h3M310 305.5h3M355 305.5h3M373 305.5h3"/>
<path stroke="#b71fe0" d="M286 293.5h3M379 293.5h3"/>
<path stroke="#df38c7" d="M289 293.5h3M376 293.5h3"/>
<path stroke="#b11be4" d="M295 293.5h3M307 293.5h3M358 293.5h3M370 293.5h3M289 296.5h6M307 296.5h3M322 296.5h3M343 296.5h3M358 296.5h3M373 296.5h6"/>
<path stroke="#af19e6" d="M298 293.5h9M361 293.5h9M295 296.5h12M361 296.5h12"/>
<path stroke="#ff6b94" d="M319 293.5h3M346 293.5h3"/>
<path stroke="#ed41be" d="M322 293.5h3M343 293.5h3M319 296.5h3M346 296.5h3"/>
<path stroke="#5e00ff" d="M328 293.5h3M337 293.5h3"/>
<path stroke="#4e00ff" d="M331 293.5h6M316 305.5h3M349 305.5h3"/>
<path stroke="#bb21de" d="M313 296.5h3M352 296.5h3"/>
<path stroke="#4a00ff" d="M328 296.5h3M337 296.5h3"/>
<path stroke="#3e00ff" d="M331 296.5h6"/>
<path stroke="#8901fe" d="M289 299.5h3M376 299.5h3"/>
<path stroke="#9509f6" d="M292 299.5h18M358 299.5h18"/>
<path stroke="#3200ff" d="M286 302.5h3M379 302.5h3M322 314.5h3M343 314.5h3M316 317.5h6M346 317.5h6"/>
<path stroke="#7800ff" d="M295 302.5h21M352 302.5h21"/>
<path stroke="#7e00ff" d="M316 302.5h3M349 302.5h3"/>
<path stroke="#7400ff" d="M319 302.5h3M346 302.5h3"/>
<path stroke="#0000ed" d="M283 305.5h3M382 305.5h3M298 326.5h3M367 326.5h3M319 335.5h3M346 335.5h3"/>
<path stroke="#3600ff" d="M319 305.5h3M346 305.5h3"/>
<path stroke="#0000e8" d="M322 305.5h3M343 305.5h3M301 329.5h3M364 329.5h3M307 332.5h3M358 332.5h3"/>
<path stroke="#3800ff" d="M292 308.5h3M310 308.5h3M355 308.5h3M373 308.5h3"/>
<path stroke="#1200ff" d="M292 314.5h3M373 314.5h3M325 329.5h3M340 329.5h3"/>
<path stroke="#2600ff" d="M304 317.5h3M361 317.5h3M310 320.5h3M355 320.5h3M322 323.5h3M343 323.5h3"/>
<path stroke="#0400ff" d="M295 320.5h3M370 320.5h3M322 332.5h3M343 332.5h3"/>
<path stroke="#1400ff" d="M301 320.5h3M364 320.5h3M313 326.5h3M352 326.5h3M328 329.5h12"/>
<path stroke="#2c00ff" d="M319 320.5h3M346 320.5h3"/>
<path stroke="#0000ff" d="M298 323.5h3M367 323.5h3M319 332.5h3M346 332.5h3"/>
<path stroke="#0000f7" d="M301 326.5h3M364 326.5h3M331 335.5h6"/>
</g>
<g filter="url(#soft2)">
<rect x="290.00" y="285.20" width="2.96" height="3.15" fill="#d733cc"/>
<rect x="292.91" y="285.20" width="2.96" height="3.15" fill="#df38c7"/>
<rect x="295.82" y="285.20" width="2.96" height="3.15" fill="#df38c7"/>
<rect x="298.73" y="285.20" width="2.96" height="3.15" fill="#df38c7"/>
<rect x="301.64" y="285.20" width="2.96" height="3.15" fill="#e73dc2"/>
<rect x="304.55" y="285.20" width="2.96" height="3.15" fill="#e73dc2"/>
<rect x="307.45" y="285.20" width="2.96" height="3.15" fill="#ef42bd"/>
<rect x="310.36" y="285.20" width="2.96" height="3.15" fill="#ff52ad"/>
<rect x="313.27" y="285.20" width="2.96" height="3.15" fill="#ff619e"/>
<rect x="316.18" y="285.20" width="2.96" height="3.15" fill="#ff619e"/>
<rect x="319.09" y="285.20" width="2.96" height="3.15" fill="#ff52ad"/>
<rect x="290.00" y="288.30" width="2.96" height="2.75" fill="#ff619e"/>
<rect x="292.91" y="288.30" width="2.96" height="2.75" fill="#ff708f"/>
<rect x="295.82" y="288.30" width="2.96" height="2.75" fill="#ff619e"/>
<rect x="298.73" y="288.30" width="2.96" height="2.75" fill="#ff5ca3"/>
<rect x="301.64" y="288.30" width="2.96" height="2.75" fill="#ff5ca3"/>
<rect x="304.55" y="288.30" width="2.96" height="2.75" fill="#ff5ca3"/>
<rect x="307.45" y="288.30" width="2.96" height="2.75" fill="#ff619e"/>
<rect x="310.36" y="288.30" width="2.96" height="2.75" fill="#ff6b94"/>
<rect x="313.27" y="288.30" width="2.96" height="2.75" fill="#ff8a75"/>
<rect x="316.18" y="288.30" width="2.96" height="2.75" fill="#ff9e61"/>
<rect x="319.09" y="288.30" width="2.96" height="2.75" fill="#ff8080"/>
<rect x="290.00" y="291.00" width="2.96" height="1.25" fill="#ff758a"/>
<rect x="292.91" y="291.00" width="2.96" height="1.25" fill="#fff50a"/>
<rect x="295.82" y="291.00" width="2.96" height="1.25" fill="#ff8a75"/>
<rect x="298.73" y="291.00" width="2.96" height="1.25" fill="#ff6699"/>
<rect x="301.64" y="291.00" width="2.96" height="1.25" fill="#ff619e"/>
<rect x="304.55" y="291.00" width="2.96" height="1.25" fill="#ff619e"/>
<rect x="307.45" y="291.00" width="2.96" height="1.25" fill="#ff6699"/>
<rect x="310.36" y="291.00" width="2.96" height="1.25" fill="#ff758a"/>
<rect x="313.27" y="291.00" width="2.96" height="1.25" fill="#ffb34d"/>
<rect x="316.18" y="291.00" width="2.96" height="1.25" fill="#ffffff"/>
<rect x="319.09" y="291.00" width="2.96" height="1.25" fill="#ffa857"/>
<rect x="290.00" y="292.20" width="2.96" height="2.85" fill="#ff9e61"/>
<rect x="292.91" y="292.20" width="2.96" height="2.85" fill="#ffcc33"/>
<rect x="295.82" y="292.20" width="2.96" height="2.85" fill="#ff8080"/>
<rect x="298.73" y="292.20" width="2.96" height="2.85" fill="#ff6b94"/>
<rect x="301.64" y="292.20" width="2.96" height="2.85" fill="#ff619e"/>
<rect x="304.55" y="292.20" width="2.96" height="2.85" fill="#ff619e"/>
<rect x="307.45" y="292.20" width="2.96" height="2.85" fill="#ff6699"/>
<rect x="310.36" y="292.20" width="2.96" height="2.85" fill="#ff708f"/>
<rect x="313.27" y="292.20" width="2.96" height="2.85" fill="#ff9966"/>
<rect x="316.18" y="292.20" width="2.96" height="2.85" fill="#ffff00"/>
<rect x="319.09" y="292.20" width="2.96" height="2.85" fill="#ffa857"/>
<rect x="290.00" y="295.00" width="2.96" height="2.25" fill="#ffa857"/>
<rect x="292.91" y="295.00" width="2.96" height="2.25" fill="#ff946b"/>
<rect x="295.82" y="295.00" width="2.96" height="2.25" fill="#ff758a"/>
<rect x="298.73" y="295.00" width="2.96" height="2.25" fill="#ff619e"/>
<rect x="301.64" y="295.00" width="2.96" height="2.25" fill="#ff57a8"/>
<rect x="304.55" y="295.00" width="2.96" height="2.25" fill="#ff57a8"/>
<rect x="307.45" y="295.00" width="2.96" height="2.25" fill="#ff5ca3"/>
<rect x="310.36" y="295.00" width="2.96" height="2.25" fill="#ff619e"/>
<rect x="313.27" y="295.00" width="2.96" height="2.25" fill="#ff758a"/>
<rect x="316.18" y="295.00" width="2.96" height="2.25" fill="#ffa857"/>
<rect x="319.09" y="295.00" width="2.96" height="2.25" fill="#ffb34d"/>
<rect x="375.09" y="285.20" width="2.96" height="3.15" fill="#d733cc"/>
<rect x="372.18" y="285.20" width="2.96" height="3.15" fill="#df38c7"/>
<rect x="369.27" y="285.20" width="2.96" height="3.15" fill="#df38c7"/>
<rect x="366.36" y="285.20" width="2.96" height="3.15" fill="#df38c7"/>
<rect x="363.45" y="285.20" width="2.96" height="3.15" fill="#e73dc2"/>
<rect x="360.55" y="285.20" width="2.96" height="3.15" fill="#e73dc2"/>
<rect x="357.64" y="285.20" width="2.96" height="3.15" fill="#ef42bd"/>
<rect x="354.73" y="285.20" width="2.96" height="3.15" fill="#ff52ad"/>
<rect x="351.82" y="285.20" width="2.96" height="3.15" fill="#ff619e"/>
<rect x="348.91" y="285.20" width="2.96" height="3.15" fill="#ff619e"/>
<rect x="346.00" y="285.20" width="2.96" height="3.15" fill="#ff52ad"/>
<rect x="375.09" y="288.30" width="2.96" height="2.75" fill="#ff619e"/>
<rect x="372.18" y="288.30" width="2.96" height="2.75" fill="#ff708f"/>
<rect x="369.27" y="288.30" width="2.96" height="2.75" fill="#ff619e"/>
<rect x="366.36" y="288.30" width="2.96" height="2.75" fill="#ff5ca3"/>
<rect x="363.45" y="288.30" width="2.96" height="2.75" fill="#ff5ca3"/>
<rect x="360.55" y="288.30" width="2.96" height="2.75" fill="#ff5ca3"/>
<rect x="357.64" y="288.30" width="2.96" height="2.75" fill="#ff619e"/>
<rect x="354.73" y="288.30" width="2.96" height="2.75" fill="#ff6b94"/>
<rect x="351.82" y="288.30" width="2.96" height="2.75" fill="#ff8a75"/>
<rect x="348.91" y="288.30" width="2.96" height="2.75" fill="#ff9e61"/>
<rect x="346.00" y="288.30" width="2.96" height="2.75" fill="#ff8080"/>
<rect x="375.09" y="291.00" width="2.96" height="1.25" fill="#ff758a"/>
<rect x="372.18" y="291.00" width="2.96" height="1.25" fill="#fff50a"/>
<rect x="369.27" y="291.00" width="2.96" height="1.25" fill="#ff8a75"/>
<rect x="366.36" y="291.00" width="2.96" height="1.25" fill="#ff6699"/>
<rect x="363.45" y="291.00" width="2.96" height="1.25" fill="#ff619e"/>
<rect x="360.55" y="291.00" width="2.96" height="1.25" fill="#ff619e"/>
<rect x="357.64" y="291.00" width="2.96" height="1.25" fill="#ff6699"/>
<rect x="354.73" y="291.00" width="2.96" height="1.25" fill="#ff758a"/>
<rect x="351.82" y="291.00" width="2.96" height="1.25" fill="#ffb34d"/>
<rect x="348.91" y="291.00" width="2.96" height="1.25" fill="#ffffff"/>
<rect x="346.00" y="291.00" width="2.96" height="1.25" fill="#ffa857"/>
<rect x="375.09" y="292.20" width="2.96" height="2.85" fill="#ff9e61"/>
<rect x="372.18" y="292.20" width="2.96" height="2.85" fill="#ffcc33"/>
<rect x="369.27" y="292.20" width="2.96" height="2.85" fill="#ff8080"/>
<rect x="366.36" y="292.20" width="2.96" height="2.85" fill="#ff6b94"/>
<rect x="363.45" y="292.20" width="2.96" height="2.85" fill="#ff619e"/>
<rect x="360.55" y="292.20" width="2.96" height="2.85" fill="#ff619e"/>
<rect x="357.64" y="292.20" width="2.96" height="2.85" fill="#ff6699"/>
<rect x="354.73" y="292.20" width="2.96" height="2.85" fill="#ff708f"/>
<rect x="351.82" y="292.20" width="2.96" height="2.85" fill="#ff9966"/>
<rect x="348.91" y="292.20" width="2.96" height="2.85" fill="#ffff00"/>
<rect x="346.00" y="292.20" width="2.96" height="2.85" fill="#ffa857"/>
<rect x="375.09" y="295.00" width="2.96" height="2.25" fill="#ffa857"/>
<rect x="372.18" y="295.00" width="2.96" height="2.25" fill="#ff946b"/>
<rect x="369.27" y="295.00" width="2.96" height="2.25" fill="#ff758a"/>
<rect x="366.36" y="295.00" width="2.96" height="2.25" fill="#ff619e"/>
<rect x="363.45" y="295.00" width="2.96" height="2.25" fill="#ff57a8"/>
<rect x="360.55" y="295.00" width="2.96" height="2.25" fill="#ff57a8"/>
<rect x="357.64" y="295.00" width="2.96" height="2.25" fill="#ff5ca3"/>
<rect x="354.73" y="295.00" width="2.96" height="2.25" fill="#ff619e"/>
<rect x="351.82" y="295.00" width="2.96" height="2.25" fill="#ff758a"/>
<rect x="348.91" y="295.00" width="2.96" height="2.25" fill="#ffa857"/>
<rect x="346.00" y="295.00" width="2.96" height="2.25" fill="#ffb34d"/>
<rect x="293.0" y="290.6" width="3.2" height="1.7" fill="#ffff20"/><rect x="371.8" y="290.6" width="3.2" height="1.7" fill="#ffff20"/><rect x="314.8" y="290.3" width="4.0" height="2.2" fill="#ffffff"/><rect x="349.2" y="290.3" width="4.0" height="2.2" fill="#ffffff"/><rect x="293.0" y="293.0" width="3.0" height="0.9" fill="#ffe01f"/><rect x="372.0" y="293.0" width="3.0" height="0.9" fill="#ffe01f"/><rect x="315.0" y="293.0" width="3.4" height="1.0" fill="#ffff9f"/><rect x="349.6" y="293.0" width="3.4" height="1.0" fill="#ffff9f"/>
<rect x="322.2" y="288.2" width="23.6" height="2.8" fill="#1000ff"/>
<rect x="322.2" y="290.9" width="23.6" height="1.4" fill="#000"/>
</g>
</g>
</svg>
<div class="e" style="left:9px;top:10px;width:1px;height:582px;background:#3a3a32"></div>
<div class="e" style="left:658px;top:10px;width:1px;height:582px;background:#6e6e55"></div>
<div class="e" style="left:9px;top:591px;width:650px;height:1px;background:#6e6e55"></div>
<div class="e" style="left:9px;top:10px;width:650px;height:1px;background:#0a0a40"></div>
<div class="e" style="left:11px;top:11px;width:647px;height:1px;background:#3c3cff"></div>
<div class="e" style="left:11px;top:12px;width:647px;height:1px;background:#0d0d50"></div>
<div class="e" style="left:10px;top:589px;width:648px;height:1px;background:#3030e8"></div>
<div class="e" style="left:10px;top:590px;width:648px;height:1px;background:#1616be"></div>
<div class="e" style="left:10px;top:12px;width:1px;height:578px;background:#2828ff"></div>
<div class="e" style="left:11px;top:12px;width:1px;height:578px;background:#1a1aaa"></div>
<div class="e" style="left:656px;top:12px;width:1px;height:578px;background:#3030e8"></div>
<div class="e" style="left:657px;top:12px;width:1px;height:578px;background:#1616be"></div>
<div class="e" style="left:9px;top:10px;width:2px;height:2px;background:#000"></div>
<div class="e" style="left:657px;top:10px;width:2px;height:2px;background:#000"></div>
<div class="e" style="left:9px;top:590px;width:2px;height:2px;background:#000"></div>
<div class="e" style="left:657px;top:590px;width:2px;height:2px;background:#000"></div>
<div class="vline"></div>
<div class="hline"></div>
<div class="vstub"></div>
<div class="hstub"></div>
<div class="legend">
<div class="t" style="top:2px">EMagTotal</div>
<div class="ln" style="top:18px"></div>
<div class="t" style="top:22px">Type: Linear</div>
<div class="ln" style="top:38px"></div>
<div class="bar"></div>
<div class="lb" style="top:42px">1407</div><div class="lb" style="top:55px">1266</div><div class="lb" style="top:68px">1125</div><div class="lb" style="top:81px">985</div><div class="lb" style="top:94px">844</div><div class="lb" style="top:107px">703</div><div class="lb" style="top:120px">562</div><div class="lb" style="top:133px">422</div><div class="lb" style="top:146px">281</div><div class="lb" style="top:159px">140</div><div class="lb" style="top:172px">0</div>
<div class="ln" style="top:189px"></div>
<div class="st" style="top:192px">Max: 1.41e+003</div><div class="st" style="top:205px">Min: 0</div><div class="st" style="top:218px">Units: V/m</div><div class="st" style="top:231px">Mean: 26.5</div><div class="st" style="top:244px">STD: 72.7</div>
</div>
</body></html>
